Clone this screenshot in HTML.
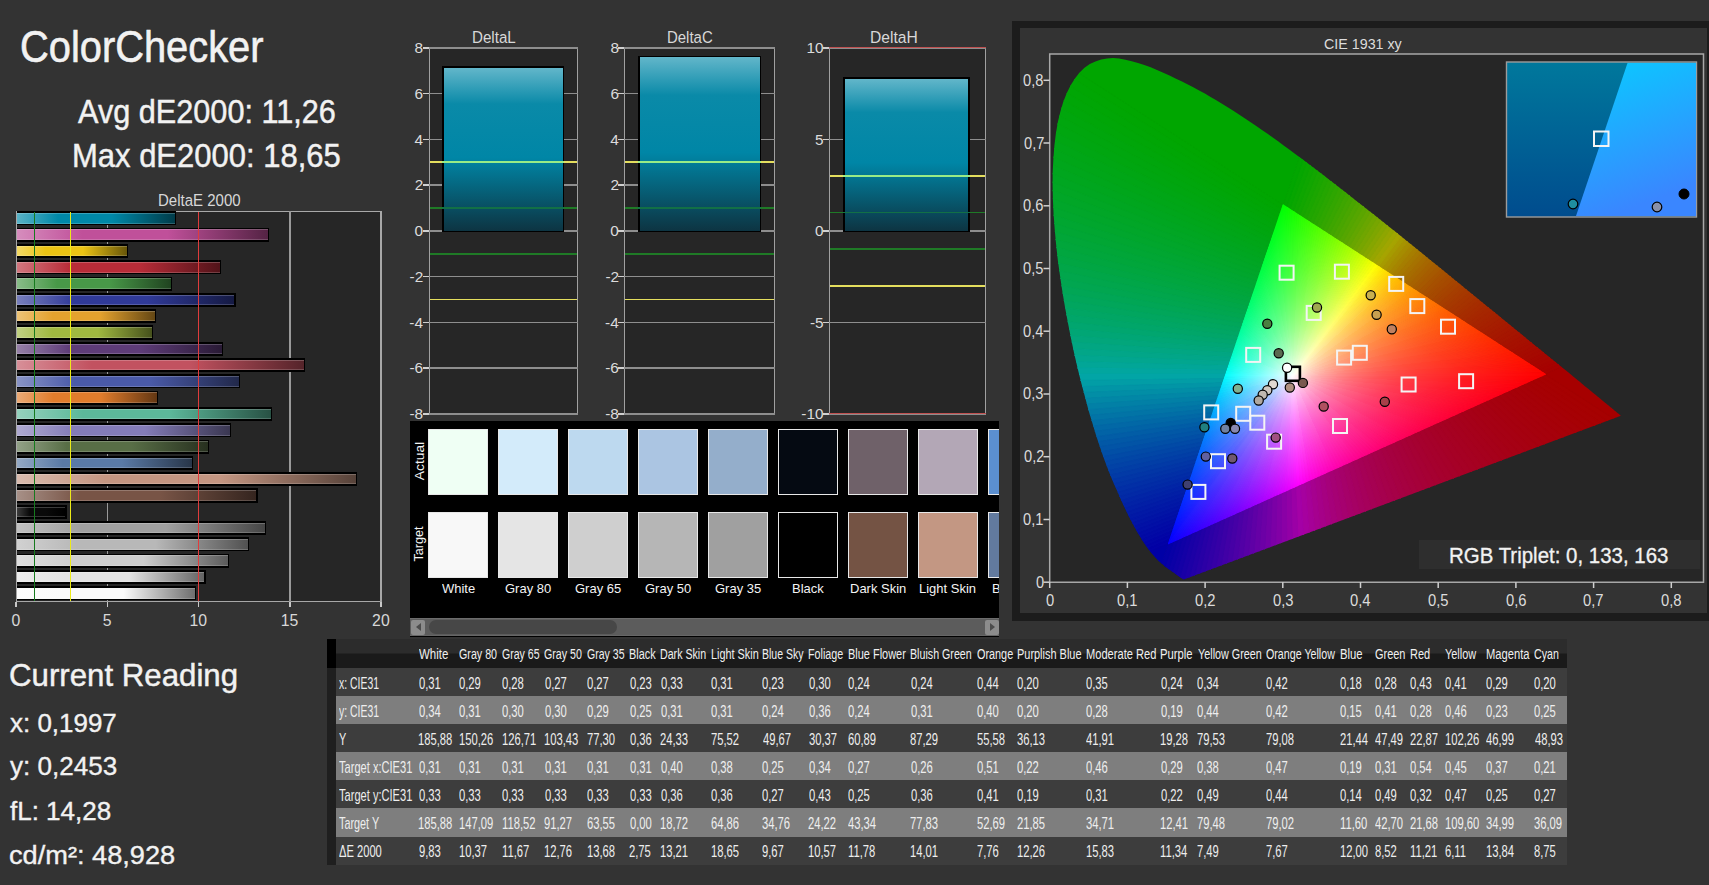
<!DOCTYPE html>
<html><head><meta charset="utf-8"><style>
html,body{margin:0;padding:0;}
body{width:1709px;height:885px;background:#333333;position:relative;overflow:hidden;font-family:"Liberation Sans",sans-serif;}
.t{position:absolute;white-space:pre;transform-origin:0 0;}
</style></head><body>
<div class="t" style="left:19.61px;top:25.00px;font-size:43.77px;line-height:43.77px;color:#f2f2f2;transform:scaleX(0.9101);-webkit-text-stroke:0.60px #f2f2f2;">ColorChecker</div>
<div class="t" style="left:77.80px;top:95.00px;font-size:33.04px;line-height:33.04px;color:#f2f2f2;transform:scaleX(0.9279);-webkit-text-stroke:0.46px #f2f2f2;">Avg dE2000: 11,26</div>
<div class="t" style="left:71.72px;top:140.00px;font-size:32.46px;line-height:32.46px;color:#f2f2f2;transform:scaleX(0.9547);-webkit-text-stroke:0.45px #f2f2f2;">Max dE2000: 18,65</div>
<div class="t" style="left:157.80px;top:193.00px;font-size:16.52px;line-height:16.52px;color:#d8d8d8;transform:scaleX(0.9096);">DeltaE 2000</div>
<div style="position:absolute;left:16.00px;top:210.50px;width:366.30px;height:391.80px;background:#262626;box-sizing:border-box;border:1.5px solid #a8a8a8;border-right-width:2px"></div>
<div style="position:absolute;left:106.75px;top:210.50px;width:1.50px;height:391.80px;background:#9a9a9a"></div>
<div style="position:absolute;left:289.25px;top:210.50px;width:1.50px;height:391.80px;background:#9a9a9a"></div>
<div style="position:absolute;left:17.00px;top:211.30px;width:159.19px;height:14.20px;background:#000"></div>
<div style="position:absolute;left:17.00px;top:213.10px;width:157.89px;height:10.60px;background:linear-gradient(to right,#59b2c6 0%,#0088a8 26%,#0088a8 60%,#003c4a 100%);box-shadow:inset 0 1px rgba(255,255,255,0.22),inset 0 -1px rgba(255,255,255,0.18)"></div>
<div style="position:absolute;left:17.00px;top:227.60px;width:252.08px;height:14.20px;background:#000"></div>
<div style="position:absolute;left:17.00px;top:229.40px;width:250.78px;height:10.60px;background:linear-gradient(to right,#d68dbd 0%,#c0509a 26%,#c0509a 60%,#542344 100%);box-shadow:inset 0 1px rgba(255,255,255,0.22),inset 0 -1px rgba(255,255,255,0.18)"></div>
<div style="position:absolute;left:17.00px;top:243.90px;width:111.01px;height:14.20px;background:#000"></div>
<div style="position:absolute;left:17.00px;top:245.70px;width:109.71px;height:10.60px;background:linear-gradient(to right,#f3d966 0%,#ecc414 26%,#ecc414 60%,#685609 100%);box-shadow:inset 0 1px rgba(255,255,255,0.22),inset 0 -1px rgba(255,255,255,0.18)"></div>
<div style="position:absolute;left:17.00px;top:260.20px;width:204.08px;height:14.20px;background:#000"></div>
<div style="position:absolute;left:17.00px;top:262.00px;width:202.78px;height:10.60px;background:linear-gradient(to right,#d1767e 0%,#b82c38 26%,#b82c38 60%,#511319 100%);box-shadow:inset 0 1px rgba(255,255,255,0.22),inset 0 -1px rgba(255,255,255,0.18)"></div>
<div style="position:absolute;left:17.00px;top:276.50px;width:154.99px;height:14.20px;background:#000"></div>
<div style="position:absolute;left:17.00px;top:278.30px;width:153.69px;height:10.60px;background:linear-gradient(to right,#88bc88 0%,#489848 26%,#489848 60%,#204320 100%);box-shadow:inset 0 1px rgba(255,255,255,0.22),inset 0 -1px rgba(255,255,255,0.18)"></div>
<div style="position:absolute;left:17.00px;top:292.80px;width:218.50px;height:14.20px;background:#000"></div>
<div style="position:absolute;left:17.00px;top:294.60px;width:217.20px;height:10.60px;background:linear-gradient(to right,#787fbc 0%,#303a98 26%,#303a98 60%,#151a43 100%);box-shadow:inset 0 1px rgba(255,255,255,0.22),inset 0 -1px rgba(255,255,255,0.18)"></div>
<div style="position:absolute;left:17.00px;top:309.10px;width:139.48px;height:14.20px;background:#000"></div>
<div style="position:absolute;left:17.00px;top:310.90px;width:138.18px;height:10.60px;background:linear-gradient(to right,#edc377 0%,#e4a22e 26%,#e4a22e 60%,#644714 100%);box-shadow:inset 0 1px rgba(255,255,255,0.22),inset 0 -1px rgba(255,255,255,0.18)"></div>
<div style="position:absolute;left:17.00px;top:325.40px;width:136.19px;height:14.20px;background:#000"></div>
<div style="position:absolute;left:17.00px;top:327.20px;width:134.89px;height:10.60px;background:linear-gradient(to right,#c1d183 0%,#a0b840 26%,#a0b840 60%,#46511c 100%);box-shadow:inset 0 1px rgba(255,255,255,0.22),inset 0 -1px rgba(255,255,255,0.18)"></div>
<div style="position:absolute;left:17.00px;top:341.70px;width:206.45px;height:14.20px;background:#000"></div>
<div style="position:absolute;left:17.00px;top:343.50px;width:205.15px;height:10.60px;background:linear-gradient(to right,#9680a7 0%,#5e3c78 26%,#5e3c78 60%,#291a35 100%);box-shadow:inset 0 1px rgba(255,255,255,0.22),inset 0 -1px rgba(255,255,255,0.18)"></div>
<div style="position:absolute;left:17.00px;top:358.00px;width:288.40px;height:14.20px;background:#000"></div>
<div style="position:absolute;left:17.00px;top:359.80px;width:287.10px;height:10.60px;background:linear-gradient(to right,#d78f98 0%,#c25260 26%,#c25260 60%,#55242a 100%);box-shadow:inset 0 1px rgba(255,255,255,0.22),inset 0 -1px rgba(255,255,255,0.18)"></div>
<div style="position:absolute;left:17.00px;top:374.30px;width:223.25px;height:14.20px;background:#000"></div>
<div style="position:absolute;left:17.00px;top:376.10px;width:221.94px;height:10.60px;background:linear-gradient(to right,#8994c6 0%,#4a5aa8 26%,#4a5aa8 60%,#21284a 100%);box-shadow:inset 0 1px rgba(255,255,255,0.22),inset 0 -1px rgba(255,255,255,0.18)"></div>
<div style="position:absolute;left:17.00px;top:390.60px;width:141.12px;height:14.20px;background:#000"></div>
<div style="position:absolute;left:17.00px;top:392.40px;width:139.82px;height:10.60px;background:linear-gradient(to right,#ebaa76 0%,#e07c2c 26%,#e07c2c 60%,#633713 100%);box-shadow:inset 0 1px rgba(255,255,255,0.22),inset 0 -1px rgba(255,255,255,0.18)"></div>
<div style="position:absolute;left:17.00px;top:406.90px;width:255.18px;height:14.20px;background:#000"></div>
<div style="position:absolute;left:17.00px;top:408.70px;width:253.88px;height:10.60px;background:linear-gradient(to right,#95d1bd 0%,#5cb89a 26%,#5cb89a 60%,#285144 100%);box-shadow:inset 0 1px rgba(255,255,255,0.22),inset 0 -1px rgba(255,255,255,0.18)"></div>
<div style="position:absolute;left:17.00px;top:423.20px;width:214.48px;height:14.20px;background:#000"></div>
<div style="position:absolute;left:17.00px;top:425.00px;width:213.18px;height:10.60px;background:linear-gradient(to right,#afaad1 0%,#847cb8 26%,#847cb8 60%,#3a3751 100%);box-shadow:inset 0 1px rgba(255,255,255,0.22),inset 0 -1px rgba(255,255,255,0.18)"></div>
<div style="position:absolute;left:17.00px;top:439.50px;width:192.40px;height:14.20px;background:#000"></div>
<div style="position:absolute;left:17.00px;top:441.30px;width:191.10px;height:10.60px;background:linear-gradient(to right,#92a187 0%,#586e46 26%,#586e46 60%,#27301f 100%);box-shadow:inset 0 1px rgba(255,255,255,0.22),inset 0 -1px rgba(255,255,255,0.18)"></div>
<div style="position:absolute;left:17.00px;top:455.80px;width:175.98px;height:14.20px;background:#000"></div>
<div style="position:absolute;left:17.00px;top:457.60px;width:174.68px;height:10.60px;background:linear-gradient(to right,#94a9c5 0%,#5a7aa6 26%,#5a7aa6 60%,#283649 100%);box-shadow:inset 0 1px rgba(255,255,255,0.22),inset 0 -1px rgba(255,255,255,0.18)"></div>
<div style="position:absolute;left:17.00px;top:472.10px;width:339.86px;height:14.20px;background:#000"></div>
<div style="position:absolute;left:17.00px;top:473.90px;width:338.56px;height:10.60px;background:linear-gradient(to right,#d9bbae 0%,#c49682 26%,#c49682 60%,#564239 100%);box-shadow:inset 0 1px rgba(255,255,255,0.22),inset 0 -1px rgba(255,255,255,0.18)"></div>
<div style="position:absolute;left:17.00px;top:488.40px;width:240.58px;height:14.20px;background:#000"></div>
<div style="position:absolute;left:17.00px;top:490.20px;width:239.28px;height:10.60px;background:linear-gradient(to right,#a79087 0%,#785446 26%,#785446 60%,#35251f 100%);box-shadow:inset 0 1px rgba(255,255,255,0.22),inset 0 -1px rgba(255,255,255,0.18)"></div>
<div style="position:absolute;left:17.00px;top:504.70px;width:49.69px;height:14.20px;background:#000"></div>
<div style="position:absolute;left:17.00px;top:506.50px;width:48.39px;height:10.60px;background:linear-gradient(to right,#3c3c3c 0%,#0a0a0a 26%,#0a0a0a 60%,#000000 100%);box-shadow:inset 0 1px rgba(255,255,255,0.22),inset 0 -1px rgba(255,255,255,0.18)"></div>
<div style="position:absolute;left:17.00px;top:521.00px;width:249.16px;height:14.20px;background:#000"></div>
<div style="position:absolute;left:17.00px;top:522.80px;width:247.86px;height:10.60px;background:linear-gradient(to right,#c1c1c1 0%,#a0a0a0 26%,#a0a0a0 60%,#464646 100%);box-shadow:inset 0 1px rgba(255,255,255,0.22),inset 0 -1px rgba(255,255,255,0.18)"></div>
<div style="position:absolute;left:17.00px;top:537.30px;width:232.37px;height:14.20px;background:#000"></div>
<div style="position:absolute;left:17.00px;top:539.10px;width:231.07px;height:10.60px;background:linear-gradient(to right,#d1d1d1 0%,#b8b8b8 26%,#b8b8b8 60%,#515151 100%);box-shadow:inset 0 1px rgba(255,255,255,0.22),inset 0 -1px rgba(255,255,255,0.18)"></div>
<div style="position:absolute;left:17.00px;top:553.60px;width:212.48px;height:14.20px;background:#000"></div>
<div style="position:absolute;left:17.00px;top:555.40px;width:211.18px;height:10.60px;background:linear-gradient(to right,#dfdfdf 0%,#cecece 26%,#cecece 60%,#5b5b5b 100%);box-shadow:inset 0 1px rgba(255,255,255,0.22),inset 0 -1px rgba(255,255,255,0.18)"></div>
<div style="position:absolute;left:17.00px;top:569.90px;width:188.75px;height:14.20px;background:#000"></div>
<div style="position:absolute;left:17.00px;top:571.70px;width:187.45px;height:10.60px;background:linear-gradient(to right,#ececec 0%,#e2e2e2 26%,#e2e2e2 60%,#636363 100%);box-shadow:inset 0 1px rgba(255,255,255,0.22),inset 0 -1px rgba(255,255,255,0.18)"></div>
<div style="position:absolute;left:17.00px;top:586.20px;width:178.90px;height:14.20px;background:#000"></div>
<div style="position:absolute;left:17.00px;top:588.00px;width:177.60px;height:10.60px;background:linear-gradient(to right,#fcfcfc 0%,#fafafa 26%,#fafafa 60%,#6e6e6e 100%);box-shadow:inset 0 1px rgba(255,255,255,0.22),inset 0 -1px rgba(255,255,255,0.18)"></div>
<div style="position:absolute;left:33.60px;top:211.50px;width:1.30px;height:389.80px;background:#167a1e"></div>
<div style="position:absolute;left:70.05px;top:211.50px;width:1.40px;height:389.80px;background:#ecea18"></div>
<div style="position:absolute;left:197.70px;top:211.50px;width:1.60px;height:389.80px;background:#e03c3c"></div>
<div style="position:absolute;left:15.25px;top:602.30px;width:1.50px;height:5.00px;background:#c8c8c8"></div>
<div class="t" style="left:11.58px;top:613.00px;font-size:15.80px;line-height:15.80px;color:#d8d8d8;">0</div>
<div style="position:absolute;left:106.50px;top:602.30px;width:1.50px;height:5.00px;background:#c8c8c8"></div>
<div class="t" style="left:102.87px;top:613.00px;font-size:15.80px;line-height:15.80px;color:#d8d8d8;">5</div>
<div style="position:absolute;left:197.75px;top:602.30px;width:1.50px;height:5.00px;background:#c8c8c8"></div>
<div class="t" style="left:189.42px;top:613.00px;font-size:15.80px;line-height:15.80px;color:#d8d8d8;">10</div>
<div style="position:absolute;left:289.00px;top:602.30px;width:1.50px;height:5.00px;background:#c8c8c8"></div>
<div class="t" style="left:280.71px;top:613.00px;font-size:15.80px;line-height:15.80px;color:#d8d8d8;">15</div>
<div style="position:absolute;left:380.25px;top:602.30px;width:1.50px;height:5.00px;background:#c8c8c8"></div>
<div class="t" style="left:372.11px;top:613.00px;font-size:15.80px;line-height:15.80px;color:#d8d8d8;">20</div>
<div class="t" style="left:471.99px;top:30.00px;font-size:16.52px;line-height:16.52px;color:#d8d8d8;transform:scaleX(0.9166);">DeltaL</div>
<div style="position:absolute;left:428.50px;top:47.80px;width:149.80px;height:366.00px;background:#262626;box-sizing:border-box;border:1.5px solid #a0a0a0"></div>
<div style="position:absolute;left:428.50px;top:47.05px;width:149.80px;height:1.50px;background:#8e8e8e"></div>
<div style="position:absolute;left:428.50px;top:92.80px;width:149.80px;height:1.50px;background:#8e8e8e"></div>
<div style="position:absolute;left:428.50px;top:138.55px;width:149.80px;height:1.50px;background:#8e8e8e"></div>
<div style="position:absolute;left:428.50px;top:184.30px;width:149.80px;height:1.50px;background:#8e8e8e"></div>
<div style="position:absolute;left:428.50px;top:230.05px;width:149.80px;height:1.50px;background:#8e8e8e"></div>
<div style="position:absolute;left:428.50px;top:275.80px;width:149.80px;height:1.50px;background:#8e8e8e"></div>
<div style="position:absolute;left:428.50px;top:321.55px;width:149.80px;height:1.50px;background:#8e8e8e"></div>
<div style="position:absolute;left:428.50px;top:367.30px;width:149.80px;height:1.50px;background:#8e8e8e"></div>
<div style="position:absolute;left:428.50px;top:413.05px;width:149.80px;height:1.50px;background:#8e8e8e"></div>
<div style="position:absolute;left:442.20px;top:66.30px;width:122.00px;height:165.30px;background:#000"></div>
<div style="position:absolute;left:443.70px;top:67.50px;width:119.00px;height:163.30px;background:linear-gradient(to bottom,#62b6ca 0%,#0a8aa8 22%,#0086a6 55%,#0d3442 100%)"></div>
<div style="position:absolute;left:429.50px;top:207.03px;width:147.80px;height:1.80px;background:#1f7a26"></div>
<div style="position:absolute;left:442.20px;top:207.03px;width:122.00px;height:1.80px;background:#127046"></div>
<div style="position:absolute;left:429.50px;top:252.78px;width:147.80px;height:1.80px;background:#1f7a26"></div>
<div style="position:absolute;left:429.50px;top:161.28px;width:147.80px;height:1.80px;background:#e4de5e"></div>
<div style="position:absolute;left:442.20px;top:161.28px;width:122.00px;height:1.80px;background:#98ec86"></div>
<div style="position:absolute;left:429.50px;top:298.53px;width:147.80px;height:1.80px;background:#e4de5e"></div>
<div style="position:absolute;left:422.50px;top:47.05px;width:6.00px;height:1.50px;background:#d0d0d0"></div>
<div class="t" style="left:414.59px;top:40.00px;font-size:15.36px;line-height:15.36px;color:#dcdcdc;">8</div>
<div style="position:absolute;left:422.50px;top:92.80px;width:6.00px;height:1.50px;background:#d0d0d0"></div>
<div class="t" style="left:414.59px;top:86.00px;font-size:15.36px;line-height:15.36px;color:#dcdcdc;">6</div>
<div style="position:absolute;left:422.50px;top:138.55px;width:6.00px;height:1.50px;background:#d0d0d0"></div>
<div class="t" style="left:414.43px;top:132.00px;font-size:15.36px;line-height:15.36px;color:#dcdcdc;">4</div>
<div style="position:absolute;left:422.50px;top:184.30px;width:6.00px;height:1.50px;background:#d0d0d0"></div>
<div class="t" style="left:414.74px;top:177.00px;font-size:15.36px;line-height:15.36px;color:#dcdcdc;">2</div>
<div style="position:absolute;left:422.50px;top:230.05px;width:6.00px;height:1.50px;background:#d0d0d0"></div>
<div class="t" style="left:414.51px;top:223.00px;font-size:15.36px;line-height:15.36px;color:#dcdcdc;">0</div>
<div style="position:absolute;left:422.50px;top:275.80px;width:6.00px;height:1.50px;background:#d0d0d0"></div>
<div class="t" style="left:409.60px;top:269.00px;font-size:15.36px;line-height:15.36px;color:#dcdcdc;">-2</div>
<div style="position:absolute;left:422.50px;top:321.55px;width:6.00px;height:1.50px;background:#d0d0d0"></div>
<div class="t" style="left:409.29px;top:315.00px;font-size:15.36px;line-height:15.36px;color:#dcdcdc;">-4</div>
<div style="position:absolute;left:422.50px;top:367.30px;width:6.00px;height:1.50px;background:#d0d0d0"></div>
<div class="t" style="left:409.44px;top:360.00px;font-size:15.36px;line-height:15.36px;color:#dcdcdc;">-6</div>
<div style="position:absolute;left:422.50px;top:413.05px;width:6.00px;height:1.50px;background:#d0d0d0"></div>
<div class="t" style="left:409.44px;top:406.00px;font-size:15.36px;line-height:15.36px;color:#dcdcdc;">-8</div>
<div class="t" style="left:667.10px;top:30.00px;font-size:16.52px;line-height:16.52px;color:#d8d8d8;transform:scaleX(0.9058);">DeltaC</div>
<div style="position:absolute;left:624.30px;top:47.80px;width:150.80px;height:366.00px;background:#262626;box-sizing:border-box;border:1.5px solid #a0a0a0"></div>
<div style="position:absolute;left:624.30px;top:47.05px;width:150.80px;height:1.50px;background:#8e8e8e"></div>
<div style="position:absolute;left:624.30px;top:92.80px;width:150.80px;height:1.50px;background:#8e8e8e"></div>
<div style="position:absolute;left:624.30px;top:138.55px;width:150.80px;height:1.50px;background:#8e8e8e"></div>
<div style="position:absolute;left:624.30px;top:184.30px;width:150.80px;height:1.50px;background:#8e8e8e"></div>
<div style="position:absolute;left:624.30px;top:230.05px;width:150.80px;height:1.50px;background:#8e8e8e"></div>
<div style="position:absolute;left:624.30px;top:275.80px;width:150.80px;height:1.50px;background:#8e8e8e"></div>
<div style="position:absolute;left:624.30px;top:321.55px;width:150.80px;height:1.50px;background:#8e8e8e"></div>
<div style="position:absolute;left:624.30px;top:367.30px;width:150.80px;height:1.50px;background:#8e8e8e"></div>
<div style="position:absolute;left:624.30px;top:413.05px;width:150.80px;height:1.50px;background:#8e8e8e"></div>
<div style="position:absolute;left:638.20px;top:55.60px;width:123.00px;height:176.00px;background:#000"></div>
<div style="position:absolute;left:639.70px;top:56.80px;width:120.00px;height:174.00px;background:linear-gradient(to bottom,#62b6ca 0%,#0a8aa8 22%,#0086a6 55%,#0d3442 100%)"></div>
<div style="position:absolute;left:625.30px;top:207.03px;width:148.80px;height:1.80px;background:#1f7a26"></div>
<div style="position:absolute;left:638.20px;top:207.03px;width:123.00px;height:1.80px;background:#127046"></div>
<div style="position:absolute;left:625.30px;top:252.78px;width:148.80px;height:1.80px;background:#1f7a26"></div>
<div style="position:absolute;left:625.30px;top:161.28px;width:148.80px;height:1.80px;background:#e4de5e"></div>
<div style="position:absolute;left:638.20px;top:161.28px;width:123.00px;height:1.80px;background:#98ec86"></div>
<div style="position:absolute;left:625.30px;top:298.53px;width:148.80px;height:1.80px;background:#e4de5e"></div>
<div style="position:absolute;left:618.30px;top:47.05px;width:6.00px;height:1.50px;background:#d0d0d0"></div>
<div class="t" style="left:610.39px;top:40.00px;font-size:15.36px;line-height:15.36px;color:#dcdcdc;">8</div>
<div style="position:absolute;left:618.30px;top:92.80px;width:6.00px;height:1.50px;background:#d0d0d0"></div>
<div class="t" style="left:610.39px;top:86.00px;font-size:15.36px;line-height:15.36px;color:#dcdcdc;">6</div>
<div style="position:absolute;left:618.30px;top:138.55px;width:6.00px;height:1.50px;background:#d0d0d0"></div>
<div class="t" style="left:610.23px;top:132.00px;font-size:15.36px;line-height:15.36px;color:#dcdcdc;">4</div>
<div style="position:absolute;left:618.30px;top:184.30px;width:6.00px;height:1.50px;background:#d0d0d0"></div>
<div class="t" style="left:610.54px;top:177.00px;font-size:15.36px;line-height:15.36px;color:#dcdcdc;">2</div>
<div style="position:absolute;left:618.30px;top:230.05px;width:6.00px;height:1.50px;background:#d0d0d0"></div>
<div class="t" style="left:610.31px;top:223.00px;font-size:15.36px;line-height:15.36px;color:#dcdcdc;">0</div>
<div style="position:absolute;left:618.30px;top:275.80px;width:6.00px;height:1.50px;background:#d0d0d0"></div>
<div class="t" style="left:605.40px;top:269.00px;font-size:15.36px;line-height:15.36px;color:#dcdcdc;">-2</div>
<div style="position:absolute;left:618.30px;top:321.55px;width:6.00px;height:1.50px;background:#d0d0d0"></div>
<div class="t" style="left:605.09px;top:315.00px;font-size:15.36px;line-height:15.36px;color:#dcdcdc;">-4</div>
<div style="position:absolute;left:618.30px;top:367.30px;width:6.00px;height:1.50px;background:#d0d0d0"></div>
<div class="t" style="left:605.24px;top:360.00px;font-size:15.36px;line-height:15.36px;color:#dcdcdc;">-6</div>
<div style="position:absolute;left:618.30px;top:413.05px;width:6.00px;height:1.50px;background:#d0d0d0"></div>
<div class="t" style="left:605.24px;top:406.00px;font-size:15.36px;line-height:15.36px;color:#dcdcdc;">-8</div>
<div class="t" style="left:869.55px;top:30.00px;font-size:16.52px;line-height:16.52px;color:#d8d8d8;transform:scaleX(0.9450);">DeltaH</div>
<div style="position:absolute;left:829.00px;top:47.80px;width:156.60px;height:366.00px;background:#262626;box-sizing:border-box;border:1.5px solid #a0a0a0"></div>
<div style="position:absolute;left:829.00px;top:47.05px;width:156.60px;height:1.50px;background:#8e8e8e"></div>
<div style="position:absolute;left:829.00px;top:138.55px;width:156.60px;height:1.50px;background:#8e8e8e"></div>
<div style="position:absolute;left:829.00px;top:230.05px;width:156.60px;height:1.50px;background:#8e8e8e"></div>
<div style="position:absolute;left:829.00px;top:321.55px;width:156.60px;height:1.50px;background:#8e8e8e"></div>
<div style="position:absolute;left:829.00px;top:413.05px;width:156.60px;height:1.50px;background:#8e8e8e"></div>
<div style="position:absolute;left:829.00px;top:47.20px;width:156.60px;height:1.20px;background:#c05050"></div>
<div style="position:absolute;left:829.00px;top:413.20px;width:156.60px;height:1.20px;background:#c05050"></div>
<div style="position:absolute;left:843.20px;top:77.40px;width:126.80px;height:154.20px;background:#000"></div>
<div style="position:absolute;left:844.70px;top:78.60px;width:123.80px;height:152.20px;background:linear-gradient(to bottom,#62b6ca 0%,#0a8aa8 22%,#0086a6 55%,#0d3442 100%)"></div>
<div style="position:absolute;left:830.00px;top:211.60px;width:154.60px;height:1.80px;background:#1f7a26"></div>
<div style="position:absolute;left:843.20px;top:211.60px;width:126.80px;height:1.80px;background:#127046"></div>
<div style="position:absolute;left:830.00px;top:248.20px;width:154.60px;height:1.80px;background:#1f7a26"></div>
<div style="position:absolute;left:830.00px;top:175.00px;width:154.60px;height:1.80px;background:#e4de5e"></div>
<div style="position:absolute;left:843.20px;top:175.00px;width:126.80px;height:1.80px;background:#98ec86"></div>
<div style="position:absolute;left:830.00px;top:284.80px;width:154.60px;height:1.80px;background:#e4de5e"></div>
<div style="position:absolute;left:823.00px;top:47.05px;width:6.00px;height:1.50px;background:#d0d0d0"></div>
<div class="t" style="left:806.49px;top:40.00px;font-size:15.36px;line-height:15.36px;color:#dcdcdc;">10</div>
<div style="position:absolute;left:823.00px;top:138.55px;width:6.00px;height:1.50px;background:#d0d0d0"></div>
<div class="t" style="left:815.09px;top:132.00px;font-size:15.36px;line-height:15.36px;color:#dcdcdc;">5</div>
<div style="position:absolute;left:823.00px;top:230.05px;width:6.00px;height:1.50px;background:#d0d0d0"></div>
<div class="t" style="left:815.01px;top:223.00px;font-size:15.36px;line-height:15.36px;color:#dcdcdc;">0</div>
<div style="position:absolute;left:823.00px;top:321.55px;width:6.00px;height:1.50px;background:#d0d0d0"></div>
<div class="t" style="left:809.94px;top:315.00px;font-size:15.36px;line-height:15.36px;color:#dcdcdc;">-5</div>
<div style="position:absolute;left:823.00px;top:413.05px;width:6.00px;height:1.50px;background:#d0d0d0"></div>
<div class="t" style="left:801.34px;top:406.00px;font-size:15.36px;line-height:15.36px;color:#dcdcdc;">-10</div>
<div style="position:absolute;left:410.00px;top:420.50px;width:589.00px;height:216.00px;background:#000"></div>
<div style="position:absolute;left:428.00px;top:429.00px;width:60.00px;height:66.00px;background:#effff4;box-sizing:border-box;border:1.3px solid #e8e8e8;"></div>
<div style="position:absolute;left:428.00px;top:512.00px;width:60.00px;height:66.00px;background:#f8f8f8;box-sizing:border-box;border:1.3px solid #e8e8e8;"></div>
<div style="position:absolute;left:498.00px;top:429.00px;width:60.00px;height:66.00px;background:#d3ebfa;box-sizing:border-box;border:1.3px solid #e8e8e8;"></div>
<div style="position:absolute;left:498.00px;top:512.00px;width:60.00px;height:66.00px;background:#e5e5e5;box-sizing:border-box;border:1.3px solid #e8e8e8;"></div>
<div style="position:absolute;left:568.00px;top:429.00px;width:60.00px;height:66.00px;background:#bdd9ef;box-sizing:border-box;border:1.3px solid #e8e8e8;"></div>
<div style="position:absolute;left:568.00px;top:512.00px;width:60.00px;height:66.00px;background:#cfcfcf;box-sizing:border-box;border:1.3px solid #e8e8e8;"></div>
<div style="position:absolute;left:638.00px;top:429.00px;width:60.00px;height:66.00px;background:#abc5e2;box-sizing:border-box;border:1.3px solid #e8e8e8;"></div>
<div style="position:absolute;left:638.00px;top:512.00px;width:60.00px;height:66.00px;background:#b6b6b6;box-sizing:border-box;border:1.3px solid #e8e8e8;"></div>
<div style="position:absolute;left:708.00px;top:429.00px;width:60.00px;height:66.00px;background:#94aecb;box-sizing:border-box;border:1.3px solid #e8e8e8;"></div>
<div style="position:absolute;left:708.00px;top:512.00px;width:60.00px;height:66.00px;background:#a0a0a0;box-sizing:border-box;border:1.3px solid #e8e8e8;"></div>
<div style="position:absolute;left:778.00px;top:429.00px;width:60.00px;height:66.00px;background:#050a12;box-sizing:border-box;border:1.3px solid #e8e8e8;"></div>
<div style="position:absolute;left:778.00px;top:512.00px;width:60.00px;height:66.00px;background:#000000;box-sizing:border-box;border:1.3px solid #e8e8e8;"></div>
<div style="position:absolute;left:848.00px;top:429.00px;width:60.00px;height:66.00px;background:#6f6169;box-sizing:border-box;border:1.3px solid #e8e8e8;"></div>
<div style="position:absolute;left:848.00px;top:512.00px;width:60.00px;height:66.00px;background:#745344;box-sizing:border-box;border:1.3px solid #e8e8e8;"></div>
<div style="position:absolute;left:918.00px;top:429.00px;width:60.00px;height:66.00px;background:#b3a7b6;box-sizing:border-box;border:1.3px solid #e8e8e8;"></div>
<div style="position:absolute;left:918.00px;top:512.00px;width:60.00px;height:66.00px;background:#c39783;box-sizing:border-box;border:1.3px solid #e8e8e8;"></div>
<div style="position:absolute;left:988.00px;top:429.00px;width:11.00px;height:66.00px;background:#5b8fd0;box-sizing:border-box;border:1.3px solid #e8e8e8;border-right:none;"></div>
<div style="position:absolute;left:988.00px;top:512.00px;width:11.00px;height:66.00px;background:#627a9e;box-sizing:border-box;border:1.3px solid #e8e8e8;border-right:none;"></div>
<div style="position:absolute;left:410px;top:570px;width:589px;height:40px;overflow:hidden">
<div class="t" style="left:31.67px;top:12.29px;font-size:13.6px;line-height:13.6px;color:#f4f4f4;transform:scaleX(0.955)">White</div>
<div class="t" style="left:94.82px;top:12.29px;font-size:13.6px;line-height:13.6px;color:#f4f4f4;transform:scaleX(0.955)">Gray 80</div>
<div class="t" style="left:164.85px;top:12.29px;font-size:13.6px;line-height:13.6px;color:#f4f4f4;transform:scaleX(0.955)">Gray 65</div>
<div class="t" style="left:234.82px;top:12.29px;font-size:13.6px;line-height:13.6px;color:#f4f4f4;transform:scaleX(0.955)">Gray 50</div>
<div class="t" style="left:304.85px;top:12.29px;font-size:13.6px;line-height:13.6px;color:#f4f4f4;transform:scaleX(0.955)">Gray 35</div>
<div class="t" style="left:381.60px;top:12.29px;font-size:13.6px;line-height:13.6px;color:#f4f4f4;transform:scaleX(0.955)">Black</div>
<div class="t" style="left:439.75px;top:12.29px;font-size:13.6px;line-height:13.6px;color:#f4f4f4;transform:scaleX(0.955)">Dark Skin</div>
<div class="t" style="left:509.39px;top:12.29px;font-size:13.6px;line-height:13.6px;color:#f4f4f4;transform:scaleX(0.955)">Light Skin</div>
<div class="t" style="left:581.86px;top:12.29px;font-size:13.6px;line-height:13.6px;color:#f4f4f4;transform:scaleX(0.955)">Blue Sky</div>
</div>
<div class="t" style="left:419.00px;top:461.40px;font-size:13.0px;line-height:13.0px;color:#f4f4f4;transform:translate(-50%,-50%) rotate(-90deg) scaleX(1.059);transform-origin:50% 50%;white-space:nowrap"><span style="display:inline-block">Actual</span></div>
<div class="t" style="left:418.10px;top:544.00px;font-size:13.0px;line-height:13.0px;color:#f4f4f4;transform:translate(-50%,-50%) rotate(-90deg) scaleX(0.973);transform-origin:50% 50%;white-space:nowrap"><span style="display:inline-block">Target</span></div>
<div style="position:absolute;left:410.00px;top:618.00px;width:589.00px;height:18.00px;background:#5c5c5c;box-sizing:border-box;border-top:1px solid #6c6c6c;border-bottom:1px solid #666"></div>
<div style="position:absolute;left:428.70px;top:619.60px;width:188.50px;height:14.60px;background:#474747;border-radius:7px"></div>
<div style="position:absolute;left:410.50px;top:619.50px;width:14.30px;height:15.00px;background:#8c8c8c;border-radius:2px"></div>
<div style="position:absolute;left:415.5px;top:622.5px;width:0;height:0;border-top:4.5px solid transparent;border-bottom:4.5px solid transparent;border-right:5px solid #4c4c4c"></div>
<div style="position:absolute;left:984.50px;top:619.50px;width:14.30px;height:15.00px;background:#8c8c8c;border-radius:2px"></div>
<div style="position:absolute;left:989.5px;top:622.5px;width:0;height:0;border-top:4.5px solid transparent;border-bottom:4.5px solid transparent;border-left:5px solid #4c4c4c"></div>
<div class="t" style="left:8.74px;top:659.00px;font-size:32.17px;line-height:32.17px;color:#f2f2f2;transform:scaleX(0.9707);-webkit-text-stroke:0.45px #f2f2f2;">Current Reading</div>
<div class="t" style="left:10.04px;top:710.00px;font-size:26.38px;line-height:26.38px;color:#f2f2f2;transform:scaleX(0.9836);-webkit-text-stroke:0.37px #f2f2f2;">x: 0,1997</div>
<div class="t" style="left:10.17px;top:754.00px;font-size:25.94px;line-height:25.94px;color:#f2f2f2;transform:scaleX(1.0039);-webkit-text-stroke:0.36px #f2f2f2;">y: 0,2453</div>
<div class="t" style="left:9.91px;top:798.00px;font-size:26.09px;line-height:26.09px;color:#f2f2f2;transform:scaleX(0.9966);-webkit-text-stroke:0.37px #f2f2f2;">fL: 14,28</div>
<div class="t" style="left:9.21px;top:843.00px;font-size:25.51px;line-height:25.51px;color:#f2f2f2;transform:scaleX(1.0660);-webkit-text-stroke:0.36px #f2f2f2;">cd/m²: 48,928</div>
<div style="position:absolute;left:327.00px;top:638.50px;width:1240.00px;height:29.40px;background:linear-gradient(to bottom,#2c2c2c 0%,#2c2c2c 48%,#1a1a1a 52%,#1a1a1a 100%)"></div>
<div style="position:absolute;left:327.00px;top:638.50px;width:9.00px;height:29.40px;background:#000"></div>
<div style="position:absolute;left:327.00px;top:667.90px;width:1240.00px;height:28.30px;background:#3d3d3d"></div>
<div style="position:absolute;left:327.00px;top:667.90px;width:9.00px;height:28.30px;background:#1f1f1f"></div>
<div style="position:absolute;left:327.00px;top:696.00px;width:1240.00px;height:28.30px;background:#7e7e7e"></div>
<div style="position:absolute;left:327.00px;top:696.00px;width:9.00px;height:28.30px;background:#1f1f1f"></div>
<div style="position:absolute;left:327.00px;top:724.10px;width:1240.00px;height:28.30px;background:#3d3d3d"></div>
<div style="position:absolute;left:327.00px;top:724.10px;width:9.00px;height:28.30px;background:#1f1f1f"></div>
<div style="position:absolute;left:327.00px;top:752.20px;width:1240.00px;height:28.30px;background:#7e7e7e"></div>
<div style="position:absolute;left:327.00px;top:752.20px;width:9.00px;height:28.30px;background:#1f1f1f"></div>
<div style="position:absolute;left:327.00px;top:780.30px;width:1240.00px;height:28.30px;background:#3d3d3d"></div>
<div style="position:absolute;left:327.00px;top:780.30px;width:9.00px;height:28.30px;background:#1f1f1f"></div>
<div style="position:absolute;left:327.00px;top:808.40px;width:1240.00px;height:28.30px;background:#7e7e7e"></div>
<div style="position:absolute;left:327.00px;top:808.40px;width:9.00px;height:28.30px;background:#1f1f1f"></div>
<div style="position:absolute;left:327.00px;top:836.50px;width:1240.00px;height:28.30px;background:#3d3d3d"></div>
<div style="position:absolute;left:327.00px;top:836.50px;width:9.00px;height:28.30px;background:#1f1f1f"></div>
<div class="t" style="left:419.24px;top:646.00px;font-size:15.36px;line-height:15.36px;color:#f0f0f0;transform:scaleX(0.7458);">White</div>
<div class="t" style="left:459.17px;top:646.00px;font-size:15.36px;line-height:15.36px;color:#f0f0f0;transform:scaleX(0.6960);">Gray 80</div>
<div class="t" style="left:501.97px;top:646.00px;font-size:15.36px;line-height:15.36px;color:#f0f0f0;transform:scaleX(0.6876);">Gray 65</div>
<div class="t" style="left:544.47px;top:646.00px;font-size:15.36px;line-height:15.36px;color:#f0f0f0;transform:scaleX(0.6941);">Gray 50</div>
<div class="t" style="left:587.17px;top:646.00px;font-size:15.36px;line-height:15.36px;color:#f0f0f0;transform:scaleX(0.6876);">Gray 35</div>
<div class="t" style="left:629.13px;top:646.00px;font-size:15.36px;line-height:15.36px;color:#f0f0f0;transform:scaleX(0.7074);">Black</div>
<div class="t" style="left:660.15px;top:646.00px;font-size:15.36px;line-height:15.36px;color:#f0f0f0;transform:scaleX(0.6929);">Dark Skin</div>
<div class="t" style="left:710.53px;top:646.00px;font-size:15.36px;line-height:15.36px;color:#f0f0f0;transform:scaleX(0.7069);">Light Skin</div>
<div class="t" style="left:762.06px;top:646.00px;font-size:15.36px;line-height:15.36px;color:#f0f0f0;transform:scaleX(0.6855);">Blue Sky</div>
<div class="t" style="left:808.14px;top:646.00px;font-size:15.36px;line-height:15.36px;color:#f0f0f0;transform:scaleX(0.6994);">Foliage</div>
<div class="t" style="left:847.72px;top:646.00px;font-size:15.36px;line-height:15.36px;color:#f0f0f0;transform:scaleX(0.7125);">Blue Flower</div>
<div class="t" style="left:910.15px;top:646.00px;font-size:15.36px;line-height:15.36px;color:#f0f0f0;transform:scaleX(0.6954);">Bluish Green</div>
<div class="t" style="left:976.71px;top:646.00px;font-size:15.36px;line-height:15.36px;color:#f0f0f0;transform:scaleX(0.7061);">Orange</div>
<div class="t" style="left:1017.02px;top:646.00px;font-size:15.36px;line-height:15.36px;color:#f0f0f0;transform:scaleX(0.7125);">Purplish Blue</div>
<div class="t" style="left:1085.61px;top:646.00px;font-size:15.36px;line-height:15.36px;color:#f0f0f0;transform:scaleX(0.7225);">Moderate Red</div>
<div class="t" style="left:1160.30px;top:646.00px;font-size:15.36px;line-height:15.36px;color:#f0f0f0;transform:scaleX(0.7345);">Purple</div>
<div class="t" style="left:1197.53px;top:646.00px;font-size:15.36px;line-height:15.36px;color:#f0f0f0;transform:scaleX(0.7035);">Yellow Green</div>
<div class="t" style="left:1265.92px;top:646.00px;font-size:15.36px;line-height:15.36px;color:#f0f0f0;transform:scaleX(0.6952);">Orange Yellow</div>
<div class="t" style="left:1339.80px;top:646.00px;font-size:15.36px;line-height:15.36px;color:#f0f0f0;transform:scaleX(0.7360);">Blue</div>
<div class="t" style="left:1374.95px;top:646.00px;font-size:15.36px;line-height:15.36px;color:#f0f0f0;transform:scaleX(0.7132);">Green</div>
<div class="t" style="left:1409.82px;top:646.00px;font-size:15.36px;line-height:15.36px;color:#f0f0f0;transform:scaleX(0.7126);">Red</div>
<div class="t" style="left:1445.13px;top:646.00px;font-size:15.36px;line-height:15.36px;color:#f0f0f0;transform:scaleX(0.7107);">Yellow</div>
<div class="t" style="left:1485.71px;top:646.00px;font-size:15.36px;line-height:15.36px;color:#f0f0f0;transform:scaleX(0.7278);">Magenta</div>
<div class="t" style="left:1534.37px;top:646.00px;font-size:15.36px;line-height:15.36px;color:#f0f0f0;transform:scaleX(0.6920);">Cyan</div>
<div class="t" style="left:339.20px;top:675.00px;font-size:17.39px;line-height:17.39px;color:#eeeeee;transform:scaleX(0.6000);">x: CIE31</div>
<div class="t" style="left:418.85px;top:675.00px;font-size:17.39px;line-height:17.39px;color:#eeeeee;transform:scaleX(0.6460);">0,31</div>
<div class="t" style="left:459.25px;top:675.00px;font-size:17.39px;line-height:17.39px;color:#eeeeee;transform:scaleX(0.6460);">0,29</div>
<div class="t" style="left:502.05px;top:675.00px;font-size:17.39px;line-height:17.39px;color:#eeeeee;transform:scaleX(0.6460);">0,28</div>
<div class="t" style="left:544.55px;top:675.00px;font-size:17.39px;line-height:17.39px;color:#eeeeee;transform:scaleX(0.6460);">0,27</div>
<div class="t" style="left:587.25px;top:675.00px;font-size:17.39px;line-height:17.39px;color:#eeeeee;transform:scaleX(0.6460);">0,27</div>
<div class="t" style="left:629.55px;top:675.00px;font-size:17.39px;line-height:17.39px;color:#eeeeee;transform:scaleX(0.6460);">0,23</div>
<div class="t" style="left:660.55px;top:675.00px;font-size:17.39px;line-height:17.39px;color:#eeeeee;transform:scaleX(0.6460);">0,33</div>
<div class="t" style="left:710.95px;top:675.00px;font-size:17.39px;line-height:17.39px;color:#eeeeee;transform:scaleX(0.6460);">0,31</div>
<div class="t" style="left:762.45px;top:675.00px;font-size:17.39px;line-height:17.39px;color:#eeeeee;transform:scaleX(0.6460);">0,23</div>
<div class="t" style="left:808.55px;top:675.00px;font-size:17.39px;line-height:17.39px;color:#eeeeee;transform:scaleX(0.6460);">0,30</div>
<div class="t" style="left:848.15px;top:675.00px;font-size:17.39px;line-height:17.39px;color:#eeeeee;transform:scaleX(0.6460);">0,24</div>
<div class="t" style="left:910.55px;top:675.00px;font-size:17.39px;line-height:17.39px;color:#eeeeee;transform:scaleX(0.6460);">0,24</div>
<div class="t" style="left:976.75px;top:675.00px;font-size:17.39px;line-height:17.39px;color:#eeeeee;transform:scaleX(0.6460);">0,44</div>
<div class="t" style="left:1017.45px;top:675.00px;font-size:17.39px;line-height:17.39px;color:#eeeeee;transform:scaleX(0.6460);">0,20</div>
<div class="t" style="left:1086.05px;top:675.00px;font-size:17.39px;line-height:17.39px;color:#eeeeee;transform:scaleX(0.6460);">0,35</div>
<div class="t" style="left:1160.75px;top:675.00px;font-size:17.39px;line-height:17.39px;color:#eeeeee;transform:scaleX(0.6460);">0,24</div>
<div class="t" style="left:1197.35px;top:675.00px;font-size:17.39px;line-height:17.39px;color:#eeeeee;transform:scaleX(0.6460);">0,34</div>
<div class="t" style="left:1265.95px;top:675.00px;font-size:17.39px;line-height:17.39px;color:#eeeeee;transform:scaleX(0.6460);">0,42</div>
<div class="t" style="left:1340.25px;top:675.00px;font-size:17.39px;line-height:17.39px;color:#eeeeee;transform:scaleX(0.6460);">0,18</div>
<div class="t" style="left:1375.05px;top:675.00px;font-size:17.39px;line-height:17.39px;color:#eeeeee;transform:scaleX(0.6460);">0,28</div>
<div class="t" style="left:1410.25px;top:675.00px;font-size:17.39px;line-height:17.39px;color:#eeeeee;transform:scaleX(0.6460);">0,43</div>
<div class="t" style="left:1444.95px;top:675.00px;font-size:17.39px;line-height:17.39px;color:#eeeeee;transform:scaleX(0.6460);">0,41</div>
<div class="t" style="left:1486.15px;top:675.00px;font-size:17.39px;line-height:17.39px;color:#eeeeee;transform:scaleX(0.6460);">0,29</div>
<div class="t" style="left:1534.45px;top:675.00px;font-size:17.39px;line-height:17.39px;color:#eeeeee;transform:scaleX(0.6460);">0,20</div>
<div class="t" style="left:339.25px;top:703.00px;font-size:17.39px;line-height:17.39px;color:#eeeeee;transform:scaleX(0.6000);">y: CIE31</div>
<div class="t" style="left:418.85px;top:703.00px;font-size:17.39px;line-height:17.39px;color:#eeeeee;transform:scaleX(0.6460);">0,34</div>
<div class="t" style="left:459.25px;top:703.00px;font-size:17.39px;line-height:17.39px;color:#eeeeee;transform:scaleX(0.6460);">0,31</div>
<div class="t" style="left:502.05px;top:703.00px;font-size:17.39px;line-height:17.39px;color:#eeeeee;transform:scaleX(0.6460);">0,30</div>
<div class="t" style="left:544.55px;top:703.00px;font-size:17.39px;line-height:17.39px;color:#eeeeee;transform:scaleX(0.6460);">0,30</div>
<div class="t" style="left:587.25px;top:703.00px;font-size:17.39px;line-height:17.39px;color:#eeeeee;transform:scaleX(0.6460);">0,29</div>
<div class="t" style="left:629.55px;top:703.00px;font-size:17.39px;line-height:17.39px;color:#eeeeee;transform:scaleX(0.6460);">0,25</div>
<div class="t" style="left:660.55px;top:703.00px;font-size:17.39px;line-height:17.39px;color:#eeeeee;transform:scaleX(0.6460);">0,31</div>
<div class="t" style="left:710.95px;top:703.00px;font-size:17.39px;line-height:17.39px;color:#eeeeee;transform:scaleX(0.6460);">0,31</div>
<div class="t" style="left:762.45px;top:703.00px;font-size:17.39px;line-height:17.39px;color:#eeeeee;transform:scaleX(0.6460);">0,24</div>
<div class="t" style="left:808.55px;top:703.00px;font-size:17.39px;line-height:17.39px;color:#eeeeee;transform:scaleX(0.6460);">0,36</div>
<div class="t" style="left:848.15px;top:703.00px;font-size:17.39px;line-height:17.39px;color:#eeeeee;transform:scaleX(0.6460);">0,24</div>
<div class="t" style="left:910.55px;top:703.00px;font-size:17.39px;line-height:17.39px;color:#eeeeee;transform:scaleX(0.6460);">0,31</div>
<div class="t" style="left:976.75px;top:703.00px;font-size:17.39px;line-height:17.39px;color:#eeeeee;transform:scaleX(0.6460);">0,40</div>
<div class="t" style="left:1017.45px;top:703.00px;font-size:17.39px;line-height:17.39px;color:#eeeeee;transform:scaleX(0.6460);">0,20</div>
<div class="t" style="left:1086.05px;top:703.00px;font-size:17.39px;line-height:17.39px;color:#eeeeee;transform:scaleX(0.6460);">0,28</div>
<div class="t" style="left:1160.75px;top:703.00px;font-size:17.39px;line-height:17.39px;color:#eeeeee;transform:scaleX(0.6460);">0,19</div>
<div class="t" style="left:1197.35px;top:703.00px;font-size:17.39px;line-height:17.39px;color:#eeeeee;transform:scaleX(0.6460);">0,44</div>
<div class="t" style="left:1265.95px;top:703.00px;font-size:17.39px;line-height:17.39px;color:#eeeeee;transform:scaleX(0.6460);">0,42</div>
<div class="t" style="left:1340.25px;top:703.00px;font-size:17.39px;line-height:17.39px;color:#eeeeee;transform:scaleX(0.6460);">0,15</div>
<div class="t" style="left:1375.05px;top:703.00px;font-size:17.39px;line-height:17.39px;color:#eeeeee;transform:scaleX(0.6460);">0,41</div>
<div class="t" style="left:1410.25px;top:703.00px;font-size:17.39px;line-height:17.39px;color:#eeeeee;transform:scaleX(0.6460);">0,28</div>
<div class="t" style="left:1444.95px;top:703.00px;font-size:17.39px;line-height:17.39px;color:#eeeeee;transform:scaleX(0.6460);">0,46</div>
<div class="t" style="left:1486.15px;top:703.00px;font-size:17.39px;line-height:17.39px;color:#eeeeee;transform:scaleX(0.6460);">0,23</div>
<div class="t" style="left:1534.45px;top:703.00px;font-size:17.39px;line-height:17.39px;color:#eeeeee;transform:scaleX(0.6460);">0,25</div>
<div class="t" style="left:339.03px;top:731.00px;font-size:17.39px;line-height:17.39px;color:#eeeeee;transform:scaleX(0.6300);">Y</div>
<div class="t" style="left:418.46px;top:731.00px;font-size:17.39px;line-height:17.39px;color:#eeeeee;transform:scaleX(0.6460);">185,88</div>
<div class="t" style="left:458.86px;top:731.00px;font-size:17.39px;line-height:17.39px;color:#eeeeee;transform:scaleX(0.6460);">150,26</div>
<div class="t" style="left:501.66px;top:731.00px;font-size:17.39px;line-height:17.39px;color:#eeeeee;transform:scaleX(0.6460);">126,71</div>
<div class="t" style="left:544.16px;top:731.00px;font-size:17.39px;line-height:17.39px;color:#eeeeee;transform:scaleX(0.6460);">103,43</div>
<div class="t" style="left:587.14px;top:731.00px;font-size:17.39px;line-height:17.39px;color:#eeeeee;transform:scaleX(0.6460);">77,30</div>
<div class="t" style="left:629.55px;top:731.00px;font-size:17.39px;line-height:17.39px;color:#eeeeee;transform:scaleX(0.6460);">0,36</div>
<div class="t" style="left:660.44px;top:731.00px;font-size:17.39px;line-height:17.39px;color:#eeeeee;transform:scaleX(0.6460);">24,33</div>
<div class="t" style="left:710.84px;top:731.00px;font-size:17.39px;line-height:17.39px;color:#eeeeee;transform:scaleX(0.6460);">75,52</div>
<div class="t" style="left:762.68px;top:731.00px;font-size:17.39px;line-height:17.39px;color:#eeeeee;transform:scaleX(0.6460);">49,67</div>
<div class="t" style="left:808.55px;top:731.00px;font-size:17.39px;line-height:17.39px;color:#eeeeee;transform:scaleX(0.6460);">30,37</div>
<div class="t" style="left:848.04px;top:731.00px;font-size:17.39px;line-height:17.39px;color:#eeeeee;transform:scaleX(0.6460);">60,89</div>
<div class="t" style="left:910.49px;top:731.00px;font-size:17.39px;line-height:17.39px;color:#eeeeee;transform:scaleX(0.6460);">87,29</div>
<div class="t" style="left:976.75px;top:731.00px;font-size:17.39px;line-height:17.39px;color:#eeeeee;transform:scaleX(0.6460);">55,58</div>
<div class="t" style="left:1017.45px;top:731.00px;font-size:17.39px;line-height:17.39px;color:#eeeeee;transform:scaleX(0.6460);">36,13</div>
<div class="t" style="left:1086.28px;top:731.00px;font-size:17.39px;line-height:17.39px;color:#eeeeee;transform:scaleX(0.6460);">41,91</div>
<div class="t" style="left:1160.36px;top:731.00px;font-size:17.39px;line-height:17.39px;color:#eeeeee;transform:scaleX(0.6460);">19,28</div>
<div class="t" style="left:1197.24px;top:731.00px;font-size:17.39px;line-height:17.39px;color:#eeeeee;transform:scaleX(0.6460);">79,53</div>
<div class="t" style="left:1265.84px;top:731.00px;font-size:17.39px;line-height:17.39px;color:#eeeeee;transform:scaleX(0.6460);">79,08</div>
<div class="t" style="left:1340.14px;top:731.00px;font-size:17.39px;line-height:17.39px;color:#eeeeee;transform:scaleX(0.6460);">21,44</div>
<div class="t" style="left:1375.28px;top:731.00px;font-size:17.39px;line-height:17.39px;color:#eeeeee;transform:scaleX(0.6460);">47,49</div>
<div class="t" style="left:1410.14px;top:731.00px;font-size:17.39px;line-height:17.39px;color:#eeeeee;transform:scaleX(0.6460);">22,87</div>
<div class="t" style="left:1444.56px;top:731.00px;font-size:17.39px;line-height:17.39px;color:#eeeeee;transform:scaleX(0.6460);">102,26</div>
<div class="t" style="left:1486.38px;top:731.00px;font-size:17.39px;line-height:17.39px;color:#eeeeee;transform:scaleX(0.6460);">46,99</div>
<div class="t" style="left:1534.68px;top:731.00px;font-size:17.39px;line-height:17.39px;color:#eeeeee;transform:scaleX(0.6460);">48,93</div>
<div class="t" style="left:339.08px;top:759.00px;font-size:17.39px;line-height:17.39px;color:#eeeeee;transform:scaleX(0.6380);">Target x:CIE31</div>
<div class="t" style="left:418.85px;top:759.00px;font-size:17.39px;line-height:17.39px;color:#eeeeee;transform:scaleX(0.6460);">0,31</div>
<div class="t" style="left:459.25px;top:759.00px;font-size:17.39px;line-height:17.39px;color:#eeeeee;transform:scaleX(0.6460);">0,31</div>
<div class="t" style="left:502.05px;top:759.00px;font-size:17.39px;line-height:17.39px;color:#eeeeee;transform:scaleX(0.6460);">0,31</div>
<div class="t" style="left:544.55px;top:759.00px;font-size:17.39px;line-height:17.39px;color:#eeeeee;transform:scaleX(0.6460);">0,31</div>
<div class="t" style="left:587.25px;top:759.00px;font-size:17.39px;line-height:17.39px;color:#eeeeee;transform:scaleX(0.6460);">0,31</div>
<div class="t" style="left:629.55px;top:759.00px;font-size:17.39px;line-height:17.39px;color:#eeeeee;transform:scaleX(0.6460);">0,31</div>
<div class="t" style="left:660.55px;top:759.00px;font-size:17.39px;line-height:17.39px;color:#eeeeee;transform:scaleX(0.6460);">0,40</div>
<div class="t" style="left:710.95px;top:759.00px;font-size:17.39px;line-height:17.39px;color:#eeeeee;transform:scaleX(0.6460);">0,38</div>
<div class="t" style="left:762.45px;top:759.00px;font-size:17.39px;line-height:17.39px;color:#eeeeee;transform:scaleX(0.6460);">0,25</div>
<div class="t" style="left:808.55px;top:759.00px;font-size:17.39px;line-height:17.39px;color:#eeeeee;transform:scaleX(0.6460);">0,34</div>
<div class="t" style="left:848.15px;top:759.00px;font-size:17.39px;line-height:17.39px;color:#eeeeee;transform:scaleX(0.6460);">0,27</div>
<div class="t" style="left:910.55px;top:759.00px;font-size:17.39px;line-height:17.39px;color:#eeeeee;transform:scaleX(0.6460);">0,26</div>
<div class="t" style="left:976.75px;top:759.00px;font-size:17.39px;line-height:17.39px;color:#eeeeee;transform:scaleX(0.6460);">0,51</div>
<div class="t" style="left:1017.45px;top:759.00px;font-size:17.39px;line-height:17.39px;color:#eeeeee;transform:scaleX(0.6460);">0,22</div>
<div class="t" style="left:1086.05px;top:759.00px;font-size:17.39px;line-height:17.39px;color:#eeeeee;transform:scaleX(0.6460);">0,46</div>
<div class="t" style="left:1160.75px;top:759.00px;font-size:17.39px;line-height:17.39px;color:#eeeeee;transform:scaleX(0.6460);">0,29</div>
<div class="t" style="left:1197.35px;top:759.00px;font-size:17.39px;line-height:17.39px;color:#eeeeee;transform:scaleX(0.6460);">0,38</div>
<div class="t" style="left:1265.95px;top:759.00px;font-size:17.39px;line-height:17.39px;color:#eeeeee;transform:scaleX(0.6460);">0,47</div>
<div class="t" style="left:1340.25px;top:759.00px;font-size:17.39px;line-height:17.39px;color:#eeeeee;transform:scaleX(0.6460);">0,19</div>
<div class="t" style="left:1375.05px;top:759.00px;font-size:17.39px;line-height:17.39px;color:#eeeeee;transform:scaleX(0.6460);">0,31</div>
<div class="t" style="left:1410.25px;top:759.00px;font-size:17.39px;line-height:17.39px;color:#eeeeee;transform:scaleX(0.6460);">0,54</div>
<div class="t" style="left:1444.95px;top:759.00px;font-size:17.39px;line-height:17.39px;color:#eeeeee;transform:scaleX(0.6460);">0,45</div>
<div class="t" style="left:1486.15px;top:759.00px;font-size:17.39px;line-height:17.39px;color:#eeeeee;transform:scaleX(0.6460);">0,37</div>
<div class="t" style="left:1534.45px;top:759.00px;font-size:17.39px;line-height:17.39px;color:#eeeeee;transform:scaleX(0.6460);">0,21</div>
<div class="t" style="left:339.08px;top:787.00px;font-size:17.39px;line-height:17.39px;color:#eeeeee;transform:scaleX(0.6380);">Target y:CIE31</div>
<div class="t" style="left:418.85px;top:787.00px;font-size:17.39px;line-height:17.39px;color:#eeeeee;transform:scaleX(0.6460);">0,33</div>
<div class="t" style="left:459.25px;top:787.00px;font-size:17.39px;line-height:17.39px;color:#eeeeee;transform:scaleX(0.6460);">0,33</div>
<div class="t" style="left:502.05px;top:787.00px;font-size:17.39px;line-height:17.39px;color:#eeeeee;transform:scaleX(0.6460);">0,33</div>
<div class="t" style="left:544.55px;top:787.00px;font-size:17.39px;line-height:17.39px;color:#eeeeee;transform:scaleX(0.6460);">0,33</div>
<div class="t" style="left:587.25px;top:787.00px;font-size:17.39px;line-height:17.39px;color:#eeeeee;transform:scaleX(0.6460);">0,33</div>
<div class="t" style="left:629.55px;top:787.00px;font-size:17.39px;line-height:17.39px;color:#eeeeee;transform:scaleX(0.6460);">0,33</div>
<div class="t" style="left:660.55px;top:787.00px;font-size:17.39px;line-height:17.39px;color:#eeeeee;transform:scaleX(0.6460);">0,36</div>
<div class="t" style="left:710.95px;top:787.00px;font-size:17.39px;line-height:17.39px;color:#eeeeee;transform:scaleX(0.6460);">0,36</div>
<div class="t" style="left:762.45px;top:787.00px;font-size:17.39px;line-height:17.39px;color:#eeeeee;transform:scaleX(0.6460);">0,27</div>
<div class="t" style="left:808.55px;top:787.00px;font-size:17.39px;line-height:17.39px;color:#eeeeee;transform:scaleX(0.6460);">0,43</div>
<div class="t" style="left:848.15px;top:787.00px;font-size:17.39px;line-height:17.39px;color:#eeeeee;transform:scaleX(0.6460);">0,25</div>
<div class="t" style="left:910.55px;top:787.00px;font-size:17.39px;line-height:17.39px;color:#eeeeee;transform:scaleX(0.6460);">0,36</div>
<div class="t" style="left:976.75px;top:787.00px;font-size:17.39px;line-height:17.39px;color:#eeeeee;transform:scaleX(0.6460);">0,41</div>
<div class="t" style="left:1017.45px;top:787.00px;font-size:17.39px;line-height:17.39px;color:#eeeeee;transform:scaleX(0.6460);">0,19</div>
<div class="t" style="left:1086.05px;top:787.00px;font-size:17.39px;line-height:17.39px;color:#eeeeee;transform:scaleX(0.6460);">0,31</div>
<div class="t" style="left:1160.75px;top:787.00px;font-size:17.39px;line-height:17.39px;color:#eeeeee;transform:scaleX(0.6460);">0,22</div>
<div class="t" style="left:1197.35px;top:787.00px;font-size:17.39px;line-height:17.39px;color:#eeeeee;transform:scaleX(0.6460);">0,49</div>
<div class="t" style="left:1265.95px;top:787.00px;font-size:17.39px;line-height:17.39px;color:#eeeeee;transform:scaleX(0.6460);">0,44</div>
<div class="t" style="left:1340.25px;top:787.00px;font-size:17.39px;line-height:17.39px;color:#eeeeee;transform:scaleX(0.6460);">0,14</div>
<div class="t" style="left:1375.05px;top:787.00px;font-size:17.39px;line-height:17.39px;color:#eeeeee;transform:scaleX(0.6460);">0,49</div>
<div class="t" style="left:1410.25px;top:787.00px;font-size:17.39px;line-height:17.39px;color:#eeeeee;transform:scaleX(0.6460);">0,32</div>
<div class="t" style="left:1444.95px;top:787.00px;font-size:17.39px;line-height:17.39px;color:#eeeeee;transform:scaleX(0.6460);">0,47</div>
<div class="t" style="left:1486.15px;top:787.00px;font-size:17.39px;line-height:17.39px;color:#eeeeee;transform:scaleX(0.6460);">0,25</div>
<div class="t" style="left:1534.45px;top:787.00px;font-size:17.39px;line-height:17.39px;color:#eeeeee;transform:scaleX(0.6460);">0,27</div>
<div class="t" style="left:339.08px;top:815.00px;font-size:17.39px;line-height:17.39px;color:#eeeeee;transform:scaleX(0.6240);">Target Y</div>
<div class="t" style="left:418.46px;top:815.00px;font-size:17.39px;line-height:17.39px;color:#eeeeee;transform:scaleX(0.6460);">185,88</div>
<div class="t" style="left:458.86px;top:815.00px;font-size:17.39px;line-height:17.39px;color:#eeeeee;transform:scaleX(0.6460);">147,09</div>
<div class="t" style="left:501.66px;top:815.00px;font-size:17.39px;line-height:17.39px;color:#eeeeee;transform:scaleX(0.6460);">118,52</div>
<div class="t" style="left:544.49px;top:815.00px;font-size:17.39px;line-height:17.39px;color:#eeeeee;transform:scaleX(0.6460);">91,27</div>
<div class="t" style="left:587.14px;top:815.00px;font-size:17.39px;line-height:17.39px;color:#eeeeee;transform:scaleX(0.6460);">63,55</div>
<div class="t" style="left:629.55px;top:815.00px;font-size:17.39px;line-height:17.39px;color:#eeeeee;transform:scaleX(0.6460);">0,00</div>
<div class="t" style="left:660.16px;top:815.00px;font-size:17.39px;line-height:17.39px;color:#eeeeee;transform:scaleX(0.6460);">18,72</div>
<div class="t" style="left:710.84px;top:815.00px;font-size:17.39px;line-height:17.39px;color:#eeeeee;transform:scaleX(0.6460);">64,86</div>
<div class="t" style="left:762.45px;top:815.00px;font-size:17.39px;line-height:17.39px;color:#eeeeee;transform:scaleX(0.6460);">34,76</div>
<div class="t" style="left:808.44px;top:815.00px;font-size:17.39px;line-height:17.39px;color:#eeeeee;transform:scaleX(0.6460);">24,22</div>
<div class="t" style="left:848.38px;top:815.00px;font-size:17.39px;line-height:17.39px;color:#eeeeee;transform:scaleX(0.6460);">43,34</div>
<div class="t" style="left:910.44px;top:815.00px;font-size:17.39px;line-height:17.39px;color:#eeeeee;transform:scaleX(0.6460);">77,83</div>
<div class="t" style="left:976.75px;top:815.00px;font-size:17.39px;line-height:17.39px;color:#eeeeee;transform:scaleX(0.6460);">52,69</div>
<div class="t" style="left:1017.34px;top:815.00px;font-size:17.39px;line-height:17.39px;color:#eeeeee;transform:scaleX(0.6460);">21,85</div>
<div class="t" style="left:1086.05px;top:815.00px;font-size:17.39px;line-height:17.39px;color:#eeeeee;transform:scaleX(0.6460);">34,71</div>
<div class="t" style="left:1160.36px;top:815.00px;font-size:17.39px;line-height:17.39px;color:#eeeeee;transform:scaleX(0.6460);">12,41</div>
<div class="t" style="left:1197.24px;top:815.00px;font-size:17.39px;line-height:17.39px;color:#eeeeee;transform:scaleX(0.6460);">79,48</div>
<div class="t" style="left:1265.84px;top:815.00px;font-size:17.39px;line-height:17.39px;color:#eeeeee;transform:scaleX(0.6460);">79,02</div>
<div class="t" style="left:1339.86px;top:815.00px;font-size:17.39px;line-height:17.39px;color:#eeeeee;transform:scaleX(0.6460);">11,60</div>
<div class="t" style="left:1375.28px;top:815.00px;font-size:17.39px;line-height:17.39px;color:#eeeeee;transform:scaleX(0.6460);">42,70</div>
<div class="t" style="left:1410.14px;top:815.00px;font-size:17.39px;line-height:17.39px;color:#eeeeee;transform:scaleX(0.6460);">21,68</div>
<div class="t" style="left:1444.56px;top:815.00px;font-size:17.39px;line-height:17.39px;color:#eeeeee;transform:scaleX(0.6460);">109,60</div>
<div class="t" style="left:1486.15px;top:815.00px;font-size:17.39px;line-height:17.39px;color:#eeeeee;transform:scaleX(0.6460);">34,99</div>
<div class="t" style="left:1534.45px;top:815.00px;font-size:17.39px;line-height:17.39px;color:#eeeeee;transform:scaleX(0.6460);">36,09</div>
<div class="t" style="left:338.97px;top:843.00px;font-size:17.39px;line-height:17.39px;color:#eeeeee;transform:scaleX(0.6420);">ΔE 2000</div>
<div class="t" style="left:418.79px;top:843.00px;font-size:17.39px;line-height:17.39px;color:#eeeeee;transform:scaleX(0.6460);">9,83</div>
<div class="t" style="left:458.86px;top:843.00px;font-size:17.39px;line-height:17.39px;color:#eeeeee;transform:scaleX(0.6460);">10,37</div>
<div class="t" style="left:501.66px;top:843.00px;font-size:17.39px;line-height:17.39px;color:#eeeeee;transform:scaleX(0.6460);">11,67</div>
<div class="t" style="left:544.16px;top:843.00px;font-size:17.39px;line-height:17.39px;color:#eeeeee;transform:scaleX(0.6460);">12,76</div>
<div class="t" style="left:586.86px;top:843.00px;font-size:17.39px;line-height:17.39px;color:#eeeeee;transform:scaleX(0.6460);">13,68</div>
<div class="t" style="left:629.44px;top:843.00px;font-size:17.39px;line-height:17.39px;color:#eeeeee;transform:scaleX(0.6460);">2,75</div>
<div class="t" style="left:660.16px;top:843.00px;font-size:17.39px;line-height:17.39px;color:#eeeeee;transform:scaleX(0.6460);">13,21</div>
<div class="t" style="left:710.56px;top:843.00px;font-size:17.39px;line-height:17.39px;color:#eeeeee;transform:scaleX(0.6460);">18,65</div>
<div class="t" style="left:762.39px;top:843.00px;font-size:17.39px;line-height:17.39px;color:#eeeeee;transform:scaleX(0.6460);">9,67</div>
<div class="t" style="left:808.16px;top:843.00px;font-size:17.39px;line-height:17.39px;color:#eeeeee;transform:scaleX(0.6460);">10,57</div>
<div class="t" style="left:847.76px;top:843.00px;font-size:17.39px;line-height:17.39px;color:#eeeeee;transform:scaleX(0.6460);">11,78</div>
<div class="t" style="left:910.16px;top:843.00px;font-size:17.39px;line-height:17.39px;color:#eeeeee;transform:scaleX(0.6460);">14,01</div>
<div class="t" style="left:976.64px;top:843.00px;font-size:17.39px;line-height:17.39px;color:#eeeeee;transform:scaleX(0.6460);">7,76</div>
<div class="t" style="left:1017.06px;top:843.00px;font-size:17.39px;line-height:17.39px;color:#eeeeee;transform:scaleX(0.6460);">12,26</div>
<div class="t" style="left:1085.66px;top:843.00px;font-size:17.39px;line-height:17.39px;color:#eeeeee;transform:scaleX(0.6460);">15,83</div>
<div class="t" style="left:1160.36px;top:843.00px;font-size:17.39px;line-height:17.39px;color:#eeeeee;transform:scaleX(0.6460);">11,34</div>
<div class="t" style="left:1197.24px;top:843.00px;font-size:17.39px;line-height:17.39px;color:#eeeeee;transform:scaleX(0.6460);">7,49</div>
<div class="t" style="left:1265.84px;top:843.00px;font-size:17.39px;line-height:17.39px;color:#eeeeee;transform:scaleX(0.6460);">7,67</div>
<div class="t" style="left:1339.86px;top:843.00px;font-size:17.39px;line-height:17.39px;color:#eeeeee;transform:scaleX(0.6460);">12,00</div>
<div class="t" style="left:1374.99px;top:843.00px;font-size:17.39px;line-height:17.39px;color:#eeeeee;transform:scaleX(0.6460);">8,52</div>
<div class="t" style="left:1409.86px;top:843.00px;font-size:17.39px;line-height:17.39px;color:#eeeeee;transform:scaleX(0.6460);">11,21</div>
<div class="t" style="left:1444.84px;top:843.00px;font-size:17.39px;line-height:17.39px;color:#eeeeee;transform:scaleX(0.6460);">6,11</div>
<div class="t" style="left:1485.76px;top:843.00px;font-size:17.39px;line-height:17.39px;color:#eeeeee;transform:scaleX(0.6460);">13,84</div>
<div class="t" style="left:1534.39px;top:843.00px;font-size:17.39px;line-height:17.39px;color:#eeeeee;transform:scaleX(0.6460);">8,75</div>
<div style="position:absolute;left:1012.00px;top:21.00px;width:697.00px;height:600.00px;background:#1c1c1c"></div>
<div style="position:absolute;left:1020.00px;top:28.30px;width:686.60px;height:584.70px;background:#333333"></div>
<div class="t" style="left:1324.29px;top:36.00px;font-size:15.22px;line-height:15.22px;color:#dcdcdc;transform:scaleX(0.9379);">CIE 1931 xy</div>
<div style="position:absolute;left:1049.70px;top:54.00px;width:653.80px;height:528.20px;background:#262626"></div>
<svg style="position:absolute;left:0;top:0" width="1709" height="885" viewBox="0 0 1709 885"><defs><linearGradient id="w0" gradientUnits="userSpaceOnUse" x1="1292.67" y1="375.79" x2="1367.71" y2="259.59"><stop offset="0" stop-color="#fff" stop-opacity="1.000"/><stop offset="0.03" stop-color="#fff" stop-opacity="0.889"/><stop offset="0.07" stop-color="#fff" stop-opacity="0.769"/><stop offset="0.12" stop-color="#fff" stop-opacity="0.650"/><stop offset="0.18" stop-color="#fff" stop-opacity="0.539"/><stop offset="0.26" stop-color="#fff" stop-opacity="0.427"/><stop offset="0.36" stop-color="#fff" stop-opacity="0.322"/><stop offset="0.5" stop-color="#fff" stop-opacity="0.217"/><stop offset="0.7" stop-color="#fff" stop-opacity="0.112"/><stop offset="1.0" stop-color="#fff" stop-opacity="0.000"/></linearGradient><linearGradient id="w1" gradientUnits="userSpaceOnUse" x1="1292.67" y1="375.79" x2="1367.71" y2="259.59"><stop offset="0" stop-color="#fff" stop-opacity="1.000"/><stop offset="0.03" stop-color="#fff" stop-opacity="0.896"/><stop offset="0.07" stop-color="#fff" stop-opacity="0.781"/><stop offset="0.12" stop-color="#fff" stop-opacity="0.665"/><stop offset="0.18" stop-color="#fff" stop-opacity="0.555"/><stop offset="0.26" stop-color="#fff" stop-opacity="0.443"/><stop offset="0.36" stop-color="#fff" stop-opacity="0.336"/><stop offset="0.5" stop-color="#fff" stop-opacity="0.228"/><stop offset="0.7" stop-color="#fff" stop-opacity="0.118"/><stop offset="1.0" stop-color="#fff" stop-opacity="0.000"/></linearGradient><linearGradient id="w2" gradientUnits="userSpaceOnUse" x1="1292.67" y1="375.79" x2="1367.71" y2="259.59"><stop offset="0" stop-color="#fff" stop-opacity="1.000"/><stop offset="0.03" stop-color="#fff" stop-opacity="0.902"/><stop offset="0.07" stop-color="#fff" stop-opacity="0.792"/><stop offset="0.12" stop-color="#fff" stop-opacity="0.680"/><stop offset="0.18" stop-color="#fff" stop-opacity="0.572"/><stop offset="0.26" stop-color="#fff" stop-opacity="0.460"/><stop offset="0.36" stop-color="#fff" stop-opacity="0.352"/><stop offset="0.5" stop-color="#fff" stop-opacity="0.240"/><stop offset="0.7" stop-color="#fff" stop-opacity="0.125"/><stop offset="1.0" stop-color="#fff" stop-opacity="0.000"/></linearGradient><linearGradient id="w3" gradientUnits="userSpaceOnUse" x1="1292.67" y1="375.79" x2="1367.71" y2="259.59"><stop offset="0" stop-color="#fff" stop-opacity="1.000"/><stop offset="0.03" stop-color="#fff" stop-opacity="0.909"/><stop offset="0.07" stop-color="#fff" stop-opacity="0.805"/><stop offset="0.12" stop-color="#fff" stop-opacity="0.697"/><stop offset="0.18" stop-color="#fff" stop-opacity="0.591"/><stop offset="0.26" stop-color="#fff" stop-opacity="0.478"/><stop offset="0.36" stop-color="#fff" stop-opacity="0.368"/><stop offset="0.5" stop-color="#fff" stop-opacity="0.253"/><stop offset="0.7" stop-color="#fff" stop-opacity="0.133"/><stop offset="1.0" stop-color="#fff" stop-opacity="0.000"/></linearGradient><linearGradient id="w4" gradientUnits="userSpaceOnUse" x1="1292.67" y1="375.79" x2="1367.71" y2="259.59"><stop offset="0" stop-color="#fff" stop-opacity="1.000"/><stop offset="0.03" stop-color="#fff" stop-opacity="0.915"/><stop offset="0.07" stop-color="#fff" stop-opacity="0.817"/><stop offset="0.12" stop-color="#fff" stop-opacity="0.714"/><stop offset="0.18" stop-color="#fff" stop-opacity="0.610"/><stop offset="0.26" stop-color="#fff" stop-opacity="0.498"/><stop offset="0.36" stop-color="#fff" stop-opacity="0.387"/><stop offset="0.5" stop-color="#fff" stop-opacity="0.268"/><stop offset="0.7" stop-color="#fff" stop-opacity="0.143"/><stop offset="1.0" stop-color="#fff" stop-opacity="0.000"/></linearGradient><linearGradient id="w5" gradientUnits="userSpaceOnUse" x1="1292.67" y1="375.79" x2="1367.71" y2="259.59"><stop offset="0" stop-color="#fff" stop-opacity="1.000"/><stop offset="0.03" stop-color="#fff" stop-opacity="0.922"/><stop offset="0.07" stop-color="#fff" stop-opacity="0.830"/><stop offset="0.12" stop-color="#fff" stop-opacity="0.731"/><stop offset="0.18" stop-color="#fff" stop-opacity="0.631"/><stop offset="0.26" stop-color="#fff" stop-opacity="0.520"/><stop offset="0.36" stop-color="#fff" stop-opacity="0.408"/><stop offset="0.5" stop-color="#fff" stop-opacity="0.285"/><stop offset="0.7" stop-color="#fff" stop-opacity="0.153"/><stop offset="1.0" stop-color="#fff" stop-opacity="0.000"/></linearGradient><linearGradient id="w6" gradientUnits="userSpaceOnUse" x1="1292.67" y1="375.79" x2="1367.71" y2="259.59"><stop offset="0" stop-color="#fff" stop-opacity="1.000"/><stop offset="0.03" stop-color="#fff" stop-opacity="0.929"/><stop offset="0.07" stop-color="#fff" stop-opacity="0.844"/><stop offset="0.12" stop-color="#fff" stop-opacity="0.750"/><stop offset="0.18" stop-color="#fff" stop-opacity="0.653"/><stop offset="0.26" stop-color="#fff" stop-opacity="0.544"/><stop offset="0.36" stop-color="#fff" stop-opacity="0.431"/><stop offset="0.5" stop-color="#fff" stop-opacity="0.305"/><stop offset="0.7" stop-color="#fff" stop-opacity="0.166"/><stop offset="1.0" stop-color="#fff" stop-opacity="0.000"/></linearGradient><linearGradient id="w7" gradientUnits="userSpaceOnUse" x1="1292.67" y1="375.79" x2="1367.71" y2="259.59"><stop offset="0" stop-color="#fff" stop-opacity="1.000"/><stop offset="0.03" stop-color="#fff" stop-opacity="0.936"/><stop offset="0.07" stop-color="#fff" stop-opacity="0.858"/><stop offset="0.12" stop-color="#fff" stop-opacity="0.770"/><stop offset="0.18" stop-color="#fff" stop-opacity="0.678"/><stop offset="0.26" stop-color="#fff" stop-opacity="0.571"/><stop offset="0.36" stop-color="#fff" stop-opacity="0.458"/><stop offset="0.5" stop-color="#fff" stop-opacity="0.328"/><stop offset="0.7" stop-color="#fff" stop-opacity="0.180"/><stop offset="1.0" stop-color="#fff" stop-opacity="0.000"/></linearGradient><linearGradient id="w8" gradientUnits="userSpaceOnUse" x1="1292.67" y1="375.79" x2="1367.71" y2="259.59"><stop offset="0" stop-color="#fff" stop-opacity="1.000"/><stop offset="0.03" stop-color="#fff" stop-opacity="0.943"/><stop offset="0.07" stop-color="#fff" stop-opacity="0.872"/><stop offset="0.12" stop-color="#fff" stop-opacity="0.791"/><stop offset="0.18" stop-color="#fff" stop-opacity="0.704"/><stop offset="0.26" stop-color="#fff" stop-opacity="0.600"/><stop offset="0.36" stop-color="#fff" stop-opacity="0.488"/><stop offset="0.5" stop-color="#fff" stop-opacity="0.354"/><stop offset="0.7" stop-color="#fff" stop-opacity="0.198"/><stop offset="1.0" stop-color="#fff" stop-opacity="0.000"/></linearGradient><linearGradient id="w9" gradientUnits="userSpaceOnUse" x1="1292.67" y1="375.79" x2="1367.71" y2="259.59"><stop offset="0" stop-color="#fff" stop-opacity="1.000"/><stop offset="0.03" stop-color="#fff" stop-opacity="0.950"/><stop offset="0.07" stop-color="#fff" stop-opacity="0.887"/><stop offset="0.12" stop-color="#fff" stop-opacity="0.814"/><stop offset="0.18" stop-color="#fff" stop-opacity="0.732"/><stop offset="0.26" stop-color="#fff" stop-opacity="0.633"/><stop offset="0.36" stop-color="#fff" stop-opacity="0.522"/><stop offset="0.5" stop-color="#fff" stop-opacity="0.386"/><stop offset="0.7" stop-color="#fff" stop-opacity="0.220"/><stop offset="1.0" stop-color="#fff" stop-opacity="0.000"/></linearGradient><linearGradient id="w10" gradientUnits="userSpaceOnUse" x1="1292.67" y1="375.79" x2="1367.71" y2="259.59"><stop offset="0" stop-color="#fff" stop-opacity="1.000"/><stop offset="0.03" stop-color="#fff" stop-opacity="0.956"/><stop offset="0.07" stop-color="#fff" stop-opacity="0.899"/><stop offset="0.12" stop-color="#fff" stop-opacity="0.832"/><stop offset="0.18" stop-color="#fff" stop-opacity="0.755"/><stop offset="0.26" stop-color="#fff" stop-opacity="0.661"/><stop offset="0.36" stop-color="#fff" stop-opacity="0.552"/><stop offset="0.5" stop-color="#fff" stop-opacity="0.414"/><stop offset="0.7" stop-color="#fff" stop-opacity="0.241"/><stop offset="1.0" stop-color="#fff" stop-opacity="0.000"/></linearGradient><linearGradient id="w11" gradientUnits="userSpaceOnUse" x1="1292.67" y1="375.79" x2="1367.71" y2="259.59"><stop offset="0" stop-color="#fff" stop-opacity="1.000"/><stop offset="0.03" stop-color="#fff" stop-opacity="0.952"/><stop offset="0.07" stop-color="#fff" stop-opacity="0.891"/><stop offset="0.12" stop-color="#fff" stop-opacity="0.819"/><stop offset="0.18" stop-color="#fff" stop-opacity="0.739"/><stop offset="0.26" stop-color="#fff" stop-opacity="0.641"/><stop offset="0.36" stop-color="#fff" stop-opacity="0.530"/><stop offset="0.5" stop-color="#fff" stop-opacity="0.394"/><stop offset="0.7" stop-color="#fff" stop-opacity="0.226"/><stop offset="1.0" stop-color="#fff" stop-opacity="0.000"/></linearGradient><linearGradient id="w12" gradientUnits="userSpaceOnUse" x1="1292.67" y1="375.79" x2="1367.71" y2="259.59"><stop offset="0" stop-color="#fff" stop-opacity="1.000"/><stop offset="0.03" stop-color="#fff" stop-opacity="0.948"/><stop offset="0.07" stop-color="#fff" stop-opacity="0.882"/><stop offset="0.12" stop-color="#fff" stop-opacity="0.806"/><stop offset="0.18" stop-color="#fff" stop-opacity="0.723"/><stop offset="0.26" stop-color="#fff" stop-opacity="0.622"/><stop offset="0.36" stop-color="#fff" stop-opacity="0.510"/><stop offset="0.5" stop-color="#fff" stop-opacity="0.375"/><stop offset="0.7" stop-color="#fff" stop-opacity="0.213"/><stop offset="1.0" stop-color="#fff" stop-opacity="0.000"/></linearGradient><linearGradient id="w13" gradientUnits="userSpaceOnUse" x1="1292.67" y1="375.79" x2="1367.71" y2="259.59"><stop offset="0" stop-color="#fff" stop-opacity="1.000"/><stop offset="0.03" stop-color="#fff" stop-opacity="0.944"/><stop offset="0.07" stop-color="#fff" stop-opacity="0.874"/><stop offset="0.12" stop-color="#fff" stop-opacity="0.794"/><stop offset="0.18" stop-color="#fff" stop-opacity="0.707"/><stop offset="0.26" stop-color="#fff" stop-opacity="0.604"/><stop offset="0.36" stop-color="#fff" stop-opacity="0.492"/><stop offset="0.5" stop-color="#fff" stop-opacity="0.358"/><stop offset="0.7" stop-color="#fff" stop-opacity="0.201"/><stop offset="1.0" stop-color="#fff" stop-opacity="0.000"/></linearGradient><linearGradient id="w14" gradientUnits="userSpaceOnUse" x1="1292.67" y1="375.79" x2="1367.71" y2="259.59"><stop offset="0" stop-color="#fff" stop-opacity="1.000"/><stop offset="0.03" stop-color="#fff" stop-opacity="0.940"/><stop offset="0.07" stop-color="#fff" stop-opacity="0.866"/><stop offset="0.12" stop-color="#fff" stop-opacity="0.783"/><stop offset="0.18" stop-color="#fff" stop-opacity="0.693"/><stop offset="0.26" stop-color="#fff" stop-opacity="0.588"/><stop offset="0.36" stop-color="#fff" stop-opacity="0.475"/><stop offset="0.5" stop-color="#fff" stop-opacity="0.343"/><stop offset="0.7" stop-color="#fff" stop-opacity="0.190"/><stop offset="1.0" stop-color="#fff" stop-opacity="0.000"/></linearGradient><linearGradient id="w15" gradientUnits="userSpaceOnUse" x1="1292.67" y1="375.79" x2="1367.71" y2="259.59"><stop offset="0" stop-color="#fff" stop-opacity="1.000"/><stop offset="0.03" stop-color="#fff" stop-opacity="0.936"/><stop offset="0.07" stop-color="#fff" stop-opacity="0.859"/><stop offset="0.12" stop-color="#fff" stop-opacity="0.771"/><stop offset="0.18" stop-color="#fff" stop-opacity="0.679"/><stop offset="0.26" stop-color="#fff" stop-opacity="0.572"/><stop offset="0.36" stop-color="#fff" stop-opacity="0.459"/><stop offset="0.5" stop-color="#fff" stop-opacity="0.329"/><stop offset="0.7" stop-color="#fff" stop-opacity="0.181"/><stop offset="1.0" stop-color="#fff" stop-opacity="0.000"/></linearGradient><linearGradient id="w16" gradientUnits="userSpaceOnUse" x1="1292.67" y1="375.79" x2="1232.27" y2="355.33"><stop offset="0" stop-color="#fff" stop-opacity="1.000"/><stop offset="0.03" stop-color="#fff" stop-opacity="0.936"/><stop offset="0.07" stop-color="#fff" stop-opacity="0.859"/><stop offset="0.12" stop-color="#fff" stop-opacity="0.771"/><stop offset="0.18" stop-color="#fff" stop-opacity="0.679"/><stop offset="0.26" stop-color="#fff" stop-opacity="0.572"/><stop offset="0.36" stop-color="#fff" stop-opacity="0.459"/><stop offset="0.5" stop-color="#fff" stop-opacity="0.329"/><stop offset="0.7" stop-color="#fff" stop-opacity="0.181"/><stop offset="1.0" stop-color="#fff" stop-opacity="0.000"/></linearGradient><linearGradient id="w17" gradientUnits="userSpaceOnUse" x1="1292.67" y1="375.79" x2="1232.27" y2="355.33"><stop offset="0" stop-color="#fff" stop-opacity="1.000"/><stop offset="0.03" stop-color="#fff" stop-opacity="0.940"/><stop offset="0.07" stop-color="#fff" stop-opacity="0.866"/><stop offset="0.12" stop-color="#fff" stop-opacity="0.783"/><stop offset="0.18" stop-color="#fff" stop-opacity="0.693"/><stop offset="0.26" stop-color="#fff" stop-opacity="0.588"/><stop offset="0.36" stop-color="#fff" stop-opacity="0.475"/><stop offset="0.5" stop-color="#fff" stop-opacity="0.343"/><stop offset="0.7" stop-color="#fff" stop-opacity="0.191"/><stop offset="1.0" stop-color="#fff" stop-opacity="0.000"/></linearGradient><linearGradient id="w18" gradientUnits="userSpaceOnUse" x1="1292.67" y1="375.79" x2="1232.27" y2="355.33"><stop offset="0" stop-color="#fff" stop-opacity="1.000"/><stop offset="0.03" stop-color="#fff" stop-opacity="0.944"/><stop offset="0.07" stop-color="#fff" stop-opacity="0.874"/><stop offset="0.12" stop-color="#fff" stop-opacity="0.794"/><stop offset="0.18" stop-color="#fff" stop-opacity="0.708"/><stop offset="0.26" stop-color="#fff" stop-opacity="0.604"/><stop offset="0.36" stop-color="#fff" stop-opacity="0.492"/><stop offset="0.5" stop-color="#fff" stop-opacity="0.358"/><stop offset="0.7" stop-color="#fff" stop-opacity="0.201"/><stop offset="1.0" stop-color="#fff" stop-opacity="0.000"/></linearGradient><linearGradient id="w19" gradientUnits="userSpaceOnUse" x1="1292.67" y1="375.79" x2="1232.27" y2="355.33"><stop offset="0" stop-color="#fff" stop-opacity="1.000"/><stop offset="0.03" stop-color="#fff" stop-opacity="0.948"/><stop offset="0.07" stop-color="#fff" stop-opacity="0.883"/><stop offset="0.12" stop-color="#fff" stop-opacity="0.807"/><stop offset="0.18" stop-color="#fff" stop-opacity="0.723"/><stop offset="0.26" stop-color="#fff" stop-opacity="0.622"/><stop offset="0.36" stop-color="#fff" stop-opacity="0.511"/><stop offset="0.5" stop-color="#fff" stop-opacity="0.375"/><stop offset="0.7" stop-color="#fff" stop-opacity="0.213"/><stop offset="1.0" stop-color="#fff" stop-opacity="0.000"/></linearGradient><linearGradient id="w20" gradientUnits="userSpaceOnUse" x1="1292.67" y1="375.79" x2="1232.27" y2="355.33"><stop offset="0" stop-color="#fff" stop-opacity="1.000"/><stop offset="0.03" stop-color="#fff" stop-opacity="0.952"/><stop offset="0.07" stop-color="#fff" stop-opacity="0.891"/><stop offset="0.12" stop-color="#fff" stop-opacity="0.819"/><stop offset="0.18" stop-color="#fff" stop-opacity="0.739"/><stop offset="0.26" stop-color="#fff" stop-opacity="0.641"/><stop offset="0.36" stop-color="#fff" stop-opacity="0.531"/><stop offset="0.5" stop-color="#fff" stop-opacity="0.394"/><stop offset="0.7" stop-color="#fff" stop-opacity="0.226"/><stop offset="1.0" stop-color="#fff" stop-opacity="0.000"/></linearGradient><linearGradient id="w21" gradientUnits="userSpaceOnUse" x1="1292.67" y1="375.79" x2="1232.27" y2="355.33"><stop offset="0" stop-color="#fff" stop-opacity="1.000"/><stop offset="0.03" stop-color="#fff" stop-opacity="0.956"/><stop offset="0.07" stop-color="#fff" stop-opacity="0.899"/><stop offset="0.12" stop-color="#fff" stop-opacity="0.832"/><stop offset="0.18" stop-color="#fff" stop-opacity="0.756"/><stop offset="0.26" stop-color="#fff" stop-opacity="0.661"/><stop offset="0.36" stop-color="#fff" stop-opacity="0.553"/><stop offset="0.5" stop-color="#fff" stop-opacity="0.415"/><stop offset="0.7" stop-color="#fff" stop-opacity="0.241"/><stop offset="1.0" stop-color="#fff" stop-opacity="0.000"/></linearGradient><linearGradient id="w22" gradientUnits="userSpaceOnUse" x1="1292.67" y1="375.79" x2="1232.27" y2="355.33"><stop offset="0" stop-color="#fff" stop-opacity="1.000"/><stop offset="0.03" stop-color="#fff" stop-opacity="0.960"/><stop offset="0.07" stop-color="#fff" stop-opacity="0.908"/><stop offset="0.12" stop-color="#fff" stop-opacity="0.845"/><stop offset="0.18" stop-color="#fff" stop-opacity="0.774"/><stop offset="0.26" stop-color="#fff" stop-opacity="0.683"/><stop offset="0.36" stop-color="#fff" stop-opacity="0.576"/><stop offset="0.5" stop-color="#fff" stop-opacity="0.439"/><stop offset="0.7" stop-color="#fff" stop-opacity="0.259"/><stop offset="1.0" stop-color="#fff" stop-opacity="0.000"/></linearGradient><linearGradient id="w23" gradientUnits="userSpaceOnUse" x1="1292.67" y1="375.79" x2="1232.27" y2="355.33"><stop offset="0" stop-color="#fff" stop-opacity="1.000"/><stop offset="0.03" stop-color="#fff" stop-opacity="0.964"/><stop offset="0.07" stop-color="#fff" stop-opacity="0.917"/><stop offset="0.12" stop-color="#fff" stop-opacity="0.859"/><stop offset="0.18" stop-color="#fff" stop-opacity="0.792"/><stop offset="0.26" stop-color="#fff" stop-opacity="0.706"/><stop offset="0.36" stop-color="#fff" stop-opacity="0.603"/><stop offset="0.5" stop-color="#fff" stop-opacity="0.465"/><stop offset="0.7" stop-color="#fff" stop-opacity="0.280"/><stop offset="1.0" stop-color="#fff" stop-opacity="0.000"/></linearGradient><linearGradient id="w24" gradientUnits="userSpaceOnUse" x1="1292.67" y1="375.79" x2="1232.27" y2="355.33"><stop offset="0" stop-color="#fff" stop-opacity="1.000"/><stop offset="0.03" stop-color="#fff" stop-opacity="0.965"/><stop offset="0.07" stop-color="#fff" stop-opacity="0.918"/><stop offset="0.12" stop-color="#fff" stop-opacity="0.862"/><stop offset="0.18" stop-color="#fff" stop-opacity="0.795"/><stop offset="0.26" stop-color="#fff" stop-opacity="0.710"/><stop offset="0.36" stop-color="#fff" stop-opacity="0.607"/><stop offset="0.5" stop-color="#fff" stop-opacity="0.470"/><stop offset="0.7" stop-color="#fff" stop-opacity="0.283"/><stop offset="1.0" stop-color="#fff" stop-opacity="0.000"/></linearGradient><linearGradient id="w25" gradientUnits="userSpaceOnUse" x1="1292.67" y1="375.79" x2="1232.27" y2="355.33"><stop offset="0" stop-color="#fff" stop-opacity="1.000"/><stop offset="0.03" stop-color="#fff" stop-opacity="0.961"/><stop offset="0.07" stop-color="#fff" stop-opacity="0.910"/><stop offset="0.12" stop-color="#fff" stop-opacity="0.848"/><stop offset="0.18" stop-color="#fff" stop-opacity="0.777"/><stop offset="0.26" stop-color="#fff" stop-opacity="0.687"/><stop offset="0.36" stop-color="#fff" stop-opacity="0.581"/><stop offset="0.5" stop-color="#fff" stop-opacity="0.443"/><stop offset="0.7" stop-color="#fff" stop-opacity="0.262"/><stop offset="1.0" stop-color="#fff" stop-opacity="0.000"/></linearGradient><linearGradient id="w26" gradientUnits="userSpaceOnUse" x1="1292.67" y1="375.79" x2="1232.27" y2="355.33"><stop offset="0" stop-color="#fff" stop-opacity="1.000"/><stop offset="0.03" stop-color="#fff" stop-opacity="0.957"/><stop offset="0.07" stop-color="#fff" stop-opacity="0.901"/><stop offset="0.12" stop-color="#fff" stop-opacity="0.835"/><stop offset="0.18" stop-color="#fff" stop-opacity="0.759"/><stop offset="0.26" stop-color="#fff" stop-opacity="0.665"/><stop offset="0.36" stop-color="#fff" stop-opacity="0.557"/><stop offset="0.5" stop-color="#fff" stop-opacity="0.419"/><stop offset="0.7" stop-color="#fff" stop-opacity="0.245"/><stop offset="1.0" stop-color="#fff" stop-opacity="0.000"/></linearGradient><linearGradient id="w27" gradientUnits="userSpaceOnUse" x1="1292.67" y1="375.79" x2="1232.27" y2="355.33"><stop offset="0" stop-color="#fff" stop-opacity="1.000"/><stop offset="0.03" stop-color="#fff" stop-opacity="0.953"/><stop offset="0.07" stop-color="#fff" stop-opacity="0.893"/><stop offset="0.12" stop-color="#fff" stop-opacity="0.822"/><stop offset="0.18" stop-color="#fff" stop-opacity="0.742"/><stop offset="0.26" stop-color="#fff" stop-opacity="0.645"/><stop offset="0.36" stop-color="#fff" stop-opacity="0.535"/><stop offset="0.5" stop-color="#fff" stop-opacity="0.398"/><stop offset="0.7" stop-color="#fff" stop-opacity="0.229"/><stop offset="1.0" stop-color="#fff" stop-opacity="0.000"/></linearGradient><linearGradient id="w28" gradientUnits="userSpaceOnUse" x1="1292.67" y1="375.79" x2="1232.27" y2="355.33"><stop offset="0" stop-color="#fff" stop-opacity="1.000"/><stop offset="0.03" stop-color="#fff" stop-opacity="0.949"/><stop offset="0.07" stop-color="#fff" stop-opacity="0.884"/><stop offset="0.12" stop-color="#fff" stop-opacity="0.809"/><stop offset="0.18" stop-color="#fff" stop-opacity="0.726"/><stop offset="0.26" stop-color="#fff" stop-opacity="0.626"/><stop offset="0.36" stop-color="#fff" stop-opacity="0.515"/><stop offset="0.5" stop-color="#fff" stop-opacity="0.379"/><stop offset="0.7" stop-color="#fff" stop-opacity="0.216"/><stop offset="1.0" stop-color="#fff" stop-opacity="0.000"/></linearGradient><linearGradient id="w29" gradientUnits="userSpaceOnUse" x1="1292.67" y1="375.79" x2="1232.27" y2="355.33"><stop offset="0" stop-color="#fff" stop-opacity="1.000"/><stop offset="0.03" stop-color="#fff" stop-opacity="0.945"/><stop offset="0.07" stop-color="#fff" stop-opacity="0.876"/><stop offset="0.12" stop-color="#fff" stop-opacity="0.797"/><stop offset="0.18" stop-color="#fff" stop-opacity="0.711"/><stop offset="0.26" stop-color="#fff" stop-opacity="0.609"/><stop offset="0.36" stop-color="#fff" stop-opacity="0.496"/><stop offset="0.5" stop-color="#fff" stop-opacity="0.362"/><stop offset="0.7" stop-color="#fff" stop-opacity="0.204"/><stop offset="1.0" stop-color="#fff" stop-opacity="0.000"/></linearGradient><linearGradient id="w30" gradientUnits="userSpaceOnUse" x1="1292.67" y1="375.79" x2="1232.27" y2="355.33"><stop offset="0" stop-color="#fff" stop-opacity="1.000"/><stop offset="0.03" stop-color="#fff" stop-opacity="0.941"/><stop offset="0.07" stop-color="#fff" stop-opacity="0.868"/><stop offset="0.12" stop-color="#fff" stop-opacity="0.786"/><stop offset="0.18" stop-color="#fff" stop-opacity="0.696"/><stop offset="0.26" stop-color="#fff" stop-opacity="0.592"/><stop offset="0.36" stop-color="#fff" stop-opacity="0.479"/><stop offset="0.5" stop-color="#fff" stop-opacity="0.347"/><stop offset="0.7" stop-color="#fff" stop-opacity="0.193"/><stop offset="1.0" stop-color="#fff" stop-opacity="0.000"/></linearGradient><linearGradient id="w31" gradientUnits="userSpaceOnUse" x1="1292.67" y1="375.79" x2="1232.27" y2="355.33"><stop offset="0" stop-color="#fff" stop-opacity="1.000"/><stop offset="0.03" stop-color="#fff" stop-opacity="0.937"/><stop offset="0.07" stop-color="#fff" stop-opacity="0.861"/><stop offset="0.12" stop-color="#fff" stop-opacity="0.774"/><stop offset="0.18" stop-color="#fff" stop-opacity="0.682"/><stop offset="0.26" stop-color="#fff" stop-opacity="0.576"/><stop offset="0.36" stop-color="#fff" stop-opacity="0.463"/><stop offset="0.5" stop-color="#fff" stop-opacity="0.332"/><stop offset="0.7" stop-color="#fff" stop-opacity="0.184"/><stop offset="1.0" stop-color="#fff" stop-opacity="0.000"/></linearGradient><linearGradient id="w32" gradientUnits="userSpaceOnUse" x1="1292.67" y1="375.79" x2="1334.56" y2="468.94"><stop offset="0" stop-color="#fff" stop-opacity="1.000"/><stop offset="0.03" stop-color="#fff" stop-opacity="0.937"/><stop offset="0.07" stop-color="#fff" stop-opacity="0.861"/><stop offset="0.12" stop-color="#fff" stop-opacity="0.774"/><stop offset="0.18" stop-color="#fff" stop-opacity="0.682"/><stop offset="0.26" stop-color="#fff" stop-opacity="0.576"/><stop offset="0.36" stop-color="#fff" stop-opacity="0.463"/><stop offset="0.5" stop-color="#fff" stop-opacity="0.332"/><stop offset="0.7" stop-color="#fff" stop-opacity="0.184"/><stop offset="1.0" stop-color="#fff" stop-opacity="0.000"/></linearGradient><linearGradient id="w33" gradientUnits="userSpaceOnUse" x1="1292.67" y1="375.79" x2="1334.56" y2="468.94"><stop offset="0" stop-color="#fff" stop-opacity="1.000"/><stop offset="0.03" stop-color="#fff" stop-opacity="0.941"/><stop offset="0.07" stop-color="#fff" stop-opacity="0.868"/><stop offset="0.12" stop-color="#fff" stop-opacity="0.786"/><stop offset="0.18" stop-color="#fff" stop-opacity="0.696"/><stop offset="0.26" stop-color="#fff" stop-opacity="0.592"/><stop offset="0.36" stop-color="#fff" stop-opacity="0.479"/><stop offset="0.5" stop-color="#fff" stop-opacity="0.347"/><stop offset="0.7" stop-color="#fff" stop-opacity="0.193"/><stop offset="1.0" stop-color="#fff" stop-opacity="0.000"/></linearGradient><linearGradient id="w34" gradientUnits="userSpaceOnUse" x1="1292.67" y1="375.79" x2="1334.56" y2="468.94"><stop offset="0" stop-color="#fff" stop-opacity="1.000"/><stop offset="0.03" stop-color="#fff" stop-opacity="0.945"/><stop offset="0.07" stop-color="#fff" stop-opacity="0.876"/><stop offset="0.12" stop-color="#fff" stop-opacity="0.797"/><stop offset="0.18" stop-color="#fff" stop-opacity="0.711"/><stop offset="0.26" stop-color="#fff" stop-opacity="0.608"/><stop offset="0.36" stop-color="#fff" stop-opacity="0.496"/><stop offset="0.5" stop-color="#fff" stop-opacity="0.362"/><stop offset="0.7" stop-color="#fff" stop-opacity="0.204"/><stop offset="1.0" stop-color="#fff" stop-opacity="0.000"/></linearGradient><linearGradient id="w35" gradientUnits="userSpaceOnUse" x1="1292.67" y1="375.79" x2="1334.56" y2="468.94"><stop offset="0" stop-color="#fff" stop-opacity="1.000"/><stop offset="0.03" stop-color="#fff" stop-opacity="0.949"/><stop offset="0.07" stop-color="#fff" stop-opacity="0.884"/><stop offset="0.12" stop-color="#fff" stop-opacity="0.809"/><stop offset="0.18" stop-color="#fff" stop-opacity="0.726"/><stop offset="0.26" stop-color="#fff" stop-opacity="0.626"/><stop offset="0.36" stop-color="#fff" stop-opacity="0.515"/><stop offset="0.5" stop-color="#fff" stop-opacity="0.379"/><stop offset="0.7" stop-color="#fff" stop-opacity="0.215"/><stop offset="1.0" stop-color="#fff" stop-opacity="0.000"/></linearGradient><linearGradient id="w36" gradientUnits="userSpaceOnUse" x1="1292.67" y1="375.79" x2="1334.56" y2="468.94"><stop offset="0" stop-color="#fff" stop-opacity="1.000"/><stop offset="0.03" stop-color="#fff" stop-opacity="0.953"/><stop offset="0.07" stop-color="#fff" stop-opacity="0.892"/><stop offset="0.12" stop-color="#fff" stop-opacity="0.822"/><stop offset="0.18" stop-color="#fff" stop-opacity="0.742"/><stop offset="0.26" stop-color="#fff" stop-opacity="0.645"/><stop offset="0.36" stop-color="#fff" stop-opacity="0.535"/><stop offset="0.5" stop-color="#fff" stop-opacity="0.398"/><stop offset="0.7" stop-color="#fff" stop-opacity="0.229"/><stop offset="1.0" stop-color="#fff" stop-opacity="0.000"/></linearGradient><linearGradient id="w37" gradientUnits="userSpaceOnUse" x1="1292.67" y1="375.79" x2="1334.56" y2="468.94"><stop offset="0" stop-color="#fff" stop-opacity="1.000"/><stop offset="0.03" stop-color="#fff" stop-opacity="0.957"/><stop offset="0.07" stop-color="#fff" stop-opacity="0.901"/><stop offset="0.12" stop-color="#fff" stop-opacity="0.834"/><stop offset="0.18" stop-color="#fff" stop-opacity="0.759"/><stop offset="0.26" stop-color="#fff" stop-opacity="0.665"/><stop offset="0.36" stop-color="#fff" stop-opacity="0.557"/><stop offset="0.5" stop-color="#fff" stop-opacity="0.419"/><stop offset="0.7" stop-color="#fff" stop-opacity="0.244"/><stop offset="1.0" stop-color="#fff" stop-opacity="0.000"/></linearGradient><linearGradient id="w38" gradientUnits="userSpaceOnUse" x1="1292.67" y1="375.79" x2="1334.56" y2="468.94"><stop offset="0" stop-color="#fff" stop-opacity="1.000"/><stop offset="0.03" stop-color="#fff" stop-opacity="0.950"/><stop offset="0.07" stop-color="#fff" stop-opacity="0.886"/><stop offset="0.12" stop-color="#fff" stop-opacity="0.812"/><stop offset="0.18" stop-color="#fff" stop-opacity="0.731"/><stop offset="0.26" stop-color="#fff" stop-opacity="0.631"/><stop offset="0.36" stop-color="#fff" stop-opacity="0.520"/><stop offset="0.5" stop-color="#fff" stop-opacity="0.384"/><stop offset="0.7" stop-color="#fff" stop-opacity="0.219"/><stop offset="1.0" stop-color="#fff" stop-opacity="0.000"/></linearGradient><linearGradient id="w39" gradientUnits="userSpaceOnUse" x1="1292.67" y1="375.79" x2="1334.56" y2="468.94"><stop offset="0" stop-color="#fff" stop-opacity="1.000"/><stop offset="0.03" stop-color="#fff" stop-opacity="0.943"/><stop offset="0.07" stop-color="#fff" stop-opacity="0.872"/><stop offset="0.12" stop-color="#fff" stop-opacity="0.790"/><stop offset="0.18" stop-color="#fff" stop-opacity="0.702"/><stop offset="0.26" stop-color="#fff" stop-opacity="0.599"/><stop offset="0.36" stop-color="#fff" stop-opacity="0.486"/><stop offset="0.5" stop-color="#fff" stop-opacity="0.353"/><stop offset="0.7" stop-color="#fff" stop-opacity="0.197"/><stop offset="1.0" stop-color="#fff" stop-opacity="0.000"/></linearGradient><linearGradient id="w40" gradientUnits="userSpaceOnUse" x1="1292.67" y1="375.79" x2="1334.56" y2="468.94"><stop offset="0" stop-color="#fff" stop-opacity="1.000"/><stop offset="0.03" stop-color="#fff" stop-opacity="0.936"/><stop offset="0.07" stop-color="#fff" stop-opacity="0.857"/><stop offset="0.12" stop-color="#fff" stop-opacity="0.769"/><stop offset="0.18" stop-color="#fff" stop-opacity="0.676"/><stop offset="0.26" stop-color="#fff" stop-opacity="0.569"/><stop offset="0.36" stop-color="#fff" stop-opacity="0.456"/><stop offset="0.5" stop-color="#fff" stop-opacity="0.327"/><stop offset="0.7" stop-color="#fff" stop-opacity="0.180"/><stop offset="1.0" stop-color="#fff" stop-opacity="0.000"/></linearGradient><linearGradient id="w41" gradientUnits="userSpaceOnUse" x1="1292.67" y1="375.79" x2="1334.56" y2="468.94"><stop offset="0" stop-color="#fff" stop-opacity="1.000"/><stop offset="0.03" stop-color="#fff" stop-opacity="0.929"/><stop offset="0.07" stop-color="#fff" stop-opacity="0.843"/><stop offset="0.12" stop-color="#fff" stop-opacity="0.750"/><stop offset="0.18" stop-color="#fff" stop-opacity="0.652"/><stop offset="0.26" stop-color="#fff" stop-opacity="0.543"/><stop offset="0.36" stop-color="#fff" stop-opacity="0.430"/><stop offset="0.5" stop-color="#fff" stop-opacity="0.304"/><stop offset="0.7" stop-color="#fff" stop-opacity="0.165"/><stop offset="1.0" stop-color="#fff" stop-opacity="0.000"/></linearGradient><linearGradient id="w42" gradientUnits="userSpaceOnUse" x1="1292.67" y1="375.79" x2="1334.56" y2="468.94"><stop offset="0" stop-color="#fff" stop-opacity="1.000"/><stop offset="0.03" stop-color="#fff" stop-opacity="0.922"/><stop offset="0.07" stop-color="#fff" stop-opacity="0.830"/><stop offset="0.12" stop-color="#fff" stop-opacity="0.731"/><stop offset="0.18" stop-color="#fff" stop-opacity="0.630"/><stop offset="0.26" stop-color="#fff" stop-opacity="0.519"/><stop offset="0.36" stop-color="#fff" stop-opacity="0.407"/><stop offset="0.5" stop-color="#fff" stop-opacity="0.285"/><stop offset="0.7" stop-color="#fff" stop-opacity="0.153"/><stop offset="1.0" stop-color="#fff" stop-opacity="0.000"/></linearGradient><linearGradient id="w43" gradientUnits="userSpaceOnUse" x1="1292.67" y1="375.79" x2="1334.56" y2="468.94"><stop offset="0" stop-color="#fff" stop-opacity="1.000"/><stop offset="0.03" stop-color="#fff" stop-opacity="0.915"/><stop offset="0.07" stop-color="#fff" stop-opacity="0.817"/><stop offset="0.12" stop-color="#fff" stop-opacity="0.713"/><stop offset="0.18" stop-color="#fff" stop-opacity="0.610"/><stop offset="0.26" stop-color="#fff" stop-opacity="0.497"/><stop offset="0.36" stop-color="#fff" stop-opacity="0.387"/><stop offset="0.5" stop-color="#fff" stop-opacity="0.268"/><stop offset="0.7" stop-color="#fff" stop-opacity="0.142"/><stop offset="1.0" stop-color="#fff" stop-opacity="0.000"/></linearGradient><linearGradient id="w44" gradientUnits="userSpaceOnUse" x1="1292.67" y1="375.79" x2="1334.56" y2="468.94"><stop offset="0" stop-color="#fff" stop-opacity="1.000"/><stop offset="0.03" stop-color="#fff" stop-opacity="0.909"/><stop offset="0.07" stop-color="#fff" stop-opacity="0.804"/><stop offset="0.12" stop-color="#fff" stop-opacity="0.696"/><stop offset="0.18" stop-color="#fff" stop-opacity="0.590"/><stop offset="0.26" stop-color="#fff" stop-opacity="0.478"/><stop offset="0.36" stop-color="#fff" stop-opacity="0.368"/><stop offset="0.5" stop-color="#fff" stop-opacity="0.253"/><stop offset="0.7" stop-color="#fff" stop-opacity="0.133"/><stop offset="1.0" stop-color="#fff" stop-opacity="0.000"/></linearGradient><linearGradient id="w45" gradientUnits="userSpaceOnUse" x1="1292.67" y1="375.79" x2="1334.56" y2="468.94"><stop offset="0" stop-color="#fff" stop-opacity="1.000"/><stop offset="0.03" stop-color="#fff" stop-opacity="0.902"/><stop offset="0.07" stop-color="#fff" stop-opacity="0.792"/><stop offset="0.12" stop-color="#fff" stop-opacity="0.680"/><stop offset="0.18" stop-color="#fff" stop-opacity="0.572"/><stop offset="0.26" stop-color="#fff" stop-opacity="0.459"/><stop offset="0.36" stop-color="#fff" stop-opacity="0.351"/><stop offset="0.5" stop-color="#fff" stop-opacity="0.239"/><stop offset="0.7" stop-color="#fff" stop-opacity="0.125"/><stop offset="1.0" stop-color="#fff" stop-opacity="0.000"/></linearGradient><linearGradient id="w46" gradientUnits="userSpaceOnUse" x1="1292.67" y1="375.79" x2="1334.56" y2="468.94"><stop offset="0" stop-color="#fff" stop-opacity="1.000"/><stop offset="0.03" stop-color="#fff" stop-opacity="0.896"/><stop offset="0.07" stop-color="#fff" stop-opacity="0.781"/><stop offset="0.12" stop-color="#fff" stop-opacity="0.665"/><stop offset="0.18" stop-color="#fff" stop-opacity="0.555"/><stop offset="0.26" stop-color="#fff" stop-opacity="0.442"/><stop offset="0.36" stop-color="#fff" stop-opacity="0.336"/><stop offset="0.5" stop-color="#fff" stop-opacity="0.228"/><stop offset="0.7" stop-color="#fff" stop-opacity="0.118"/><stop offset="1.0" stop-color="#fff" stop-opacity="0.000"/></linearGradient><linearGradient id="w47" gradientUnits="userSpaceOnUse" x1="1292.67" y1="375.79" x2="1334.56" y2="468.94"><stop offset="0" stop-color="#fff" stop-opacity="1.000"/><stop offset="0.03" stop-color="#fff" stop-opacity="0.889"/><stop offset="0.07" stop-color="#fff" stop-opacity="0.769"/><stop offset="0.12" stop-color="#fff" stop-opacity="0.650"/><stop offset="0.18" stop-color="#fff" stop-opacity="0.539"/><stop offset="0.26" stop-color="#fff" stop-opacity="0.427"/><stop offset="0.36" stop-color="#fff" stop-opacity="0.322"/><stop offset="0.5" stop-color="#fff" stop-opacity="0.217"/><stop offset="0.7" stop-color="#fff" stop-opacity="0.112"/><stop offset="1.0" stop-color="#fff" stop-opacity="0.000"/></linearGradient><clipPath id="loc"><polygon points="1185.0,579.1 1184.9,579.1 1184.8,579.1 1184.6,579.1 1184.5,579.2 1184.4,579.2 1184.2,579.2 1184.1,579.2 1184.0,579.2 1183.9,579.2 1183.8,579.2 1183.7,579.2 1183.7,579.2 1183.6,579.2 1183.5,579.2 1183.4,579.2 1183.3,579.2 1183.2,579.1 1183.1,579.1 1183.0,579.1 1182.9,579.0 1182.7,578.9 1182.6,578.9 1182.4,578.8 1182.2,578.7 1182.0,578.6 1181.8,578.4 1181.6,578.3 1181.4,578.2 1181.2,578.0 1180.9,577.9 1180.7,577.7 1180.4,577.5 1180.1,577.3 1179.7,577.0 1179.4,576.8 1179.0,576.5 1178.7,576.3 1178.3,576.0 1177.9,575.7 1177.4,575.4 1177.0,575.0 1176.5,574.7 1176.0,574.3 1175.5,574.0 1174.9,573.5 1174.2,573.1 1173.6,572.6 1172.9,572.2 1172.1,571.6 1171.4,571.1 1170.6,570.5 1169.8,570.0 1168.9,569.3 1168.0,568.7 1167.0,568.0 1166.0,567.2 1165.0,566.4 1163.9,565.5 1162.8,564.6 1161.6,563.6 1160.4,562.5 1159.1,561.4 1157.8,560.2 1156.5,558.8 1155.0,557.2 1153.4,555.3 1151.7,553.4 1150.0,551.2 1148.1,548.7 1146.1,545.9 1144.1,542.9 1141.9,539.7 1139.7,536.1 1137.3,532.2 1134.9,527.7 1132.3,522.9 1129.5,517.7 1126.7,512.0 1123.7,505.8 1120.6,498.9 1117.4,491.6 1113.9,483.7 1110.3,475.2 1106.7,466.1 1103.1,456.3 1099.5,445.7 1095.8,434.5 1092.2,422.6 1088.5,410.2 1085.0,397.1 1081.4,383.4 1077.8,368.9 1074.3,353.9 1071.0,338.6 1068.0,323.3 1065.1,307.7 1062.4,291.8 1060.0,275.8 1057.8,259.9 1056.1,244.4 1054.7,229.2 1053.6,214.2 1052.9,199.4 1052.6,185.1 1052.7,171.4 1053.4,158.2 1054.4,145.4 1055.9,133.2 1057.9,121.8 1060.4,111.4 1063.3,101.8 1066.8,93.0 1070.8,85.1 1075.1,78.2 1079.6,72.4 1084.5,67.7 1089.8,64.1 1095.4,61.4 1101.2,59.6 1107.0,58.4 1113.0,58.0 1119.1,58.5 1125.4,59.7 1131.7,61.3 1138.0,63.0 1144.3,65.0 1150.7,67.3 1157.0,70.0 1163.3,72.8 1169.5,75.6 1175.5,78.4 1181.5,81.3 1187.4,84.2 1193.3,87.3 1199.1,90.4 1204.9,93.6 1210.6,96.9 1216.3,100.3 1222.0,103.7 1227.7,107.2 1233.3,110.8 1239.0,114.4 1244.7,118.2 1250.3,122.0 1255.9,125.8 1261.6,129.7 1267.2,133.6 1272.8,137.6 1278.4,141.6 1284.0,145.7 1289.6,149.8 1295.2,153.9 1300.8,158.1 1306.4,162.3 1312.0,166.6 1317.6,170.8 1323.3,175.1 1328.9,179.5 1334.5,183.8 1340.2,188.2 1345.8,192.5 1351.4,196.9 1357.0,201.4 1362.6,205.8 1368.2,210.2 1373.8,214.6 1379.4,219.0 1385.0,223.5 1390.6,227.9 1396.1,232.3 1401.6,236.7 1407.1,241.2 1412.5,245.6 1418.0,250.0 1423.3,254.3 1428.7,258.7 1434.0,263.0 1439.3,267.3 1444.5,271.6 1449.7,275.8 1454.8,280.0 1459.9,284.1 1464.9,288.2 1469.9,292.3 1474.8,296.3 1479.7,300.3 1484.5,304.2 1489.2,308.0 1493.9,311.8 1498.5,315.5 1502.9,319.2 1507.3,322.8 1511.6,326.3 1515.8,329.8 1519.9,333.1 1523.9,336.3 1527.7,339.4 1531.4,342.5 1535.0,345.4 1538.6,348.3 1542.0,351.1 1545.4,353.9 1548.7,356.6 1551.9,359.2 1554.9,361.6 1557.9,364.0 1560.7,366.3 1563.4,368.5 1566.0,370.6 1568.5,372.6 1570.9,374.6 1573.2,376.5 1575.4,378.3 1577.5,380.0 1579.5,381.6 1581.4,383.2 1583.2,384.7 1584.9,386.2 1586.6,387.5 1588.2,388.8 1589.7,390.1 1591.2,391.3 1592.6,392.4 1593.9,393.4 1595.2,394.5 1596.4,395.5 1597.5,396.4 1598.6,397.3 1599.7,398.2 1600.7,399.1 1601.7,399.9 1602.7,400.7 1603.6,401.5 1604.5,402.2 1605.4,402.9 1606.2,403.6 1606.9,404.2 1607.6,404.7 1608.3,405.3 1609.2,406.0 1610.2,406.9 1611.3,407.8 1612.4,408.7 1613.5,409.6 1614.4,410.4 1615.2,411.0 1615.8,411.5 1616.4,412.0 1616.9,412.4 1617.4,412.9 1618.0,413.3 1618.5,413.8 1619.1,414.2 1619.6,414.6 1619.9,415.0 1620.3,415.2 1620.5,415.4 1620.6,415.6 1620.8,415.7 1620.9,415.8"/></clipPath></defs><g clip-path="url(#loc)"><polygon points="1545.2,374.2 12025.4,7142.6 16612.8,-6401.7" fill="#a60000"/><polygon points="1283.2,205.0 -9197.0,-6563.4 5870.6,-13339.3" fill="#00a600"/><polygon points="1168.5,543.6 -13899.1,7319.5 -3418.9,14087.9" fill="#0000a6"/><polygon points="1283.2,205.0 -8935.0,-6394.2 -8992.3,-6224.9 1281.8,209.2" fill="#00a601" stroke="#00a601" stroke-width="1.1" stroke-linejoin="round"/><polygon points="1281.8,209.2 -8992.3,-6224.9 -9049.7,-6055.6 1280.3,213.5" fill="#00a603" stroke="#00a603" stroke-width="1.1" stroke-linejoin="round"/><polygon points="1280.3,213.5 -9049.7,-6055.6 -9107.0,-5886.3 1278.9,217.7" fill="#00a605" stroke="#00a605" stroke-width="1.1" stroke-linejoin="round"/><polygon points="1278.9,217.7 -9107.0,-5886.3 -9164.4,-5717.0 1277.5,221.9" fill="#00a607" stroke="#00a607" stroke-width="1.1" stroke-linejoin="round"/><polygon points="1277.5,221.9 -9164.4,-5717.0 -9221.7,-5547.7 1276.0,226.2" fill="#00a609" stroke="#00a609" stroke-width="1.1" stroke-linejoin="round"/><polygon points="1276.0,226.2 -9221.7,-5547.7 -9279.0,-5378.4 1274.6,230.4" fill="#00a60c" stroke="#00a60c" stroke-width="1.1" stroke-linejoin="round"/><polygon points="1274.6,230.4 -9279.0,-5378.4 -9336.4,-5209.0 1273.2,234.6" fill="#00a60e" stroke="#00a60e" stroke-width="1.1" stroke-linejoin="round"/><polygon points="1273.2,234.6 -9336.4,-5209.0 -9393.7,-5039.7 1271.7,238.9" fill="#00a610" stroke="#00a610" stroke-width="1.1" stroke-linejoin="round"/><polygon points="1271.7,238.9 -9393.7,-5039.7 -9451.1,-4870.4 1270.3,243.1" fill="#00a613" stroke="#00a613" stroke-width="1.1" stroke-linejoin="round"/><polygon points="1270.3,243.1 -9451.1,-4870.4 -9508.4,-4701.1 1268.9,247.3" fill="#00a616" stroke="#00a616" stroke-width="1.1" stroke-linejoin="round"/><polygon points="1268.9,247.3 -9508.4,-4701.1 -9565.8,-4531.8 1267.4,251.6" fill="#00a618" stroke="#00a618" stroke-width="1.1" stroke-linejoin="round"/><polygon points="1267.4,251.6 -9565.8,-4531.8 -9623.1,-4362.5 1266.0,255.8" fill="#00a61b" stroke="#00a61b" stroke-width="1.1" stroke-linejoin="round"/><polygon points="1266.0,255.8 -9623.1,-4362.5 -9680.4,-4193.2 1264.6,260.0" fill="#00a61e" stroke="#00a61e" stroke-width="1.1" stroke-linejoin="round"/><polygon points="1264.6,260.0 -9680.4,-4193.2 -9737.8,-4023.9 1263.1,264.3" fill="#00a621" stroke="#00a621" stroke-width="1.1" stroke-linejoin="round"/><polygon points="1263.1,264.3 -9737.8,-4023.9 -9795.1,-3854.6 1261.7,268.5" fill="#01a624" stroke="#01a624" stroke-width="1.1" stroke-linejoin="round"/><polygon points="1261.7,268.5 -9795.1,-3854.6 -9852.5,-3685.3 1260.3,272.7" fill="#01a627" stroke="#01a627" stroke-width="1.1" stroke-linejoin="round"/><polygon points="1260.3,272.7 -9852.5,-3685.3 -9909.8,-3516.0 1258.8,277.0" fill="#01a62a" stroke="#01a62a" stroke-width="1.1" stroke-linejoin="round"/><polygon points="1258.8,277.0 -9909.8,-3516.0 -9967.1,-3346.7 1257.4,281.2" fill="#01a62d" stroke="#01a62d" stroke-width="1.1" stroke-linejoin="round"/><polygon points="1257.4,281.2 -9967.1,-3346.7 -10024.5,-3177.4 1256.0,285.4" fill="#01a631" stroke="#01a631" stroke-width="1.1" stroke-linejoin="round"/><polygon points="1256.0,285.4 -10024.5,-3177.4 -10081.8,-3008.1 1254.5,289.7" fill="#01a634" stroke="#01a634" stroke-width="1.1" stroke-linejoin="round"/><polygon points="1254.5,289.7 -10081.8,-3008.1 -10139.2,-2838.8 1253.1,293.9" fill="#01a638" stroke="#01a638" stroke-width="1.1" stroke-linejoin="round"/><polygon points="1253.1,293.9 -10139.2,-2838.8 -10196.5,-2669.5 1251.7,298.1" fill="#01a63b" stroke="#01a63b" stroke-width="1.1" stroke-linejoin="round"/><polygon points="1251.7,298.1 -10196.5,-2669.5 -10253.9,-2500.2 1250.2,302.4" fill="#01a63f" stroke="#01a63f" stroke-width="1.1" stroke-linejoin="round"/><polygon points="1250.2,302.4 -10253.9,-2500.2 -10311.2,-2330.9 1248.8,306.6" fill="#01a643" stroke="#01a643" stroke-width="1.1" stroke-linejoin="round"/><polygon points="1248.8,306.6 -10311.2,-2330.9 -10368.5,-2161.6 1247.3,310.8" fill="#01a648" stroke="#01a648" stroke-width="1.1" stroke-linejoin="round"/><polygon points="1247.3,310.8 -10368.5,-2161.6 -10425.9,-1992.3 1245.9,315.1" fill="#01a64c" stroke="#01a64c" stroke-width="1.1" stroke-linejoin="round"/><polygon points="1245.9,315.1 -10425.9,-1992.3 -10483.2,-1823.0 1244.5,319.3" fill="#01a650" stroke="#01a650" stroke-width="1.1" stroke-linejoin="round"/><polygon points="1244.5,319.3 -10483.2,-1823.0 -10540.6,-1653.7 1243.0,323.5" fill="#01a655" stroke="#01a655" stroke-width="1.1" stroke-linejoin="round"/><polygon points="1243.0,323.5 -10540.6,-1653.7 -10597.9,-1484.4 1241.6,327.8" fill="#01a65a" stroke="#01a65a" stroke-width="1.1" stroke-linejoin="round"/><polygon points="1241.6,327.8 -10597.9,-1484.4 -10655.3,-1315.1 1240.2,332.0" fill="#01a65f" stroke="#01a65f" stroke-width="1.1" stroke-linejoin="round"/><polygon points="1240.2,332.0 -10655.3,-1315.1 -10712.6,-1145.8 1238.7,336.2" fill="#01a664" stroke="#01a664" stroke-width="1.1" stroke-linejoin="round"/><polygon points="1238.7,336.2 -10712.6,-1145.8 -10769.9,-976.4 1237.3,340.5" fill="#01a669" stroke="#01a669" stroke-width="1.1" stroke-linejoin="round"/><polygon points="1237.3,340.5 -10769.9,-976.4 -10827.3,-807.1 1235.9,344.7" fill="#01a66f" stroke="#01a66f" stroke-width="1.1" stroke-linejoin="round"/><polygon points="1235.9,344.7 -10827.3,-807.1 -10884.6,-637.8 1234.4,348.9" fill="#01a675" stroke="#01a675" stroke-width="1.1" stroke-linejoin="round"/><polygon points="1234.4,348.9 -10884.6,-637.8 -10942.0,-468.5 1233.0,353.1" fill="#02a67b" stroke="#02a67b" stroke-width="1.1" stroke-linejoin="round"/><polygon points="1233.0,353.1 -10942.0,-468.5 -10999.3,-299.2 1231.6,357.4" fill="#02a682" stroke="#02a682" stroke-width="1.1" stroke-linejoin="round"/><polygon points="1231.6,357.4 -10999.3,-299.2 -11056.7,-129.9 1230.1,361.6" fill="#02a688" stroke="#02a688" stroke-width="1.1" stroke-linejoin="round"/><polygon points="1230.1,361.6 -11056.7,-129.9 -11114.0,39.4 1228.7,365.8" fill="#02a68f" stroke="#02a68f" stroke-width="1.1" stroke-linejoin="round"/><polygon points="1228.7,365.8 -11114.0,39.4 -11171.3,208.7 1227.3,370.1" fill="#02a697" stroke="#02a697" stroke-width="1.1" stroke-linejoin="round"/><polygon points="1227.3,370.1 -11171.3,208.7 -11228.7,378.0 1225.8,374.3" fill="#02a69f" stroke="#02a69f" stroke-width="1.1" stroke-linejoin="round"/><polygon points="1225.8,374.3 -11228.7,378.0 -11286.0,547.3 1224.4,378.5" fill="#02a5a6" stroke="#02a5a6" stroke-width="1.1" stroke-linejoin="round"/><polygon points="1224.4,378.5 -11286.0,547.3 -11343.4,716.6 1223.0,382.8" fill="#029da6" stroke="#029da6" stroke-width="1.1" stroke-linejoin="round"/><polygon points="1223.0,382.8 -11343.4,716.6 -11400.7,885.9 1221.5,387.0" fill="#0295a6" stroke="#0295a6" stroke-width="1.1" stroke-linejoin="round"/><polygon points="1221.5,387.0 -11400.7,885.9 -11458.1,1055.2 1220.1,391.2" fill="#028ea6" stroke="#028ea6" stroke-width="1.1" stroke-linejoin="round"/><polygon points="1220.1,391.2 -11458.1,1055.2 -11515.4,1224.5 1218.7,395.5" fill="#0287a6" stroke="#0287a6" stroke-width="1.1" stroke-linejoin="round"/><polygon points="1218.7,395.5 -11515.4,1224.5 -11572.7,1393.8 1217.2,399.7" fill="#0280a6" stroke="#0280a6" stroke-width="1.1" stroke-linejoin="round"/><polygon points="1217.2,399.7 -11572.7,1393.8 -11630.1,1563.1 1215.8,403.9" fill="#027aa6" stroke="#027aa6" stroke-width="1.1" stroke-linejoin="round"/><polygon points="1215.8,403.9 -11630.1,1563.1 -11687.4,1732.4 1214.4,408.2" fill="#0274a6" stroke="#0274a6" stroke-width="1.1" stroke-linejoin="round"/><polygon points="1214.4,408.2 -11687.4,1732.4 -11744.8,1901.7 1212.9,412.4" fill="#026ea6" stroke="#026ea6" stroke-width="1.1" stroke-linejoin="round"/><polygon points="1212.9,412.4 -11744.8,1901.7 -11802.1,2071.0 1211.5,416.6" fill="#0268a6" stroke="#0268a6" stroke-width="1.1" stroke-linejoin="round"/><polygon points="1211.5,416.6 -11802.1,2071.0 -11859.5,2240.3 1210.1,420.9" fill="#0263a6" stroke="#0263a6" stroke-width="1.1" stroke-linejoin="round"/><polygon points="1210.1,420.9 -11859.5,2240.3 -11916.8,2409.6 1208.6,425.1" fill="#025da6" stroke="#025da6" stroke-width="1.1" stroke-linejoin="round"/><polygon points="1208.6,425.1 -11916.8,2409.6 -11974.1,2578.9 1207.2,429.3" fill="#0258a6" stroke="#0258a6" stroke-width="1.1" stroke-linejoin="round"/><polygon points="1207.2,429.3 -11974.1,2578.9 -12031.5,2748.2 1205.8,433.6" fill="#0254a6" stroke="#0254a6" stroke-width="1.1" stroke-linejoin="round"/><polygon points="1205.8,433.6 -12031.5,2748.2 -12088.8,2917.5 1204.3,437.8" fill="#024fa6" stroke="#024fa6" stroke-width="1.1" stroke-linejoin="round"/><polygon points="1204.3,437.8 -12088.8,2917.5 -12146.2,3086.8 1202.9,442.0" fill="#024aa6" stroke="#024aa6" stroke-width="1.1" stroke-linejoin="round"/><polygon points="1202.9,442.0 -12146.2,3086.8 -12203.5,3256.1 1201.5,446.3" fill="#0246a6" stroke="#0246a6" stroke-width="1.1" stroke-linejoin="round"/><polygon points="1201.5,446.3 -12203.5,3256.1 -12260.9,3425.5 1200.0,450.5" fill="#0242a6" stroke="#0242a6" stroke-width="1.1" stroke-linejoin="round"/><polygon points="1200.0,450.5 -12260.9,3425.5 -12318.2,3594.8 1198.6,454.7" fill="#023ea6" stroke="#023ea6" stroke-width="1.1" stroke-linejoin="round"/><polygon points="1198.6,454.7 -12318.2,3594.8 -12375.5,3764.1 1197.2,459.0" fill="#023aa6" stroke="#023aa6" stroke-width="1.1" stroke-linejoin="round"/><polygon points="1197.2,459.0 -12375.5,3764.1 -12432.9,3933.4 1195.7,463.2" fill="#0236a6" stroke="#0236a6" stroke-width="1.1" stroke-linejoin="round"/><polygon points="1195.7,463.2 -12432.9,3933.4 -12490.2,4102.7 1194.3,467.4" fill="#0233a6" stroke="#0233a6" stroke-width="1.1" stroke-linejoin="round"/><polygon points="1194.3,467.4 -12490.2,4102.7 -12547.6,4272.0 1192.9,471.7" fill="#022fa6" stroke="#022fa6" stroke-width="1.1" stroke-linejoin="round"/><polygon points="1192.9,471.7 -12547.6,4272.0 -12604.9,4441.3 1191.4,475.9" fill="#022ca6" stroke="#022ca6" stroke-width="1.1" stroke-linejoin="round"/><polygon points="1191.4,475.9 -12604.9,4441.3 -12662.3,4610.6 1190.0,480.1" fill="#0229a6" stroke="#0229a6" stroke-width="1.1" stroke-linejoin="round"/><polygon points="1190.0,480.1 -12662.3,4610.6 -12719.6,4779.9 1188.6,484.4" fill="#0225a6" stroke="#0225a6" stroke-width="1.1" stroke-linejoin="round"/><polygon points="1188.6,484.4 -12719.6,4779.9 -12776.9,4949.2 1187.1,488.6" fill="#0222a6" stroke="#0222a6" stroke-width="1.1" stroke-linejoin="round"/><polygon points="1187.1,488.6 -12776.9,4949.2 -12834.3,5118.5 1185.7,492.8" fill="#021fa6" stroke="#021fa6" stroke-width="1.1" stroke-linejoin="round"/><polygon points="1185.7,492.8 -12834.3,5118.5 -12891.6,5287.8 1184.3,497.1" fill="#021ca6" stroke="#021ca6" stroke-width="1.1" stroke-linejoin="round"/><polygon points="1184.3,497.1 -12891.6,5287.8 -12949.0,5457.1 1182.8,501.3" fill="#0219a6" stroke="#0219a6" stroke-width="1.1" stroke-linejoin="round"/><polygon points="1182.8,501.3 -12949.0,5457.1 -13006.3,5626.4 1181.4,505.5" fill="#0217a6" stroke="#0217a6" stroke-width="1.1" stroke-linejoin="round"/><polygon points="1181.4,505.5 -13006.3,5626.4 -13063.7,5795.7 1180.0,509.8" fill="#0214a6" stroke="#0214a6" stroke-width="1.1" stroke-linejoin="round"/><polygon points="1180.0,509.8 -13063.7,5795.7 -13121.0,5965.0 1178.5,514.0" fill="#0211a6" stroke="#0211a6" stroke-width="1.1" stroke-linejoin="round"/><polygon points="1178.5,514.0 -13121.0,5965.0 -13178.3,6134.3 1177.1,518.2" fill="#020fa6" stroke="#020fa6" stroke-width="1.1" stroke-linejoin="round"/><polygon points="1177.1,518.2 -13178.3,6134.3 -13235.7,6303.6 1175.7,522.5" fill="#020ca6" stroke="#020ca6" stroke-width="1.1" stroke-linejoin="round"/><polygon points="1175.7,522.5 -13235.7,6303.6 -13293.0,6472.9 1174.2,526.7" fill="#020aa6" stroke="#020aa6" stroke-width="1.1" stroke-linejoin="round"/><polygon points="1174.2,526.7 -13293.0,6472.9 -13350.4,6642.2 1172.8,530.9" fill="#0208a6" stroke="#0208a6" stroke-width="1.1" stroke-linejoin="round"/><polygon points="1172.8,530.9 -13350.4,6642.2 -13407.7,6811.5 1171.4,535.1" fill="#0205a6" stroke="#0205a6" stroke-width="1.1" stroke-linejoin="round"/><polygon points="1171.4,535.1 -13407.7,6811.5 -13465.0,6980.8 1169.9,539.4" fill="#0203a6" stroke="#0203a6" stroke-width="1.1" stroke-linejoin="round"/><polygon points="1169.9,539.4 -13465.0,6980.8 -13522.4,7150.1 1168.5,543.6" fill="#0201a6" stroke="#0201a6" stroke-width="1.1" stroke-linejoin="round"/><polygon points="1545.2,374.2 11763.4,6973.4 11575.0,7058.1 1540.5,376.3" fill="#a60101" stroke="#a60101" stroke-width="1.1" stroke-linejoin="round"/><polygon points="1540.5,376.3 11575.0,7058.1 11386.7,7142.8 1535.8,378.5" fill="#a60102" stroke="#a60102" stroke-width="1.1" stroke-linejoin="round"/><polygon points="1535.8,378.5 11386.7,7142.8 11198.3,7227.5 1531.1,380.6" fill="#a60103" stroke="#a60103" stroke-width="1.1" stroke-linejoin="round"/><polygon points="1531.1,380.6 11198.3,7227.5 11010.0,7312.2 1526.4,382.7" fill="#a60104" stroke="#a60104" stroke-width="1.1" stroke-linejoin="round"/><polygon points="1526.4,382.7 11010.0,7312.2 10821.6,7396.9 1521.6,384.8" fill="#a60105" stroke="#a60105" stroke-width="1.1" stroke-linejoin="round"/><polygon points="1521.6,384.8 10821.6,7396.9 10633.3,7481.6 1516.9,386.9" fill="#a60107" stroke="#a60107" stroke-width="1.1" stroke-linejoin="round"/><polygon points="1516.9,386.9 10633.3,7481.6 10445.0,7566.3 1512.2,389.0" fill="#a60108" stroke="#a60108" stroke-width="1.1" stroke-linejoin="round"/><polygon points="1512.2,389.0 10445.0,7566.3 10256.6,7651.0 1507.5,391.2" fill="#a60109" stroke="#a60109" stroke-width="1.1" stroke-linejoin="round"/><polygon points="1507.5,391.2 10256.6,7651.0 10068.3,7735.7 1502.8,393.3" fill="#a6010b" stroke="#a6010b" stroke-width="1.1" stroke-linejoin="round"/><polygon points="1502.8,393.3 10068.3,7735.7 9879.9,7820.4 1498.1,395.4" fill="#a6010c" stroke="#a6010c" stroke-width="1.1" stroke-linejoin="round"/><polygon points="1498.1,395.4 9879.9,7820.4 9691.6,7905.1 1493.4,397.5" fill="#a6010d" stroke="#a6010d" stroke-width="1.1" stroke-linejoin="round"/><polygon points="1493.4,397.5 9691.6,7905.1 9503.2,7989.8 1488.7,399.6" fill="#a6010f" stroke="#a6010f" stroke-width="1.1" stroke-linejoin="round"/><polygon points="1488.7,399.6 9503.2,7989.8 9314.9,8074.5 1484.0,401.7" fill="#a60110" stroke="#a60110" stroke-width="1.1" stroke-linejoin="round"/><polygon points="1484.0,401.7 9314.9,8074.5 9126.5,8159.2 1479.3,403.9" fill="#a60112" stroke="#a60112" stroke-width="1.1" stroke-linejoin="round"/><polygon points="1479.3,403.9 9126.5,8159.2 8938.2,8243.9 1474.6,406.0" fill="#a60114" stroke="#a60114" stroke-width="1.1" stroke-linejoin="round"/><polygon points="1474.6,406.0 8938.2,8243.9 8749.8,8328.6 1469.9,408.1" fill="#a60115" stroke="#a60115" stroke-width="1.1" stroke-linejoin="round"/><polygon points="1469.9,408.1 8749.8,8328.6 8561.5,8413.3 1465.1,410.2" fill="#a60117" stroke="#a60117" stroke-width="1.1" stroke-linejoin="round"/><polygon points="1465.1,410.2 8561.5,8413.3 8373.2,8498.0 1460.4,412.3" fill="#a60119" stroke="#a60119" stroke-width="1.1" stroke-linejoin="round"/><polygon points="1460.4,412.3 8373.2,8498.0 8184.8,8582.7 1455.7,414.4" fill="#a6011b" stroke="#a6011b" stroke-width="1.1" stroke-linejoin="round"/><polygon points="1455.7,414.4 8184.8,8582.7 7996.5,8667.4 1451.0,416.6" fill="#a6011d" stroke="#a6011d" stroke-width="1.1" stroke-linejoin="round"/><polygon points="1451.0,416.6 7996.5,8667.4 7808.1,8752.1 1446.3,418.7" fill="#a6011f" stroke="#a6011f" stroke-width="1.1" stroke-linejoin="round"/><polygon points="1446.3,418.7 7808.1,8752.1 7619.8,8836.8 1441.6,420.8" fill="#a60121" stroke="#a60121" stroke-width="1.1" stroke-linejoin="round"/><polygon points="1441.6,420.8 7619.8,8836.8 7431.4,8921.5 1436.9,422.9" fill="#a60123" stroke="#a60123" stroke-width="1.1" stroke-linejoin="round"/><polygon points="1436.9,422.9 7431.4,8921.5 7243.1,9006.2 1432.2,425.0" fill="#a60125" stroke="#a60125" stroke-width="1.1" stroke-linejoin="round"/><polygon points="1432.2,425.0 7243.1,9006.2 7054.7,9090.9 1427.5,427.2" fill="#a60127" stroke="#a60127" stroke-width="1.1" stroke-linejoin="round"/><polygon points="1427.5,427.2 7054.7,9090.9 6866.4,9175.6 1422.8,429.3" fill="#a6012a" stroke="#a6012a" stroke-width="1.1" stroke-linejoin="round"/><polygon points="1422.8,429.3 6866.4,9175.6 6678.1,9260.3 1418.1,431.4" fill="#a6012c" stroke="#a6012c" stroke-width="1.1" stroke-linejoin="round"/><polygon points="1418.1,431.4 6678.1,9260.3 6489.7,9345.0 1413.4,433.5" fill="#a6012e" stroke="#a6012e" stroke-width="1.1" stroke-linejoin="round"/><polygon points="1413.4,433.5 6489.7,9345.0 6301.4,9429.7 1408.6,435.6" fill="#a60131" stroke="#a60131" stroke-width="1.1" stroke-linejoin="round"/><polygon points="1408.6,435.6 6301.4,9429.7 6113.0,9514.4 1403.9,437.7" fill="#a60134" stroke="#a60134" stroke-width="1.1" stroke-linejoin="round"/><polygon points="1403.9,437.7 6113.0,9514.4 5924.7,9599.1 1399.2,439.9" fill="#a60137" stroke="#a60137" stroke-width="1.1" stroke-linejoin="round"/><polygon points="1399.2,439.9 5924.7,9599.1 5736.3,9683.8 1394.5,442.0" fill="#a6013a" stroke="#a6013a" stroke-width="1.1" stroke-linejoin="round"/><polygon points="1394.5,442.0 5736.3,9683.8 5548.0,9768.5 1389.8,444.1" fill="#a6013d" stroke="#a6013d" stroke-width="1.1" stroke-linejoin="round"/><polygon points="1389.8,444.1 5548.0,9768.5 5359.6,9853.2 1385.1,446.2" fill="#a60140" stroke="#a60140" stroke-width="1.1" stroke-linejoin="round"/><polygon points="1385.1,446.2 5359.6,9853.2 5171.3,9937.9 1380.4,448.3" fill="#a60143" stroke="#a60143" stroke-width="1.1" stroke-linejoin="round"/><polygon points="1380.4,448.3 5171.3,9937.9 4983.0,10022.6 1375.7,450.4" fill="#a60147" stroke="#a60147" stroke-width="1.1" stroke-linejoin="round"/><polygon points="1375.7,450.4 4983.0,10022.6 4794.6,10107.3 1371.0,452.6" fill="#a6014a" stroke="#a6014a" stroke-width="1.1" stroke-linejoin="round"/><polygon points="1371.0,452.6 4794.6,10107.3 4606.3,10192.0 1366.3,454.7" fill="#a6014e" stroke="#a6014e" stroke-width="1.1" stroke-linejoin="round"/><polygon points="1366.3,454.7 4606.3,10192.0 4417.9,10276.7 1361.6,456.8" fill="#a60152" stroke="#a60152" stroke-width="1.1" stroke-linejoin="round"/><polygon points="1361.6,456.8 4417.9,10276.7 4229.6,10361.4 1356.8,458.9" fill="#a60156" stroke="#a60156" stroke-width="1.1" stroke-linejoin="round"/><polygon points="1356.8,458.9 4229.6,10361.4 4041.2,10446.1 1352.1,461.0" fill="#a6015b" stroke="#a6015b" stroke-width="1.1" stroke-linejoin="round"/><polygon points="1352.1,461.0 4041.2,10446.1 3852.9,10530.8 1347.4,463.2" fill="#a6015f" stroke="#a6015f" stroke-width="1.1" stroke-linejoin="round"/><polygon points="1347.4,463.2 3852.9,10530.8 3664.5,10615.5 1342.7,465.3" fill="#a60164" stroke="#a60164" stroke-width="1.1" stroke-linejoin="round"/><polygon points="1342.7,465.3 3664.5,10615.5 3476.2,10700.2 1338.0,467.4" fill="#a60169" stroke="#a60169" stroke-width="1.1" stroke-linejoin="round"/><polygon points="1338.0,467.4 3476.2,10700.2 3287.8,10784.9 1333.3,469.5" fill="#a6016f" stroke="#a6016f" stroke-width="1.1" stroke-linejoin="round"/><polygon points="1333.3,469.5 3287.8,10784.9 3099.5,10869.6 1328.6,471.6" fill="#a60174" stroke="#a60174" stroke-width="1.1" stroke-linejoin="round"/><polygon points="1328.6,471.6 3099.5,10869.6 2911.2,10954.3 1323.9,473.7" fill="#a6017a" stroke="#a6017a" stroke-width="1.1" stroke-linejoin="round"/><polygon points="1323.9,473.7 2911.2,10954.3 2722.8,11039.0 1319.2,475.9" fill="#a60181" stroke="#a60181" stroke-width="1.1" stroke-linejoin="round"/><polygon points="1319.2,475.9 2722.8,11039.0 2534.5,11123.6 1314.5,478.0" fill="#a60188" stroke="#a60188" stroke-width="1.1" stroke-linejoin="round"/><polygon points="1314.5,478.0 2534.5,11123.6 2346.1,11208.3 1309.8,480.1" fill="#a6018f" stroke="#a6018f" stroke-width="1.1" stroke-linejoin="round"/><polygon points="1309.8,480.1 2346.1,11208.3 2157.8,11293.0 1305.1,482.2" fill="#a60197" stroke="#a60197" stroke-width="1.1" stroke-linejoin="round"/><polygon points="1305.1,482.2 2157.8,11293.0 1969.4,11377.7 1300.3,484.3" fill="#a6019f" stroke="#a6019f" stroke-width="1.1" stroke-linejoin="round"/><polygon points="1300.3,484.3 1969.4,11377.7 1781.1,11462.4 1295.6,486.4" fill="#a401a6" stroke="#a401a6" stroke-width="1.1" stroke-linejoin="round"/><polygon points="1295.6,486.4 1781.1,11462.4 1592.7,11547.1 1290.9,488.6" fill="#9b00a6" stroke="#9b00a6" stroke-width="1.1" stroke-linejoin="round"/><polygon points="1290.9,488.6 1592.7,11547.1 1404.4,11631.8 1286.2,490.7" fill="#9200a6" stroke="#9200a6" stroke-width="1.1" stroke-linejoin="round"/><polygon points="1286.2,490.7 1404.4,11631.8 1216.1,11716.5 1281.5,492.8" fill="#8a00a6" stroke="#8a00a6" stroke-width="1.1" stroke-linejoin="round"/><polygon points="1281.5,492.8 1216.1,11716.5 1027.7,11801.2 1276.8,494.9" fill="#8200a6" stroke="#8200a6" stroke-width="1.1" stroke-linejoin="round"/><polygon points="1276.8,494.9 1027.7,11801.2 839.4,11885.9 1272.1,497.0" fill="#7b00a6" stroke="#7b00a6" stroke-width="1.1" stroke-linejoin="round"/><polygon points="1272.1,497.0 839.4,11885.9 651.0,11970.6 1267.4,499.1" fill="#7300a6" stroke="#7300a6" stroke-width="1.1" stroke-linejoin="round"/><polygon points="1267.4,499.1 651.0,11970.6 462.7,12055.3 1262.7,501.3" fill="#6c00a6" stroke="#6c00a6" stroke-width="1.1" stroke-linejoin="round"/><polygon points="1262.7,501.3 462.7,12055.3 274.3,12140.0 1258.0,503.4" fill="#6600a6" stroke="#6600a6" stroke-width="1.1" stroke-linejoin="round"/><polygon points="1258.0,503.4 274.3,12140.0 86.0,12224.7 1253.3,505.5" fill="#5f00a6" stroke="#5f00a6" stroke-width="1.1" stroke-linejoin="round"/><polygon points="1253.3,505.5 86.0,12224.7 -102.4,12309.4 1248.5,507.6" fill="#5800a6" stroke="#5800a6" stroke-width="1.1" stroke-linejoin="round"/><polygon points="1248.5,507.6 -102.4,12309.4 -290.7,12394.1 1243.8,509.7" fill="#5200a6" stroke="#5200a6" stroke-width="1.1" stroke-linejoin="round"/><polygon points="1243.8,509.7 -290.7,12394.1 -479.0,12478.8 1239.1,511.9" fill="#4c00a6" stroke="#4c00a6" stroke-width="1.1" stroke-linejoin="round"/><polygon points="1239.1,511.9 -479.0,12478.8 -667.4,12563.5 1234.4,514.0" fill="#4600a6" stroke="#4600a6" stroke-width="1.1" stroke-linejoin="round"/><polygon points="1234.4,514.0 -667.4,12563.5 -855.7,12648.2 1229.7,516.1" fill="#4100a6" stroke="#4100a6" stroke-width="1.1" stroke-linejoin="round"/><polygon points="1229.7,516.1 -855.7,12648.2 -1044.1,12732.9 1225.0,518.2" fill="#3b00a6" stroke="#3b00a6" stroke-width="1.1" stroke-linejoin="round"/><polygon points="1225.0,518.2 -1044.1,12732.9 -1232.4,12817.6 1220.3,520.3" fill="#3600a6" stroke="#3600a6" stroke-width="1.1" stroke-linejoin="round"/><polygon points="1220.3,520.3 -1232.4,12817.6 -1420.8,12902.3 1215.6,522.4" fill="#3100a6" stroke="#3100a6" stroke-width="1.1" stroke-linejoin="round"/><polygon points="1215.6,522.4 -1420.8,12902.3 -1609.1,12987.0 1210.9,524.6" fill="#2c00a6" stroke="#2c00a6" stroke-width="1.1" stroke-linejoin="round"/><polygon points="1210.9,524.6 -1609.1,12987.0 -1797.5,13071.7 1206.2,526.7" fill="#2700a6" stroke="#2700a6" stroke-width="1.1" stroke-linejoin="round"/><polygon points="1206.2,526.7 -1797.5,13071.7 -1985.8,13156.4 1201.5,528.8" fill="#2200a6" stroke="#2200a6" stroke-width="1.1" stroke-linejoin="round"/><polygon points="1201.5,528.8 -1985.8,13156.4 -2174.2,13241.1 1196.8,530.9" fill="#1d00a6" stroke="#1d00a6" stroke-width="1.1" stroke-linejoin="round"/><polygon points="1196.8,530.9 -2174.2,13241.1 -2362.5,13325.8 1192.0,533.0" fill="#1900a6" stroke="#1900a6" stroke-width="1.1" stroke-linejoin="round"/><polygon points="1192.0,533.0 -2362.5,13325.8 -2550.8,13410.5 1187.3,535.1" fill="#1400a6" stroke="#1400a6" stroke-width="1.1" stroke-linejoin="round"/><polygon points="1187.3,535.1 -2550.8,13410.5 -2739.2,13495.2 1182.6,537.3" fill="#1000a6" stroke="#1000a6" stroke-width="1.1" stroke-linejoin="round"/><polygon points="1182.6,537.3 -2739.2,13495.2 -2927.5,13579.9 1177.9,539.4" fill="#0c00a6" stroke="#0c00a6" stroke-width="1.1" stroke-linejoin="round"/><polygon points="1177.9,539.4 -2927.5,13579.9 -3115.9,13664.6 1173.2,541.5" fill="#0800a6" stroke="#0800a6" stroke-width="1.1" stroke-linejoin="round"/><polygon points="1173.2,541.5 -3115.9,13664.6 -3304.2,13749.3 1168.5,543.6" fill="#0400a6" stroke="#0400a6" stroke-width="1.1" stroke-linejoin="round"/><polygon points="1545.2,374.2 16236.1,-6232.3 16105.1,-6316.9 1541.9,372.1" fill="#a60100" stroke="#a60100" stroke-width="1.1" stroke-linejoin="round"/><polygon points="1541.9,372.1 16105.1,-6316.9 15974.1,-6401.5 1538.6,370.0" fill="#a60200" stroke="#a60200" stroke-width="1.1" stroke-linejoin="round"/><polygon points="1538.6,370.0 15974.1,-6401.5 15843.1,-6486.1 1535.4,367.9" fill="#a60300" stroke="#a60300" stroke-width="1.1" stroke-linejoin="round"/><polygon points="1535.4,367.9 15843.1,-6486.1 15712.1,-6570.7 1532.1,365.8" fill="#a60500" stroke="#a60500" stroke-width="1.1" stroke-linejoin="round"/><polygon points="1532.1,365.8 15712.1,-6570.7 15581.1,-6655.3 1528.8,363.6" fill="#a60600" stroke="#a60600" stroke-width="1.1" stroke-linejoin="round"/><polygon points="1528.8,363.6 15581.1,-6655.3 15450.1,-6739.9 1525.5,361.5" fill="#a60700" stroke="#a60700" stroke-width="1.1" stroke-linejoin="round"/><polygon points="1525.5,361.5 15450.1,-6739.9 15319.1,-6824.5 1522.3,359.4" fill="#a60900" stroke="#a60900" stroke-width="1.1" stroke-linejoin="round"/><polygon points="1522.3,359.4 15319.1,-6824.5 15188.1,-6909.1 1519.0,357.3" fill="#a60a00" stroke="#a60a00" stroke-width="1.1" stroke-linejoin="round"/><polygon points="1519.0,357.3 15188.1,-6909.1 15057.1,-6993.7 1515.7,355.2" fill="#a60b00" stroke="#a60b00" stroke-width="1.1" stroke-linejoin="round"/><polygon points="1515.7,355.2 15057.1,-6993.7 14926.1,-7078.4 1512.4,353.1" fill="#a60d00" stroke="#a60d00" stroke-width="1.1" stroke-linejoin="round"/><polygon points="1512.4,353.1 14926.1,-7078.4 14795.1,-7163.0 1509.2,351.0" fill="#a60e00" stroke="#a60e00" stroke-width="1.1" stroke-linejoin="round"/><polygon points="1509.2,351.0 14795.1,-7163.0 14664.1,-7247.6 1505.9,348.8" fill="#a61000" stroke="#a61000" stroke-width="1.1" stroke-linejoin="round"/><polygon points="1505.9,348.8 14664.1,-7247.6 14533.1,-7332.2 1502.6,346.7" fill="#a61100" stroke="#a61100" stroke-width="1.1" stroke-linejoin="round"/><polygon points="1502.6,346.7 14533.1,-7332.2 14402.1,-7416.8 1499.3,344.6" fill="#a61300" stroke="#a61300" stroke-width="1.1" stroke-linejoin="round"/><polygon points="1499.3,344.6 14402.1,-7416.8 14271.1,-7501.4 1496.1,342.5" fill="#a61500" stroke="#a61500" stroke-width="1.1" stroke-linejoin="round"/><polygon points="1496.1,342.5 14271.1,-7501.4 14140.1,-7586.0 1492.8,340.4" fill="#a61600" stroke="#a61600" stroke-width="1.1" stroke-linejoin="round"/><polygon points="1492.8,340.4 14140.1,-7586.0 14009.0,-7670.6 1489.5,338.3" fill="#a61800" stroke="#a61800" stroke-width="1.1" stroke-linejoin="round"/><polygon points="1489.5,338.3 14009.0,-7670.6 13878.0,-7755.2 1486.2,336.1" fill="#a61a00" stroke="#a61a00" stroke-width="1.1" stroke-linejoin="round"/><polygon points="1486.2,336.1 13878.0,-7755.2 13747.0,-7839.8 1483.0,334.0" fill="#a61c00" stroke="#a61c00" stroke-width="1.1" stroke-linejoin="round"/><polygon points="1483.0,334.0 13747.0,-7839.8 13616.0,-7924.4 1479.7,331.9" fill="#a61e00" stroke="#a61e00" stroke-width="1.1" stroke-linejoin="round"/><polygon points="1479.7,331.9 13616.0,-7924.4 13485.0,-8009.0 1476.4,329.8" fill="#a62000" stroke="#a62000" stroke-width="1.1" stroke-linejoin="round"/><polygon points="1476.4,329.8 13485.0,-8009.0 13354.0,-8093.6 1473.1,327.7" fill="#a62200" stroke="#a62200" stroke-width="1.1" stroke-linejoin="round"/><polygon points="1473.1,327.7 13354.0,-8093.6 13223.0,-8178.2 1469.9,325.6" fill="#a62400" stroke="#a62400" stroke-width="1.1" stroke-linejoin="round"/><polygon points="1469.9,325.6 13223.0,-8178.2 13092.0,-8262.8 1466.6,323.5" fill="#a62600" stroke="#a62600" stroke-width="1.1" stroke-linejoin="round"/><polygon points="1466.6,323.5 13092.0,-8262.8 12961.0,-8347.4 1463.3,321.3" fill="#a62800" stroke="#a62800" stroke-width="1.1" stroke-linejoin="round"/><polygon points="1463.3,321.3 12961.0,-8347.4 12830.0,-8432.0 1460.0,319.2" fill="#a62b00" stroke="#a62b00" stroke-width="1.1" stroke-linejoin="round"/><polygon points="1460.0,319.2 12830.0,-8432.0 12699.0,-8516.6 1456.8,317.1" fill="#a62d00" stroke="#a62d00" stroke-width="1.1" stroke-linejoin="round"/><polygon points="1456.8,317.1 12699.0,-8516.6 12568.0,-8601.2 1453.5,315.0" fill="#a63000" stroke="#a63000" stroke-width="1.1" stroke-linejoin="round"/><polygon points="1453.5,315.0 12568.0,-8601.2 12437.0,-8685.8 1450.2,312.9" fill="#a63300" stroke="#a63300" stroke-width="1.1" stroke-linejoin="round"/><polygon points="1450.2,312.9 12437.0,-8685.8 12306.0,-8770.5 1446.9,310.8" fill="#a63500" stroke="#a63500" stroke-width="1.1" stroke-linejoin="round"/><polygon points="1446.9,310.8 12306.0,-8770.5 12175.0,-8855.1 1443.7,308.6" fill="#a63800" stroke="#a63800" stroke-width="1.1" stroke-linejoin="round"/><polygon points="1443.7,308.6 12175.0,-8855.1 12044.0,-8939.7 1440.4,306.5" fill="#a63b00" stroke="#a63b00" stroke-width="1.1" stroke-linejoin="round"/><polygon points="1440.4,306.5 12044.0,-8939.7 11913.0,-9024.3 1437.1,304.4" fill="#a63e00" stroke="#a63e00" stroke-width="1.1" stroke-linejoin="round"/><polygon points="1437.1,304.4 11913.0,-9024.3 11782.0,-9108.9 1433.8,302.3" fill="#a64200" stroke="#a64200" stroke-width="1.1" stroke-linejoin="round"/><polygon points="1433.8,302.3 11782.0,-9108.9 11651.0,-9193.5 1430.6,300.2" fill="#a64500" stroke="#a64500" stroke-width="1.1" stroke-linejoin="round"/><polygon points="1430.6,300.2 11651.0,-9193.5 11520.0,-9278.1 1427.3,298.1" fill="#a64900" stroke="#a64900" stroke-width="1.1" stroke-linejoin="round"/><polygon points="1427.3,298.1 11520.0,-9278.1 11389.0,-9362.7 1424.0,296.0" fill="#a64c00" stroke="#a64c00" stroke-width="1.1" stroke-linejoin="round"/><polygon points="1424.0,296.0 11389.0,-9362.7 11258.0,-9447.3 1420.7,293.8" fill="#a65000" stroke="#a65000" stroke-width="1.1" stroke-linejoin="round"/><polygon points="1420.7,293.8 11258.0,-9447.3 11127.0,-9531.9 1417.5,291.7" fill="#a65400" stroke="#a65400" stroke-width="1.1" stroke-linejoin="round"/><polygon points="1417.5,291.7 11127.0,-9531.9 10996.0,-9616.5 1414.2,289.6" fill="#a65900" stroke="#a65900" stroke-width="1.1" stroke-linejoin="round"/><polygon points="1414.2,289.6 10996.0,-9616.5 10865.0,-9701.1 1410.9,287.5" fill="#a65d00" stroke="#a65d00" stroke-width="1.1" stroke-linejoin="round"/><polygon points="1410.9,287.5 10865.0,-9701.1 10734.0,-9785.7 1407.6,285.4" fill="#a66200" stroke="#a66200" stroke-width="1.1" stroke-linejoin="round"/><polygon points="1407.6,285.4 10734.0,-9785.7 10603.0,-9870.3 1404.4,283.3" fill="#a66700" stroke="#a66700" stroke-width="1.1" stroke-linejoin="round"/><polygon points="1404.4,283.3 10603.0,-9870.3 10472.0,-9954.9 1401.1,281.2" fill="#a66c00" stroke="#a66c00" stroke-width="1.1" stroke-linejoin="round"/><polygon points="1401.1,281.2 10472.0,-9954.9 10341.0,-10039.5 1397.8,279.0" fill="#a67200" stroke="#a67200" stroke-width="1.1" stroke-linejoin="round"/><polygon points="1397.8,279.0 10341.0,-10039.5 10210.0,-10124.1 1394.5,276.9" fill="#a67800" stroke="#a67800" stroke-width="1.1" stroke-linejoin="round"/><polygon points="1394.5,276.9 10210.0,-10124.1 10079.0,-10208.7 1391.3,274.8" fill="#a67e00" stroke="#a67e00" stroke-width="1.1" stroke-linejoin="round"/><polygon points="1391.3,274.8 10079.0,-10208.7 9948.0,-10293.3 1388.0,272.7" fill="#a68500" stroke="#a68500" stroke-width="1.1" stroke-linejoin="round"/><polygon points="1388.0,272.7 9948.0,-10293.3 9817.0,-10377.9 1384.7,270.6" fill="#a68c00" stroke="#a68c00" stroke-width="1.1" stroke-linejoin="round"/><polygon points="1384.7,270.6 9817.0,-10377.9 9686.0,-10462.5 1381.4,268.5" fill="#a69300" stroke="#a69300" stroke-width="1.1" stroke-linejoin="round"/><polygon points="1381.4,268.5 9686.0,-10462.5 9555.0,-10547.2 1378.2,266.3" fill="#a69b00" stroke="#a69b00" stroke-width="1.1" stroke-linejoin="round"/><polygon points="1378.2,266.3 9555.0,-10547.2 9424.0,-10631.8 1374.9,264.2" fill="#a6a400" stroke="#a6a400" stroke-width="1.1" stroke-linejoin="round"/><polygon points="1374.9,264.2 9424.0,-10631.8 9293.0,-10716.4 1371.6,262.1" fill="#9fa600" stroke="#9fa600" stroke-width="1.1" stroke-linejoin="round"/><polygon points="1371.6,262.1 9293.0,-10716.4 9162.0,-10801.0 1368.3,260.0" fill="#96a600" stroke="#96a600" stroke-width="1.1" stroke-linejoin="round"/><polygon points="1368.3,260.0 9162.0,-10801.0 9031.0,-10885.6 1365.1,257.9" fill="#8ea600" stroke="#8ea600" stroke-width="1.1" stroke-linejoin="round"/><polygon points="1365.1,257.9 9031.0,-10885.6 8900.0,-10970.2 1361.8,255.8" fill="#86a600" stroke="#86a600" stroke-width="1.1" stroke-linejoin="round"/><polygon points="1361.8,255.8 8900.0,-10970.2 8769.0,-11054.8 1358.5,253.7" fill="#7ea600" stroke="#7ea600" stroke-width="1.1" stroke-linejoin="round"/><polygon points="1358.5,253.7 8769.0,-11054.8 8638.0,-11139.4 1355.2,251.5" fill="#77a600" stroke="#77a600" stroke-width="1.1" stroke-linejoin="round"/><polygon points="1355.2,251.5 8638.0,-11139.4 8507.0,-11224.0 1352.0,249.4" fill="#70a600" stroke="#70a600" stroke-width="1.1" stroke-linejoin="round"/><polygon points="1352.0,249.4 8507.0,-11224.0 8376.0,-11308.6 1348.7,247.3" fill="#69a600" stroke="#69a600" stroke-width="1.1" stroke-linejoin="round"/><polygon points="1348.7,247.3 8376.0,-11308.6 8245.0,-11393.2 1345.4,245.2" fill="#62a600" stroke="#62a600" stroke-width="1.1" stroke-linejoin="round"/><polygon points="1345.4,245.2 8245.0,-11393.2 8114.0,-11477.8 1342.1,243.1" fill="#5ba600" stroke="#5ba600" stroke-width="1.1" stroke-linejoin="round"/><polygon points="1342.1,243.1 8114.0,-11477.8 7982.9,-11562.4 1338.9,241.0" fill="#55a600" stroke="#55a600" stroke-width="1.1" stroke-linejoin="round"/><polygon points="1338.9,241.0 7982.9,-11562.4 7851.9,-11647.0 1335.6,238.8" fill="#4fa600" stroke="#4fa600" stroke-width="1.1" stroke-linejoin="round"/><polygon points="1335.6,238.8 7851.9,-11647.0 7720.9,-11731.6 1332.3,236.7" fill="#49a600" stroke="#49a600" stroke-width="1.1" stroke-linejoin="round"/><polygon points="1332.3,236.7 7720.9,-11731.6 7589.9,-11816.2 1329.0,234.6" fill="#43a600" stroke="#43a600" stroke-width="1.1" stroke-linejoin="round"/><polygon points="1329.0,234.6 7589.9,-11816.2 7458.9,-11900.8 1325.8,232.5" fill="#3ea600" stroke="#3ea600" stroke-width="1.1" stroke-linejoin="round"/><polygon points="1325.8,232.5 7458.9,-11900.8 7327.9,-11985.4 1322.5,230.4" fill="#38a600" stroke="#38a600" stroke-width="1.1" stroke-linejoin="round"/><polygon points="1322.5,230.4 7327.9,-11985.4 7196.9,-12070.0 1319.2,228.3" fill="#33a600" stroke="#33a600" stroke-width="1.1" stroke-linejoin="round"/><polygon points="1319.2,228.3 7196.9,-12070.0 7065.9,-12154.6 1315.9,226.2" fill="#2ea600" stroke="#2ea600" stroke-width="1.1" stroke-linejoin="round"/><polygon points="1315.9,226.2 7065.9,-12154.6 6934.9,-12239.3 1312.7,224.0" fill="#29a600" stroke="#29a600" stroke-width="1.1" stroke-linejoin="round"/><polygon points="1312.7,224.0 6934.9,-12239.3 6803.9,-12323.9 1309.4,221.9" fill="#24a600" stroke="#24a600" stroke-width="1.1" stroke-linejoin="round"/><polygon points="1309.4,221.9 6803.9,-12323.9 6672.9,-12408.5 1306.1,219.8" fill="#20a600" stroke="#20a600" stroke-width="1.1" stroke-linejoin="round"/><polygon points="1306.1,219.8 6672.9,-12408.5 6541.9,-12493.1 1302.8,217.7" fill="#1ba600" stroke="#1ba600" stroke-width="1.1" stroke-linejoin="round"/><polygon points="1302.8,217.7 6541.9,-12493.1 6410.9,-12577.7 1299.6,215.6" fill="#17a600" stroke="#17a600" stroke-width="1.1" stroke-linejoin="round"/><polygon points="1299.6,215.6 6410.9,-12577.7 6279.9,-12662.3 1296.3,213.5" fill="#12a600" stroke="#12a600" stroke-width="1.1" stroke-linejoin="round"/><polygon points="1296.3,213.5 6279.9,-12662.3 6148.9,-12746.9 1293.0,211.4" fill="#0ea600" stroke="#0ea600" stroke-width="1.1" stroke-linejoin="round"/><polygon points="1293.0,211.4 6148.9,-12746.9 6017.9,-12831.5 1289.7,209.2" fill="#0aa600" stroke="#0aa600" stroke-width="1.1" stroke-linejoin="round"/><polygon points="1289.7,209.2 6017.9,-12831.5 5886.9,-12916.1 1286.5,207.1" fill="#06a600" stroke="#06a600" stroke-width="1.1" stroke-linejoin="round"/><polygon points="1286.5,207.1 5886.9,-12916.1 5755.9,-13000.7 1283.2,205.0" fill="#02a600" stroke="#02a600" stroke-width="1.1" stroke-linejoin="round"/></g><g><polygon points="1292.67,375.79 1545.19,374.22 1543.01,372.81" fill="#ff0300" stroke="#ff0300" stroke-width="1.1" stroke-linejoin="round"/><polygon points="1292.67,375.79 1543.01,372.81 1540.83,371.40" fill="#ff0400" stroke="#ff0400" stroke-width="1.1" stroke-linejoin="round"/><polygon points="1292.67,375.79 1540.83,371.40 1538.64,369.99" fill="#ff0600" stroke="#ff0600" stroke-width="1.1" stroke-linejoin="round"/><polygon points="1292.67,375.79 1538.64,369.99 1536.46,368.58" fill="#ff0800" stroke="#ff0800" stroke-width="1.1" stroke-linejoin="round"/><polygon points="1292.67,375.79 1536.46,368.58 1534.28,367.17" fill="#ff0900" stroke="#ff0900" stroke-width="1.1" stroke-linejoin="round"/><polygon points="1292.67,375.79 1534.28,367.17 1532.09,365.76" fill="#ff0b00" stroke="#ff0b00" stroke-width="1.1" stroke-linejoin="round"/><polygon points="1292.67,375.79 1532.09,365.76 1529.91,364.35" fill="#ff0d00" stroke="#ff0d00" stroke-width="1.1" stroke-linejoin="round"/><polygon points="1292.67,375.79 1529.91,364.35 1527.73,362.94" fill="#ff0e00" stroke="#ff0e00" stroke-width="1.1" stroke-linejoin="round"/><polygon points="1292.67,375.79 1527.73,362.94 1525.54,361.53" fill="#ff1000" stroke="#ff1000" stroke-width="1.1" stroke-linejoin="round"/><polygon points="1292.67,375.79 1525.54,361.53 1523.36,360.12" fill="#ff1200" stroke="#ff1200" stroke-width="1.1" stroke-linejoin="round"/><polygon points="1292.67,375.79 1523.36,360.12 1521.18,358.71" fill="#ff1300" stroke="#ff1300" stroke-width="1.1" stroke-linejoin="round"/><polygon points="1292.67,375.79 1521.18,358.71 1518.99,357.30" fill="#ff1500" stroke="#ff1500" stroke-width="1.1" stroke-linejoin="round"/><polygon points="1292.67,375.79 1518.99,357.30 1516.81,355.89" fill="#ff1700" stroke="#ff1700" stroke-width="1.1" stroke-linejoin="round"/><polygon points="1292.67,375.79 1516.81,355.89 1514.63,354.48" fill="#ff1800" stroke="#ff1800" stroke-width="1.1" stroke-linejoin="round"/><polygon points="1292.67,375.79 1514.63,354.48 1512.44,353.07" fill="#ff1a00" stroke="#ff1a00" stroke-width="1.1" stroke-linejoin="round"/><polygon points="1292.67,375.79 1512.44,353.07 1510.26,351.66" fill="#ff1c00" stroke="#ff1c00" stroke-width="1.1" stroke-linejoin="round"/><polygon points="1292.67,375.79 1510.26,351.66 1508.08,350.25" fill="#ff1e00" stroke="#ff1e00" stroke-width="1.1" stroke-linejoin="round"/><polygon points="1292.67,375.79 1508.08,350.25 1505.89,348.84" fill="#ff2000" stroke="#ff2000" stroke-width="1.1" stroke-linejoin="round"/><polygon points="1292.67,375.79 1505.89,348.84 1503.71,347.43" fill="#ff2100" stroke="#ff2100" stroke-width="1.1" stroke-linejoin="round"/><polygon points="1292.67,375.79 1503.71,347.43 1501.53,346.02" fill="#ff2300" stroke="#ff2300" stroke-width="1.1" stroke-linejoin="round"/><polygon points="1292.67,375.79 1501.53,346.02 1499.34,344.61" fill="#ff2500" stroke="#ff2500" stroke-width="1.1" stroke-linejoin="round"/><polygon points="1292.67,375.79 1499.34,344.61 1497.16,343.20" fill="#ff2700" stroke="#ff2700" stroke-width="1.1" stroke-linejoin="round"/><polygon points="1292.67,375.79 1497.16,343.20 1494.98,341.79" fill="#ff2900" stroke="#ff2900" stroke-width="1.1" stroke-linejoin="round"/><polygon points="1292.67,375.79 1494.98,341.79 1492.79,340.37" fill="#ff2b00" stroke="#ff2b00" stroke-width="1.1" stroke-linejoin="round"/><polygon points="1292.67,375.79 1492.79,340.37 1490.61,338.96" fill="#ff2d00" stroke="#ff2d00" stroke-width="1.1" stroke-linejoin="round"/><polygon points="1292.67,375.79 1490.61,338.96 1488.43,337.55" fill="#ff2f00" stroke="#ff2f00" stroke-width="1.1" stroke-linejoin="round"/><polygon points="1292.67,375.79 1488.43,337.55 1486.24,336.14" fill="#ff3100" stroke="#ff3100" stroke-width="1.1" stroke-linejoin="round"/><polygon points="1292.67,375.79 1486.24,336.14 1484.06,334.73" fill="#ff3300" stroke="#ff3300" stroke-width="1.1" stroke-linejoin="round"/><polygon points="1292.67,375.79 1484.06,334.73 1481.88,333.32" fill="#ff3500" stroke="#ff3500" stroke-width="1.1" stroke-linejoin="round"/><polygon points="1292.67,375.79 1481.88,333.32 1479.69,331.91" fill="#ff3700" stroke="#ff3700" stroke-width="1.1" stroke-linejoin="round"/><polygon points="1292.67,375.79 1479.69,331.91 1477.51,330.50" fill="#ff3a00" stroke="#ff3a00" stroke-width="1.1" stroke-linejoin="round"/><polygon points="1292.67,375.79 1477.51,330.50 1475.33,329.09" fill="#ff3c00" stroke="#ff3c00" stroke-width="1.1" stroke-linejoin="round"/><polygon points="1292.67,375.79 1475.33,329.09 1473.14,327.68" fill="#ff3e00" stroke="#ff3e00" stroke-width="1.1" stroke-linejoin="round"/><polygon points="1292.67,375.79 1473.14,327.68 1470.96,326.27" fill="#ff4100" stroke="#ff4100" stroke-width="1.1" stroke-linejoin="round"/><polygon points="1292.67,375.79 1470.96,326.27 1468.77,324.86" fill="#ff4300" stroke="#ff4300" stroke-width="1.1" stroke-linejoin="round"/><polygon points="1292.67,375.79 1468.77,324.86 1466.59,323.45" fill="#ff4500" stroke="#ff4500" stroke-width="1.1" stroke-linejoin="round"/><polygon points="1292.67,375.79 1466.59,323.45 1464.41,322.04" fill="#ff4800" stroke="#ff4800" stroke-width="1.1" stroke-linejoin="round"/><polygon points="1292.67,375.79 1464.41,322.04 1462.22,320.63" fill="#ff4a00" stroke="#ff4a00" stroke-width="1.1" stroke-linejoin="round"/><polygon points="1292.67,375.79 1462.22,320.63 1460.04,319.22" fill="#ff4d00" stroke="#ff4d00" stroke-width="1.1" stroke-linejoin="round"/><polygon points="1292.67,375.79 1460.04,319.22 1457.86,317.81" fill="#ff4f00" stroke="#ff4f00" stroke-width="1.1" stroke-linejoin="round"/><polygon points="1292.67,375.79 1457.86,317.81 1455.67,316.40" fill="#ff5200" stroke="#ff5200" stroke-width="1.1" stroke-linejoin="round"/><polygon points="1292.67,375.79 1455.67,316.40 1453.49,314.99" fill="#ff5500" stroke="#ff5500" stroke-width="1.1" stroke-linejoin="round"/><polygon points="1292.67,375.79 1453.49,314.99 1451.31,313.58" fill="#ff5800" stroke="#ff5800" stroke-width="1.1" stroke-linejoin="round"/><polygon points="1292.67,375.79 1451.31,313.58 1449.12,312.17" fill="#ff5a00" stroke="#ff5a00" stroke-width="1.1" stroke-linejoin="round"/><polygon points="1292.67,375.79 1449.12,312.17 1446.94,310.76" fill="#ff5d00" stroke="#ff5d00" stroke-width="1.1" stroke-linejoin="round"/><polygon points="1292.67,375.79 1446.94,310.76 1444.76,309.35" fill="#ff6000" stroke="#ff6000" stroke-width="1.1" stroke-linejoin="round"/><polygon points="1292.67,375.79 1444.76,309.35 1442.57,307.94" fill="#ff6300" stroke="#ff6300" stroke-width="1.1" stroke-linejoin="round"/><polygon points="1292.67,375.79 1442.57,307.94 1440.39,306.53" fill="#ff6700" stroke="#ff6700" stroke-width="1.1" stroke-linejoin="round"/><polygon points="1292.67,375.79 1440.39,306.53 1438.21,305.12" fill="#ff6a00" stroke="#ff6a00" stroke-width="1.1" stroke-linejoin="round"/><polygon points="1292.67,375.79 1438.21,305.12 1436.02,303.71" fill="#ff6d00" stroke="#ff6d00" stroke-width="1.1" stroke-linejoin="round"/><polygon points="1292.67,375.79 1436.02,303.71 1433.84,302.30" fill="#ff7000" stroke="#ff7000" stroke-width="1.1" stroke-linejoin="round"/><polygon points="1292.67,375.79 1433.84,302.30 1431.66,300.89" fill="#ff7400" stroke="#ff7400" stroke-width="1.1" stroke-linejoin="round"/><polygon points="1292.67,375.79 1431.66,300.89 1429.47,299.48" fill="#ff7700" stroke="#ff7700" stroke-width="1.1" stroke-linejoin="round"/><polygon points="1292.67,375.79 1429.47,299.48 1427.29,298.07" fill="#ff7b00" stroke="#ff7b00" stroke-width="1.1" stroke-linejoin="round"/><polygon points="1292.67,375.79 1427.29,298.07 1425.11,296.66" fill="#ff7f00" stroke="#ff7f00" stroke-width="1.1" stroke-linejoin="round"/><polygon points="1292.67,375.79 1425.11,296.66 1422.92,295.25" fill="#ff8300" stroke="#ff8300" stroke-width="1.1" stroke-linejoin="round"/><polygon points="1292.67,375.79 1422.92,295.25 1420.74,293.84" fill="#ff8600" stroke="#ff8600" stroke-width="1.1" stroke-linejoin="round"/><polygon points="1292.67,375.79 1420.74,293.84 1418.56,292.43" fill="#ff8b00" stroke="#ff8b00" stroke-width="1.1" stroke-linejoin="round"/><polygon points="1292.67,375.79 1418.56,292.43 1416.37,291.02" fill="#ff8f00" stroke="#ff8f00" stroke-width="1.1" stroke-linejoin="round"/><polygon points="1292.67,375.79 1416.37,291.02 1414.19,289.61" fill="#ff9300" stroke="#ff9300" stroke-width="1.1" stroke-linejoin="round"/><polygon points="1292.67,375.79 1414.19,289.61 1412.01,288.20" fill="#ff9700" stroke="#ff9700" stroke-width="1.1" stroke-linejoin="round"/><polygon points="1292.67,375.79 1412.01,288.20 1409.82,286.79" fill="#ff9c00" stroke="#ff9c00" stroke-width="1.1" stroke-linejoin="round"/><polygon points="1292.67,375.79 1409.82,286.79 1407.64,285.38" fill="#ffa100" stroke="#ffa100" stroke-width="1.1" stroke-linejoin="round"/><polygon points="1292.67,375.79 1407.64,285.38 1405.46,283.97" fill="#ffa500" stroke="#ffa500" stroke-width="1.1" stroke-linejoin="round"/><polygon points="1292.67,375.79 1405.46,283.97 1403.27,282.56" fill="#ffaa00" stroke="#ffaa00" stroke-width="1.1" stroke-linejoin="round"/><polygon points="1292.67,375.79 1403.27,282.56 1401.09,281.15" fill="#ffb000" stroke="#ffb000" stroke-width="1.1" stroke-linejoin="round"/><polygon points="1292.67,375.79 1401.09,281.15 1398.91,279.74" fill="#ffb500" stroke="#ffb500" stroke-width="1.1" stroke-linejoin="round"/><polygon points="1292.67,375.79 1398.91,279.74 1396.72,278.33" fill="#ffba00" stroke="#ffba00" stroke-width="1.1" stroke-linejoin="round"/><polygon points="1292.67,375.79 1396.72,278.33 1394.54,276.92" fill="#ffc000" stroke="#ffc000" stroke-width="1.1" stroke-linejoin="round"/><polygon points="1292.67,375.79 1394.54,276.92 1392.36,275.51" fill="#ffc600" stroke="#ffc600" stroke-width="1.1" stroke-linejoin="round"/><polygon points="1292.67,375.79 1392.36,275.51 1390.17,274.10" fill="#ffcc00" stroke="#ffcc00" stroke-width="1.1" stroke-linejoin="round"/><polygon points="1292.67,375.79 1390.17,274.10 1387.99,272.69" fill="#ffd300" stroke="#ffd300" stroke-width="1.1" stroke-linejoin="round"/><polygon points="1292.67,375.79 1387.99,272.69 1385.81,271.28" fill="#ffd900" stroke="#ffd900" stroke-width="1.1" stroke-linejoin="round"/><polygon points="1292.67,375.79 1385.81,271.28 1383.62,269.87" fill="#ffe000" stroke="#ffe000" stroke-width="1.1" stroke-linejoin="round"/><polygon points="1292.67,375.79 1383.62,269.87 1381.44,268.46" fill="#ffe700" stroke="#ffe700" stroke-width="1.1" stroke-linejoin="round"/><polygon points="1292.67,375.79 1381.44,268.46 1379.26,267.05" fill="#ffef00" stroke="#ffef00" stroke-width="1.1" stroke-linejoin="round"/><polygon points="1292.67,375.79 1379.26,267.05 1377.07,265.64" fill="#fff600" stroke="#fff600" stroke-width="1.1" stroke-linejoin="round"/><polygon points="1292.67,375.79 1377.07,265.64 1374.89,264.23" fill="#fffe00" stroke="#fffe00" stroke-width="1.1" stroke-linejoin="round"/><polygon points="1292.67,375.79 1374.89,264.23 1372.71,262.82" fill="#f7ff00" stroke="#f7ff00" stroke-width="1.1" stroke-linejoin="round"/><polygon points="1292.67,375.79 1372.71,262.82 1370.52,261.41" fill="#efff00" stroke="#efff00" stroke-width="1.1" stroke-linejoin="round"/><polygon points="1292.67,375.79 1370.52,261.41 1368.34,260.00" fill="#e8ff00" stroke="#e8ff00" stroke-width="1.1" stroke-linejoin="round"/><polygon points="1292.67,375.79 1368.34,260.00 1366.16,258.59" fill="#e0ff00" stroke="#e0ff00" stroke-width="1.1" stroke-linejoin="round"/><polygon points="1292.67,375.79 1366.16,258.59 1363.97,257.18" fill="#d8ff00" stroke="#d8ff00" stroke-width="1.1" stroke-linejoin="round"/><polygon points="1292.67,375.79 1363.97,257.18 1361.79,255.77" fill="#d1ff00" stroke="#d1ff00" stroke-width="1.1" stroke-linejoin="round"/><polygon points="1292.67,375.79 1361.79,255.77 1359.61,254.36" fill="#caff00" stroke="#caff00" stroke-width="1.1" stroke-linejoin="round"/><polygon points="1292.67,375.79 1359.61,254.36 1357.42,252.95" fill="#c3ff00" stroke="#c3ff00" stroke-width="1.1" stroke-linejoin="round"/><polygon points="1292.67,375.79 1357.42,252.95 1355.24,251.54" fill="#bcff00" stroke="#bcff00" stroke-width="1.1" stroke-linejoin="round"/><polygon points="1292.67,375.79 1355.24,251.54 1353.06,250.13" fill="#b5ff00" stroke="#b5ff00" stroke-width="1.1" stroke-linejoin="round"/><polygon points="1292.67,375.79 1353.06,250.13 1350.87,248.72" fill="#aeff00" stroke="#aeff00" stroke-width="1.1" stroke-linejoin="round"/><polygon points="1292.67,375.79 1350.87,248.72 1348.69,247.31" fill="#a7ff00" stroke="#a7ff00" stroke-width="1.1" stroke-linejoin="round"/><polygon points="1292.67,375.79 1348.69,247.31 1346.51,245.90" fill="#a1ff00" stroke="#a1ff00" stroke-width="1.1" stroke-linejoin="round"/><polygon points="1292.67,375.79 1346.51,245.90 1344.32,244.49" fill="#9bff00" stroke="#9bff00" stroke-width="1.1" stroke-linejoin="round"/><polygon points="1292.67,375.79 1344.32,244.49 1342.14,243.08" fill="#94ff00" stroke="#94ff00" stroke-width="1.1" stroke-linejoin="round"/><polygon points="1292.67,375.79 1342.14,243.08 1339.96,241.67" fill="#8eff00" stroke="#8eff00" stroke-width="1.1" stroke-linejoin="round"/><polygon points="1292.67,375.79 1339.96,241.67 1337.77,240.26" fill="#88ff00" stroke="#88ff00" stroke-width="1.1" stroke-linejoin="round"/><polygon points="1292.67,375.79 1337.77,240.26 1335.59,238.85" fill="#82ff00" stroke="#82ff00" stroke-width="1.1" stroke-linejoin="round"/><polygon points="1292.67,375.79 1335.59,238.85 1333.41,237.44" fill="#7cff00" stroke="#7cff00" stroke-width="1.1" stroke-linejoin="round"/><polygon points="1292.67,375.79 1333.41,237.44 1331.22,236.03" fill="#76ff00" stroke="#76ff00" stroke-width="1.1" stroke-linejoin="round"/><polygon points="1292.67,375.79 1331.22,236.03 1329.04,234.62" fill="#71ff00" stroke="#71ff00" stroke-width="1.1" stroke-linejoin="round"/><polygon points="1292.67,375.79 1329.04,234.62 1326.86,233.21" fill="#6bff00" stroke="#6bff00" stroke-width="1.1" stroke-linejoin="round"/><polygon points="1292.67,375.79 1326.86,233.21 1324.67,231.80" fill="#65ff00" stroke="#65ff00" stroke-width="1.1" stroke-linejoin="round"/><polygon points="1292.67,375.79 1324.67,231.80 1322.49,230.39" fill="#60ff00" stroke="#60ff00" stroke-width="1.1" stroke-linejoin="round"/><polygon points="1292.67,375.79 1322.49,230.39 1320.31,228.98" fill="#5bff00" stroke="#5bff00" stroke-width="1.1" stroke-linejoin="round"/><polygon points="1292.67,375.79 1320.31,228.98 1318.12,227.57" fill="#55ff00" stroke="#55ff00" stroke-width="1.1" stroke-linejoin="round"/><polygon points="1292.67,375.79 1318.12,227.57 1315.94,226.16" fill="#50ff00" stroke="#50ff00" stroke-width="1.1" stroke-linejoin="round"/><polygon points="1292.67,375.79 1315.94,226.16 1313.76,224.75" fill="#4bff00" stroke="#4bff00" stroke-width="1.1" stroke-linejoin="round"/><polygon points="1292.67,375.79 1313.76,224.75 1311.57,223.34" fill="#45ff00" stroke="#45ff00" stroke-width="1.1" stroke-linejoin="round"/><polygon points="1292.67,375.79 1311.57,223.34 1309.39,221.93" fill="#40ff00" stroke="#40ff00" stroke-width="1.1" stroke-linejoin="round"/><polygon points="1292.67,375.79 1309.39,221.93 1307.21,220.52" fill="#3bff00" stroke="#3bff00" stroke-width="1.1" stroke-linejoin="round"/><polygon points="1292.67,375.79 1307.21,220.52 1305.02,219.11" fill="#36ff00" stroke="#36ff00" stroke-width="1.1" stroke-linejoin="round"/><polygon points="1292.67,375.79 1305.02,219.11 1302.84,217.70" fill="#31ff00" stroke="#31ff00" stroke-width="1.1" stroke-linejoin="round"/><polygon points="1292.67,375.79 1302.84,217.70 1300.66,216.29" fill="#2cff00" stroke="#2cff00" stroke-width="1.1" stroke-linejoin="round"/><polygon points="1292.67,375.79 1300.66,216.29 1298.47,214.88" fill="#27ff00" stroke="#27ff00" stroke-width="1.1" stroke-linejoin="round"/><polygon points="1292.67,375.79 1298.47,214.88 1296.29,213.47" fill="#22ff00" stroke="#22ff00" stroke-width="1.1" stroke-linejoin="round"/><polygon points="1292.67,375.79 1296.29,213.47 1294.11,212.06" fill="#1dff00" stroke="#1dff00" stroke-width="1.1" stroke-linejoin="round"/><polygon points="1292.67,375.79 1294.11,212.06 1291.92,210.65" fill="#18ff00" stroke="#18ff00" stroke-width="1.1" stroke-linejoin="round"/><polygon points="1292.67,375.79 1291.92,210.65 1289.74,209.24" fill="#13ff00" stroke="#13ff00" stroke-width="1.1" stroke-linejoin="round"/><polygon points="1292.67,375.79 1289.74,209.24 1287.56,207.83" fill="#0eff00" stroke="#0eff00" stroke-width="1.1" stroke-linejoin="round"/><polygon points="1292.67,375.79 1287.56,207.83 1285.37,206.42" fill="#09ff00" stroke="#09ff00" stroke-width="1.1" stroke-linejoin="round"/><polygon points="1292.67,375.79 1285.37,206.42 1283.19,205.01" fill="#04ff00" stroke="#04ff00" stroke-width="1.1" stroke-linejoin="round"/><polygon points="1292.67,375.79 1283.19,205.01 1282.23,207.83" fill="#00ff01" stroke="#00ff01" stroke-width="1.1" stroke-linejoin="round"/><polygon points="1292.67,375.79 1282.23,207.83 1281.28,210.65" fill="#00ff04" stroke="#00ff04" stroke-width="1.1" stroke-linejoin="round"/><polygon points="1292.67,375.79 1281.28,210.65 1280.32,213.47" fill="#01ff07" stroke="#01ff07" stroke-width="1.1" stroke-linejoin="round"/><polygon points="1292.67,375.79 1280.32,213.47 1279.37,216.29" fill="#01ff0a" stroke="#01ff0a" stroke-width="1.1" stroke-linejoin="round"/><polygon points="1292.67,375.79 1279.37,216.29 1278.41,219.12" fill="#01ff0d" stroke="#01ff0d" stroke-width="1.1" stroke-linejoin="round"/><polygon points="1292.67,375.79 1278.41,219.12 1277.45,221.94" fill="#01ff10" stroke="#01ff10" stroke-width="1.1" stroke-linejoin="round"/><polygon points="1292.67,375.79 1277.45,221.94 1276.50,224.76" fill="#01ff13" stroke="#01ff13" stroke-width="1.1" stroke-linejoin="round"/><polygon points="1292.67,375.79 1276.50,224.76 1275.54,227.58" fill="#01ff16" stroke="#01ff16" stroke-width="1.1" stroke-linejoin="round"/><polygon points="1292.67,375.79 1275.54,227.58 1274.59,230.40" fill="#01ff19" stroke="#01ff19" stroke-width="1.1" stroke-linejoin="round"/><polygon points="1292.67,375.79 1274.59,230.40 1273.63,233.22" fill="#01ff1b" stroke="#01ff1b" stroke-width="1.1" stroke-linejoin="round"/><polygon points="1292.67,375.79 1273.63,233.22 1272.68,236.05" fill="#01ff1e" stroke="#01ff1e" stroke-width="1.1" stroke-linejoin="round"/><polygon points="1292.67,375.79 1272.68,236.05 1271.72,238.87" fill="#01ff21" stroke="#01ff21" stroke-width="1.1" stroke-linejoin="round"/><polygon points="1292.67,375.79 1271.72,238.87 1270.76,241.69" fill="#01ff24" stroke="#01ff24" stroke-width="1.1" stroke-linejoin="round"/><polygon points="1292.67,375.79 1270.76,241.69 1269.81,244.51" fill="#01ff27" stroke="#01ff27" stroke-width="1.1" stroke-linejoin="round"/><polygon points="1292.67,375.79 1269.81,244.51 1268.85,247.33" fill="#01ff2a" stroke="#01ff2a" stroke-width="1.1" stroke-linejoin="round"/><polygon points="1292.67,375.79 1268.85,247.33 1267.90,250.15" fill="#01ff2d" stroke="#01ff2d" stroke-width="1.1" stroke-linejoin="round"/><polygon points="1292.67,375.79 1267.90,250.15 1266.94,252.98" fill="#01ff30" stroke="#01ff30" stroke-width="1.1" stroke-linejoin="round"/><polygon points="1292.67,375.79 1266.94,252.98 1265.99,255.80" fill="#01ff33" stroke="#01ff33" stroke-width="1.1" stroke-linejoin="round"/><polygon points="1292.67,375.79 1265.99,255.80 1265.03,258.62" fill="#01ff36" stroke="#01ff36" stroke-width="1.1" stroke-linejoin="round"/><polygon points="1292.67,375.79 1265.03,258.62 1264.07,261.44" fill="#01ff39" stroke="#01ff39" stroke-width="1.1" stroke-linejoin="round"/><polygon points="1292.67,375.79 1264.07,261.44 1263.12,264.26" fill="#01ff3d" stroke="#01ff3d" stroke-width="1.1" stroke-linejoin="round"/><polygon points="1292.67,375.79 1263.12,264.26 1262.16,267.09" fill="#01ff40" stroke="#01ff40" stroke-width="1.1" stroke-linejoin="round"/><polygon points="1292.67,375.79 1262.16,267.09 1261.21,269.91" fill="#02ff43" stroke="#02ff43" stroke-width="1.1" stroke-linejoin="round"/><polygon points="1292.67,375.79 1261.21,269.91 1260.25,272.73" fill="#02ff47" stroke="#02ff47" stroke-width="1.1" stroke-linejoin="round"/><polygon points="1292.67,375.79 1260.25,272.73 1259.30,275.55" fill="#02ff4a" stroke="#02ff4a" stroke-width="1.1" stroke-linejoin="round"/><polygon points="1292.67,375.79 1259.30,275.55 1258.34,278.37" fill="#02ff4d" stroke="#02ff4d" stroke-width="1.1" stroke-linejoin="round"/><polygon points="1292.67,375.79 1258.34,278.37 1257.38,281.19" fill="#02ff51" stroke="#02ff51" stroke-width="1.1" stroke-linejoin="round"/><polygon points="1292.67,375.79 1257.38,281.19 1256.43,284.02" fill="#02ff54" stroke="#02ff54" stroke-width="1.1" stroke-linejoin="round"/><polygon points="1292.67,375.79 1256.43,284.02 1255.47,286.84" fill="#02ff58" stroke="#02ff58" stroke-width="1.1" stroke-linejoin="round"/><polygon points="1292.67,375.79 1255.47,286.84 1254.52,289.66" fill="#02ff5c" stroke="#02ff5c" stroke-width="1.1" stroke-linejoin="round"/><polygon points="1292.67,375.79 1254.52,289.66 1253.56,292.48" fill="#02ff5f" stroke="#02ff5f" stroke-width="1.1" stroke-linejoin="round"/><polygon points="1292.67,375.79 1253.56,292.48 1252.61,295.30" fill="#02ff63" stroke="#02ff63" stroke-width="1.1" stroke-linejoin="round"/><polygon points="1292.67,375.79 1252.61,295.30 1251.65,298.12" fill="#02ff67" stroke="#02ff67" stroke-width="1.1" stroke-linejoin="round"/><polygon points="1292.67,375.79 1251.65,298.12 1250.69,300.95" fill="#02ff6b" stroke="#02ff6b" stroke-width="1.1" stroke-linejoin="round"/><polygon points="1292.67,375.79 1250.69,300.95 1249.74,303.77" fill="#02ff6f" stroke="#02ff6f" stroke-width="1.1" stroke-linejoin="round"/><polygon points="1292.67,375.79 1249.74,303.77 1248.78,306.59" fill="#02ff73" stroke="#02ff73" stroke-width="1.1" stroke-linejoin="round"/><polygon points="1292.67,375.79 1248.78,306.59 1247.83,309.41" fill="#02ff77" stroke="#02ff77" stroke-width="1.1" stroke-linejoin="round"/><polygon points="1292.67,375.79 1247.83,309.41 1246.87,312.23" fill="#03ff7c" stroke="#03ff7c" stroke-width="1.1" stroke-linejoin="round"/><polygon points="1292.67,375.79 1246.87,312.23 1245.92,315.05" fill="#03ff80" stroke="#03ff80" stroke-width="1.1" stroke-linejoin="round"/><polygon points="1292.67,375.79 1245.92,315.05 1244.96,317.88" fill="#03ff84" stroke="#03ff84" stroke-width="1.1" stroke-linejoin="round"/><polygon points="1292.67,375.79 1244.96,317.88 1244.00,320.70" fill="#03ff89" stroke="#03ff89" stroke-width="1.1" stroke-linejoin="round"/><polygon points="1292.67,375.79 1244.00,320.70 1243.05,323.52" fill="#03ff8e" stroke="#03ff8e" stroke-width="1.1" stroke-linejoin="round"/><polygon points="1292.67,375.79 1243.05,323.52 1242.09,326.34" fill="#03ff92" stroke="#03ff92" stroke-width="1.1" stroke-linejoin="round"/><polygon points="1292.67,375.79 1242.09,326.34 1241.14,329.16" fill="#03ff97" stroke="#03ff97" stroke-width="1.1" stroke-linejoin="round"/><polygon points="1292.67,375.79 1241.14,329.16 1240.18,331.99" fill="#03ff9c" stroke="#03ff9c" stroke-width="1.1" stroke-linejoin="round"/><polygon points="1292.67,375.79 1240.18,331.99 1239.23,334.81" fill="#03ffa1" stroke="#03ffa1" stroke-width="1.1" stroke-linejoin="round"/><polygon points="1292.67,375.79 1239.23,334.81 1238.27,337.63" fill="#03ffa6" stroke="#03ffa6" stroke-width="1.1" stroke-linejoin="round"/><polygon points="1292.67,375.79 1238.27,337.63 1237.31,340.45" fill="#03ffac" stroke="#03ffac" stroke-width="1.1" stroke-linejoin="round"/><polygon points="1292.67,375.79 1237.31,340.45 1236.36,343.27" fill="#04ffb1" stroke="#04ffb1" stroke-width="1.1" stroke-linejoin="round"/><polygon points="1292.67,375.79 1236.36,343.27 1235.40,346.09" fill="#04ffb7" stroke="#04ffb7" stroke-width="1.1" stroke-linejoin="round"/><polygon points="1292.67,375.79 1235.40,346.09 1234.45,348.92" fill="#04ffbc" stroke="#04ffbc" stroke-width="1.1" stroke-linejoin="round"/><polygon points="1292.67,375.79 1234.45,348.92 1233.49,351.74" fill="#04ffc2" stroke="#04ffc2" stroke-width="1.1" stroke-linejoin="round"/><polygon points="1292.67,375.79 1233.49,351.74 1232.54,354.56" fill="#04ffc8" stroke="#04ffc8" stroke-width="1.1" stroke-linejoin="round"/><polygon points="1292.67,375.79 1232.54,354.56 1231.58,357.38" fill="#04ffce" stroke="#04ffce" stroke-width="1.1" stroke-linejoin="round"/><polygon points="1292.67,375.79 1231.58,357.38 1230.62,360.20" fill="#04ffd5" stroke="#04ffd5" stroke-width="1.1" stroke-linejoin="round"/><polygon points="1292.67,375.79 1230.62,360.20 1229.67,363.02" fill="#04ffdb" stroke="#04ffdb" stroke-width="1.1" stroke-linejoin="round"/><polygon points="1292.67,375.79 1229.67,363.02 1228.71,365.85" fill="#04ffe2" stroke="#04ffe2" stroke-width="1.1" stroke-linejoin="round"/><polygon points="1292.67,375.79 1228.71,365.85 1227.76,368.67" fill="#04ffe9" stroke="#04ffe9" stroke-width="1.1" stroke-linejoin="round"/><polygon points="1292.67,375.79 1227.76,368.67 1226.80,371.49" fill="#05fff0" stroke="#05fff0" stroke-width="1.1" stroke-linejoin="round"/><polygon points="1292.67,375.79 1226.80,371.49 1225.85,374.31" fill="#05fff7" stroke="#05fff7" stroke-width="1.1" stroke-linejoin="round"/><polygon points="1292.67,375.79 1225.85,374.31 1224.89,377.13" fill="#05fffe" stroke="#05fffe" stroke-width="1.1" stroke-linejoin="round"/><polygon points="1292.67,375.79 1224.89,377.13 1223.93,379.95" fill="#05f8ff" stroke="#05f8ff" stroke-width="1.1" stroke-linejoin="round"/><polygon points="1292.67,375.79 1223.93,379.95 1222.98,382.78" fill="#05f1ff" stroke="#05f1ff" stroke-width="1.1" stroke-linejoin="round"/><polygon points="1292.67,375.79 1222.98,382.78 1222.02,385.60" fill="#05eaff" stroke="#05eaff" stroke-width="1.1" stroke-linejoin="round"/><polygon points="1292.67,375.79 1222.02,385.60 1221.07,388.42" fill="#05e3ff" stroke="#05e3ff" stroke-width="1.1" stroke-linejoin="round"/><polygon points="1292.67,375.79 1221.07,388.42 1220.11,391.24" fill="#05dcff" stroke="#05dcff" stroke-width="1.1" stroke-linejoin="round"/><polygon points="1292.67,375.79 1220.11,391.24 1219.16,394.06" fill="#05d6ff" stroke="#05d6ff" stroke-width="1.1" stroke-linejoin="round"/><polygon points="1292.67,375.79 1219.16,394.06 1218.20,396.88" fill="#05cfff" stroke="#05cfff" stroke-width="1.1" stroke-linejoin="round"/><polygon points="1292.67,375.79 1218.20,396.88 1217.24,399.71" fill="#05c9ff" stroke="#05c9ff" stroke-width="1.1" stroke-linejoin="round"/><polygon points="1292.67,375.79 1217.24,399.71 1216.29,402.53" fill="#05c3ff" stroke="#05c3ff" stroke-width="1.1" stroke-linejoin="round"/><polygon points="1292.67,375.79 1216.29,402.53 1215.33,405.35" fill="#05bdff" stroke="#05bdff" stroke-width="1.1" stroke-linejoin="round"/><polygon points="1292.67,375.79 1215.33,405.35 1214.38,408.17" fill="#05b7ff" stroke="#05b7ff" stroke-width="1.1" stroke-linejoin="round"/><polygon points="1292.67,375.79 1214.38,408.17 1213.42,410.99" fill="#05b2ff" stroke="#05b2ff" stroke-width="1.1" stroke-linejoin="round"/><polygon points="1292.67,375.79 1213.42,410.99 1212.47,413.82" fill="#05acff" stroke="#05acff" stroke-width="1.1" stroke-linejoin="round"/><polygon points="1292.67,375.79 1212.47,413.82 1211.51,416.64" fill="#05a7ff" stroke="#05a7ff" stroke-width="1.1" stroke-linejoin="round"/><polygon points="1292.67,375.79 1211.51,416.64 1210.55,419.46" fill="#05a2ff" stroke="#05a2ff" stroke-width="1.1" stroke-linejoin="round"/><polygon points="1292.67,375.79 1210.55,419.46 1209.60,422.28" fill="#059dff" stroke="#059dff" stroke-width="1.1" stroke-linejoin="round"/><polygon points="1292.67,375.79 1209.60,422.28 1208.64,425.10" fill="#0598ff" stroke="#0598ff" stroke-width="1.1" stroke-linejoin="round"/><polygon points="1292.67,375.79 1208.64,425.10 1207.69,427.92" fill="#0593ff" stroke="#0593ff" stroke-width="1.1" stroke-linejoin="round"/><polygon points="1292.67,375.79 1207.69,427.92 1206.73,430.75" fill="#058eff" stroke="#058eff" stroke-width="1.1" stroke-linejoin="round"/><polygon points="1292.67,375.79 1206.73,430.75 1205.78,433.57" fill="#0589ff" stroke="#0589ff" stroke-width="1.1" stroke-linejoin="round"/><polygon points="1292.67,375.79 1205.78,433.57 1204.82,436.39" fill="#0585ff" stroke="#0585ff" stroke-width="1.1" stroke-linejoin="round"/><polygon points="1292.67,375.79 1204.82,436.39 1203.86,439.21" fill="#0580ff" stroke="#0580ff" stroke-width="1.1" stroke-linejoin="round"/><polygon points="1292.67,375.79 1203.86,439.21 1202.91,442.03" fill="#057cff" stroke="#057cff" stroke-width="1.1" stroke-linejoin="round"/><polygon points="1292.67,375.79 1202.91,442.03 1201.95,444.85" fill="#0577ff" stroke="#0577ff" stroke-width="1.1" stroke-linejoin="round"/><polygon points="1292.67,375.79 1201.95,444.85 1201.00,447.68" fill="#0573ff" stroke="#0573ff" stroke-width="1.1" stroke-linejoin="round"/><polygon points="1292.67,375.79 1201.00,447.68 1200.04,450.50" fill="#056fff" stroke="#056fff" stroke-width="1.1" stroke-linejoin="round"/><polygon points="1292.67,375.79 1200.04,450.50 1199.09,453.32" fill="#056bff" stroke="#056bff" stroke-width="1.1" stroke-linejoin="round"/><polygon points="1292.67,375.79 1199.09,453.32 1198.13,456.14" fill="#0567ff" stroke="#0567ff" stroke-width="1.1" stroke-linejoin="round"/><polygon points="1292.67,375.79 1198.13,456.14 1197.17,458.96" fill="#0563ff" stroke="#0563ff" stroke-width="1.1" stroke-linejoin="round"/><polygon points="1292.67,375.79 1197.17,458.96 1196.22,461.78" fill="#055fff" stroke="#055fff" stroke-width="1.1" stroke-linejoin="round"/><polygon points="1292.67,375.79 1196.22,461.78 1195.26,464.61" fill="#055bff" stroke="#055bff" stroke-width="1.1" stroke-linejoin="round"/><polygon points="1292.67,375.79 1195.26,464.61 1194.31,467.43" fill="#0558ff" stroke="#0558ff" stroke-width="1.1" stroke-linejoin="round"/><polygon points="1292.67,375.79 1194.31,467.43 1193.35,470.25" fill="#0554ff" stroke="#0554ff" stroke-width="1.1" stroke-linejoin="round"/><polygon points="1292.67,375.79 1193.35,470.25 1192.40,473.07" fill="#0550ff" stroke="#0550ff" stroke-width="1.1" stroke-linejoin="round"/><polygon points="1292.67,375.79 1192.40,473.07 1191.44,475.89" fill="#054dff" stroke="#054dff" stroke-width="1.1" stroke-linejoin="round"/><polygon points="1292.67,375.79 1191.44,475.89 1190.48,478.72" fill="#0549ff" stroke="#0549ff" stroke-width="1.1" stroke-linejoin="round"/><polygon points="1292.67,375.79 1190.48,478.72 1189.53,481.54" fill="#0546ff" stroke="#0546ff" stroke-width="1.1" stroke-linejoin="round"/><polygon points="1292.67,375.79 1189.53,481.54 1188.57,484.36" fill="#0543ff" stroke="#0543ff" stroke-width="1.1" stroke-linejoin="round"/><polygon points="1292.67,375.79 1188.57,484.36 1187.62,487.18" fill="#053fff" stroke="#053fff" stroke-width="1.1" stroke-linejoin="round"/><polygon points="1292.67,375.79 1187.62,487.18 1186.66,490.00" fill="#053cff" stroke="#053cff" stroke-width="1.1" stroke-linejoin="round"/><polygon points="1292.67,375.79 1186.66,490.00 1185.71,492.82" fill="#0539ff" stroke="#0539ff" stroke-width="1.1" stroke-linejoin="round"/><polygon points="1292.67,375.79 1185.71,492.82 1184.75,495.65" fill="#0535ff" stroke="#0535ff" stroke-width="1.1" stroke-linejoin="round"/><polygon points="1292.67,375.79 1184.75,495.65 1183.79,498.47" fill="#0532ff" stroke="#0532ff" stroke-width="1.1" stroke-linejoin="round"/><polygon points="1292.67,375.79 1183.79,498.47 1182.84,501.29" fill="#052fff" stroke="#052fff" stroke-width="1.1" stroke-linejoin="round"/><polygon points="1292.67,375.79 1182.84,501.29 1181.88,504.11" fill="#052cff" stroke="#052cff" stroke-width="1.1" stroke-linejoin="round"/><polygon points="1292.67,375.79 1181.88,504.11 1180.93,506.93" fill="#0529ff" stroke="#0529ff" stroke-width="1.1" stroke-linejoin="round"/><polygon points="1292.67,375.79 1180.93,506.93 1179.97,509.75" fill="#0526ff" stroke="#0526ff" stroke-width="1.1" stroke-linejoin="round"/><polygon points="1292.67,375.79 1179.97,509.75 1179.02,512.58" fill="#0523ff" stroke="#0523ff" stroke-width="1.1" stroke-linejoin="round"/><polygon points="1292.67,375.79 1179.02,512.58 1178.06,515.40" fill="#0520ff" stroke="#0520ff" stroke-width="1.1" stroke-linejoin="round"/><polygon points="1292.67,375.79 1178.06,515.40 1177.10,518.22" fill="#051dff" stroke="#051dff" stroke-width="1.1" stroke-linejoin="round"/><polygon points="1292.67,375.79 1177.10,518.22 1176.15,521.04" fill="#051aff" stroke="#051aff" stroke-width="1.1" stroke-linejoin="round"/><polygon points="1292.67,375.79 1176.15,521.04 1175.19,523.86" fill="#0517ff" stroke="#0517ff" stroke-width="1.1" stroke-linejoin="round"/><polygon points="1292.67,375.79 1175.19,523.86 1174.24,526.68" fill="#0514ff" stroke="#0514ff" stroke-width="1.1" stroke-linejoin="round"/><polygon points="1292.67,375.79 1174.24,526.68 1173.28,529.51" fill="#0511ff" stroke="#0511ff" stroke-width="1.1" stroke-linejoin="round"/><polygon points="1292.67,375.79 1173.28,529.51 1172.33,532.33" fill="#050eff" stroke="#050eff" stroke-width="1.1" stroke-linejoin="round"/><polygon points="1292.67,375.79 1172.33,532.33 1171.37,535.15" fill="#050bff" stroke="#050bff" stroke-width="1.1" stroke-linejoin="round"/><polygon points="1292.67,375.79 1171.37,535.15 1170.41,537.97" fill="#0508ff" stroke="#0508ff" stroke-width="1.1" stroke-linejoin="round"/><polygon points="1292.67,375.79 1170.41,537.97 1169.46,540.79" fill="#0505ff" stroke="#0505ff" stroke-width="1.1" stroke-linejoin="round"/><polygon points="1292.67,375.79 1169.46,540.79 1168.50,543.61" fill="#0502ff" stroke="#0502ff" stroke-width="1.1" stroke-linejoin="round"/><polygon points="1292.67,375.79 1168.50,543.61 1171.64,542.20" fill="#0700ff" stroke="#0700ff" stroke-width="1.1" stroke-linejoin="round"/><polygon points="1292.67,375.79 1171.64,542.20 1174.78,540.79" fill="#0d00ff" stroke="#0d00ff" stroke-width="1.1" stroke-linejoin="round"/><polygon points="1292.67,375.79 1174.78,540.79 1177.92,539.38" fill="#1200ff" stroke="#1200ff" stroke-width="1.1" stroke-linejoin="round"/><polygon points="1292.67,375.79 1177.92,539.38 1181.06,537.97" fill="#1700ff" stroke="#1700ff" stroke-width="1.1" stroke-linejoin="round"/><polygon points="1292.67,375.79 1181.06,537.97 1184.20,536.56" fill="#1c00ff" stroke="#1c00ff" stroke-width="1.1" stroke-linejoin="round"/><polygon points="1292.67,375.79 1184.20,536.56 1187.34,535.14" fill="#2100ff" stroke="#2100ff" stroke-width="1.1" stroke-linejoin="round"/><polygon points="1292.67,375.79 1187.34,535.14 1190.48,533.73" fill="#2600ff" stroke="#2600ff" stroke-width="1.1" stroke-linejoin="round"/><polygon points="1292.67,375.79 1190.48,533.73 1193.62,532.32" fill="#2b00ff" stroke="#2b00ff" stroke-width="1.1" stroke-linejoin="round"/><polygon points="1292.67,375.79 1193.62,532.32 1196.76,530.91" fill="#3000ff" stroke="#3000ff" stroke-width="1.1" stroke-linejoin="round"/><polygon points="1292.67,375.79 1196.76,530.91 1199.89,529.50" fill="#3500ff" stroke="#3500ff" stroke-width="1.1" stroke-linejoin="round"/><polygon points="1292.67,375.79 1199.89,529.50 1203.03,528.09" fill="#3a00ff" stroke="#3a00ff" stroke-width="1.1" stroke-linejoin="round"/><polygon points="1292.67,375.79 1203.03,528.09 1206.17,526.68" fill="#3f00ff" stroke="#3f00ff" stroke-width="1.1" stroke-linejoin="round"/><polygon points="1292.67,375.79 1206.17,526.68 1209.31,525.26" fill="#4400ff" stroke="#4400ff" stroke-width="1.1" stroke-linejoin="round"/><polygon points="1292.67,375.79 1209.31,525.26 1212.45,523.85" fill="#4900ff" stroke="#4900ff" stroke-width="1.1" stroke-linejoin="round"/><polygon points="1292.67,375.79 1212.45,523.85 1215.59,522.44" fill="#4f00ff" stroke="#4f00ff" stroke-width="1.1" stroke-linejoin="round"/><polygon points="1292.67,375.79 1215.59,522.44 1218.73,521.03" fill="#5400ff" stroke="#5400ff" stroke-width="1.1" stroke-linejoin="round"/><polygon points="1292.67,375.79 1218.73,521.03 1221.87,519.62" fill="#5900ff" stroke="#5900ff" stroke-width="1.1" stroke-linejoin="round"/><polygon points="1292.67,375.79 1221.87,519.62 1225.01,518.21" fill="#5f00ff" stroke="#5f00ff" stroke-width="1.1" stroke-linejoin="round"/><polygon points="1292.67,375.79 1225.01,518.21 1228.15,516.79" fill="#6401ff" stroke="#6401ff" stroke-width="1.1" stroke-linejoin="round"/><polygon points="1292.67,375.79 1228.15,516.79 1231.28,515.38" fill="#6a01ff" stroke="#6a01ff" stroke-width="1.1" stroke-linejoin="round"/><polygon points="1292.67,375.79 1231.28,515.38 1234.42,513.97" fill="#6f01ff" stroke="#6f01ff" stroke-width="1.1" stroke-linejoin="round"/><polygon points="1292.67,375.79 1234.42,513.97 1237.56,512.56" fill="#7501ff" stroke="#7501ff" stroke-width="1.1" stroke-linejoin="round"/><polygon points="1292.67,375.79 1237.56,512.56 1240.70,511.15" fill="#7b01ff" stroke="#7b01ff" stroke-width="1.1" stroke-linejoin="round"/><polygon points="1292.67,375.79 1240.70,511.15 1243.84,509.74" fill="#8101ff" stroke="#8101ff" stroke-width="1.1" stroke-linejoin="round"/><polygon points="1292.67,375.79 1243.84,509.74 1246.98,508.32" fill="#8701ff" stroke="#8701ff" stroke-width="1.1" stroke-linejoin="round"/><polygon points="1292.67,375.79 1246.98,508.32 1250.12,506.91" fill="#8d01ff" stroke="#8d01ff" stroke-width="1.1" stroke-linejoin="round"/><polygon points="1292.67,375.79 1250.12,506.91 1253.26,505.50" fill="#9301ff" stroke="#9301ff" stroke-width="1.1" stroke-linejoin="round"/><polygon points="1292.67,375.79 1253.26,505.50 1256.40,504.09" fill="#9901ff" stroke="#9901ff" stroke-width="1.1" stroke-linejoin="round"/><polygon points="1292.67,375.79 1256.40,504.09 1259.54,502.68" fill="#a001ff" stroke="#a001ff" stroke-width="1.1" stroke-linejoin="round"/><polygon points="1292.67,375.79 1259.54,502.68 1262.68,501.27" fill="#a601ff" stroke="#a601ff" stroke-width="1.1" stroke-linejoin="round"/><polygon points="1292.67,375.79 1262.68,501.27 1265.81,499.85" fill="#ad01ff" stroke="#ad01ff" stroke-width="1.1" stroke-linejoin="round"/><polygon points="1292.67,375.79 1265.81,499.85 1268.95,498.44" fill="#b401ff" stroke="#b401ff" stroke-width="1.1" stroke-linejoin="round"/><polygon points="1292.67,375.79 1268.95,498.44 1272.09,497.03" fill="#ba01ff" stroke="#ba01ff" stroke-width="1.1" stroke-linejoin="round"/><polygon points="1292.67,375.79 1272.09,497.03 1275.23,495.62" fill="#c101ff" stroke="#c101ff" stroke-width="1.1" stroke-linejoin="round"/><polygon points="1292.67,375.79 1275.23,495.62 1278.37,494.21" fill="#c801ff" stroke="#c801ff" stroke-width="1.1" stroke-linejoin="round"/><polygon points="1292.67,375.79 1278.37,494.21 1281.51,492.80" fill="#d001ff" stroke="#d001ff" stroke-width="1.1" stroke-linejoin="round"/><polygon points="1292.67,375.79 1281.51,492.80 1284.65,491.38" fill="#d701ff" stroke="#d701ff" stroke-width="1.1" stroke-linejoin="round"/><polygon points="1292.67,375.79 1284.65,491.38 1287.79,489.97" fill="#df01ff" stroke="#df01ff" stroke-width="1.1" stroke-linejoin="round"/><polygon points="1292.67,375.79 1287.79,489.97 1290.93,488.56" fill="#e601ff" stroke="#e601ff" stroke-width="1.1" stroke-linejoin="round"/><polygon points="1292.67,375.79 1290.93,488.56 1294.07,487.15" fill="#ee01ff" stroke="#ee01ff" stroke-width="1.1" stroke-linejoin="round"/><polygon points="1292.67,375.79 1294.07,487.15 1297.21,485.74" fill="#f601ff" stroke="#f601ff" stroke-width="1.1" stroke-linejoin="round"/><polygon points="1292.67,375.79 1297.21,485.74 1300.34,484.33" fill="#fe01ff" stroke="#fe01ff" stroke-width="1.1" stroke-linejoin="round"/><polygon points="1292.67,375.79 1300.34,484.33 1303.48,482.91" fill="#ff01f8" stroke="#ff01f8" stroke-width="1.1" stroke-linejoin="round"/><polygon points="1292.67,375.79 1303.48,482.91 1306.62,481.50" fill="#ff01f0" stroke="#ff01f0" stroke-width="1.1" stroke-linejoin="round"/><polygon points="1292.67,375.79 1306.62,481.50 1309.76,480.09" fill="#ff01e8" stroke="#ff01e8" stroke-width="1.1" stroke-linejoin="round"/><polygon points="1292.67,375.79 1309.76,480.09 1312.90,478.68" fill="#ff01e1" stroke="#ff01e1" stroke-width="1.1" stroke-linejoin="round"/><polygon points="1292.67,375.79 1312.90,478.68 1316.04,477.27" fill="#ff02da" stroke="#ff02da" stroke-width="1.1" stroke-linejoin="round"/><polygon points="1292.67,375.79 1316.04,477.27 1319.18,475.86" fill="#ff02d4" stroke="#ff02d4" stroke-width="1.1" stroke-linejoin="round"/><polygon points="1292.67,375.79 1319.18,475.86 1322.32,474.44" fill="#ff02cd" stroke="#ff02cd" stroke-width="1.1" stroke-linejoin="round"/><polygon points="1292.67,375.79 1322.32,474.44 1325.46,473.03" fill="#ff02c7" stroke="#ff02c7" stroke-width="1.1" stroke-linejoin="round"/><polygon points="1292.67,375.79 1325.46,473.03 1328.60,471.62" fill="#ff02c1" stroke="#ff02c1" stroke-width="1.1" stroke-linejoin="round"/><polygon points="1292.67,375.79 1328.60,471.62 1331.74,470.21" fill="#ff02bb" stroke="#ff02bb" stroke-width="1.1" stroke-linejoin="round"/><polygon points="1292.67,375.79 1331.74,470.21 1334.87,468.80" fill="#ff02b6" stroke="#ff02b6" stroke-width="1.1" stroke-linejoin="round"/><polygon points="1292.67,375.79 1334.87,468.80 1338.01,467.39" fill="#ff02b0" stroke="#ff02b0" stroke-width="1.1" stroke-linejoin="round"/><polygon points="1292.67,375.79 1338.01,467.39 1341.15,465.97" fill="#ff02ab" stroke="#ff02ab" stroke-width="1.1" stroke-linejoin="round"/><polygon points="1292.67,375.79 1341.15,465.97 1344.29,464.56" fill="#ff02a6" stroke="#ff02a6" stroke-width="1.1" stroke-linejoin="round"/><polygon points="1292.67,375.79 1344.29,464.56 1347.43,463.15" fill="#ff02a1" stroke="#ff02a1" stroke-width="1.1" stroke-linejoin="round"/><polygon points="1292.67,375.79 1347.43,463.15 1350.57,461.74" fill="#ff029d" stroke="#ff029d" stroke-width="1.1" stroke-linejoin="round"/><polygon points="1292.67,375.79 1350.57,461.74 1353.71,460.33" fill="#ff0298" stroke="#ff0298" stroke-width="1.1" stroke-linejoin="round"/><polygon points="1292.67,375.79 1353.71,460.33 1356.85,458.92" fill="#ff0294" stroke="#ff0294" stroke-width="1.1" stroke-linejoin="round"/><polygon points="1292.67,375.79 1356.85,458.92 1359.99,457.50" fill="#ff028f" stroke="#ff028f" stroke-width="1.1" stroke-linejoin="round"/><polygon points="1292.67,375.79 1359.99,457.50 1363.13,456.09" fill="#ff028b" stroke="#ff028b" stroke-width="1.1" stroke-linejoin="round"/><polygon points="1292.67,375.79 1363.13,456.09 1366.27,454.68" fill="#ff0287" stroke="#ff0287" stroke-width="1.1" stroke-linejoin="round"/><polygon points="1292.67,375.79 1366.27,454.68 1369.40,453.27" fill="#ff0283" stroke="#ff0283" stroke-width="1.1" stroke-linejoin="round"/><polygon points="1292.67,375.79 1369.40,453.27 1372.54,451.86" fill="#ff027f" stroke="#ff027f" stroke-width="1.1" stroke-linejoin="round"/><polygon points="1292.67,375.79 1372.54,451.86 1375.68,450.45" fill="#ff027c" stroke="#ff027c" stroke-width="1.1" stroke-linejoin="round"/><polygon points="1292.67,375.79 1375.68,450.45 1378.82,449.03" fill="#ff0278" stroke="#ff0278" stroke-width="1.1" stroke-linejoin="round"/><polygon points="1292.67,375.79 1378.82,449.03 1381.96,447.62" fill="#ff0274" stroke="#ff0274" stroke-width="1.1" stroke-linejoin="round"/><polygon points="1292.67,375.79 1381.96,447.62 1385.10,446.21" fill="#ff0271" stroke="#ff0271" stroke-width="1.1" stroke-linejoin="round"/><polygon points="1292.67,375.79 1385.10,446.21 1388.24,444.80" fill="#ff026e" stroke="#ff026e" stroke-width="1.1" stroke-linejoin="round"/><polygon points="1292.67,375.79 1388.24,444.80 1391.38,443.39" fill="#ff026a" stroke="#ff026a" stroke-width="1.1" stroke-linejoin="round"/><polygon points="1292.67,375.79 1391.38,443.39 1394.52,441.98" fill="#ff0267" stroke="#ff0267" stroke-width="1.1" stroke-linejoin="round"/><polygon points="1292.67,375.79 1394.52,441.98 1397.66,440.56" fill="#ff0264" stroke="#ff0264" stroke-width="1.1" stroke-linejoin="round"/><polygon points="1292.67,375.79 1397.66,440.56 1400.80,439.15" fill="#ff0261" stroke="#ff0261" stroke-width="1.1" stroke-linejoin="round"/><polygon points="1292.67,375.79 1400.80,439.15 1403.93,437.74" fill="#ff025e" stroke="#ff025e" stroke-width="1.1" stroke-linejoin="round"/><polygon points="1292.67,375.79 1403.93,437.74 1407.07,436.33" fill="#ff025b" stroke="#ff025b" stroke-width="1.1" stroke-linejoin="round"/><polygon points="1292.67,375.79 1407.07,436.33 1410.21,434.92" fill="#ff0258" stroke="#ff0258" stroke-width="1.1" stroke-linejoin="round"/><polygon points="1292.67,375.79 1410.21,434.92 1413.35,433.51" fill="#ff0255" stroke="#ff0255" stroke-width="1.1" stroke-linejoin="round"/><polygon points="1292.67,375.79 1413.35,433.51 1416.49,432.09" fill="#ff0253" stroke="#ff0253" stroke-width="1.1" stroke-linejoin="round"/><polygon points="1292.67,375.79 1416.49,432.09 1419.63,430.68" fill="#ff0250" stroke="#ff0250" stroke-width="1.1" stroke-linejoin="round"/><polygon points="1292.67,375.79 1419.63,430.68 1422.77,429.27" fill="#ff024d" stroke="#ff024d" stroke-width="1.1" stroke-linejoin="round"/><polygon points="1292.67,375.79 1422.77,429.27 1425.91,427.86" fill="#ff024b" stroke="#ff024b" stroke-width="1.1" stroke-linejoin="round"/><polygon points="1292.67,375.79 1425.91,427.86 1429.05,426.45" fill="#ff0248" stroke="#ff0248" stroke-width="1.1" stroke-linejoin="round"/><polygon points="1292.67,375.79 1429.05,426.45 1432.19,425.04" fill="#ff0246" stroke="#ff0246" stroke-width="1.1" stroke-linejoin="round"/><polygon points="1292.67,375.79 1432.19,425.04 1435.33,423.62" fill="#ff0243" stroke="#ff0243" stroke-width="1.1" stroke-linejoin="round"/><polygon points="1292.67,375.79 1435.33,423.62 1438.46,422.21" fill="#ff0241" stroke="#ff0241" stroke-width="1.1" stroke-linejoin="round"/><polygon points="1292.67,375.79 1438.46,422.21 1441.60,420.80" fill="#ff023f" stroke="#ff023f" stroke-width="1.1" stroke-linejoin="round"/><polygon points="1292.67,375.79 1441.60,420.80 1444.74,419.39" fill="#ff023c" stroke="#ff023c" stroke-width="1.1" stroke-linejoin="round"/><polygon points="1292.67,375.79 1444.74,419.39 1447.88,417.98" fill="#ff023a" stroke="#ff023a" stroke-width="1.1" stroke-linejoin="round"/><polygon points="1292.67,375.79 1447.88,417.98 1451.02,416.57" fill="#ff0238" stroke="#ff0238" stroke-width="1.1" stroke-linejoin="round"/><polygon points="1292.67,375.79 1451.02,416.57 1454.16,415.15" fill="#ff0236" stroke="#ff0236" stroke-width="1.1" stroke-linejoin="round"/><polygon points="1292.67,375.79 1454.16,415.15 1457.30,413.74" fill="#ff0234" stroke="#ff0234" stroke-width="1.1" stroke-linejoin="round"/><polygon points="1292.67,375.79 1457.30,413.74 1460.44,412.33" fill="#ff0231" stroke="#ff0231" stroke-width="1.1" stroke-linejoin="round"/><polygon points="1292.67,375.79 1460.44,412.33 1463.58,410.92" fill="#ff022f" stroke="#ff022f" stroke-width="1.1" stroke-linejoin="round"/><polygon points="1292.67,375.79 1463.58,410.92 1466.72,409.51" fill="#ff022d" stroke="#ff022d" stroke-width="1.1" stroke-linejoin="round"/><polygon points="1292.67,375.79 1466.72,409.51 1469.85,408.10" fill="#ff022b" stroke="#ff022b" stroke-width="1.1" stroke-linejoin="round"/><polygon points="1292.67,375.79 1469.85,408.10 1472.99,406.68" fill="#ff0229" stroke="#ff0229" stroke-width="1.1" stroke-linejoin="round"/><polygon points="1292.67,375.79 1472.99,406.68 1476.13,405.27" fill="#ff0227" stroke="#ff0227" stroke-width="1.1" stroke-linejoin="round"/><polygon points="1292.67,375.79 1476.13,405.27 1479.27,403.86" fill="#ff0226" stroke="#ff0226" stroke-width="1.1" stroke-linejoin="round"/><polygon points="1292.67,375.79 1479.27,403.86 1482.41,402.45" fill="#ff0224" stroke="#ff0224" stroke-width="1.1" stroke-linejoin="round"/><polygon points="1292.67,375.79 1482.41,402.45 1485.55,401.04" fill="#ff0222" stroke="#ff0222" stroke-width="1.1" stroke-linejoin="round"/><polygon points="1292.67,375.79 1485.55,401.04 1488.69,399.63" fill="#ff0220" stroke="#ff0220" stroke-width="1.1" stroke-linejoin="round"/><polygon points="1292.67,375.79 1488.69,399.63 1491.83,398.21" fill="#ff021e" stroke="#ff021e" stroke-width="1.1" stroke-linejoin="round"/><polygon points="1292.67,375.79 1491.83,398.21 1494.97,396.80" fill="#ff021c" stroke="#ff021c" stroke-width="1.1" stroke-linejoin="round"/><polygon points="1292.67,375.79 1494.97,396.80 1498.11,395.39" fill="#ff021b" stroke="#ff021b" stroke-width="1.1" stroke-linejoin="round"/><polygon points="1292.67,375.79 1498.11,395.39 1501.25,393.98" fill="#ff0219" stroke="#ff0219" stroke-width="1.1" stroke-linejoin="round"/><polygon points="1292.67,375.79 1501.25,393.98 1504.38,392.57" fill="#ff0217" stroke="#ff0217" stroke-width="1.1" stroke-linejoin="round"/><polygon points="1292.67,375.79 1504.38,392.57 1507.52,391.16" fill="#ff0215" stroke="#ff0215" stroke-width="1.1" stroke-linejoin="round"/><polygon points="1292.67,375.79 1507.52,391.16 1510.66,389.75" fill="#ff0214" stroke="#ff0214" stroke-width="1.1" stroke-linejoin="round"/><polygon points="1292.67,375.79 1510.66,389.75 1513.80,388.33" fill="#ff0212" stroke="#ff0212" stroke-width="1.1" stroke-linejoin="round"/><polygon points="1292.67,375.79 1513.80,388.33 1516.94,386.92" fill="#ff0210" stroke="#ff0210" stroke-width="1.1" stroke-linejoin="round"/><polygon points="1292.67,375.79 1516.94,386.92 1520.08,385.51" fill="#ff020f" stroke="#ff020f" stroke-width="1.1" stroke-linejoin="round"/><polygon points="1292.67,375.79 1520.08,385.51 1523.22,384.10" fill="#ff020d" stroke="#ff020d" stroke-width="1.1" stroke-linejoin="round"/><polygon points="1292.67,375.79 1523.22,384.10 1526.36,382.69" fill="#ff020b" stroke="#ff020b" stroke-width="1.1" stroke-linejoin="round"/><polygon points="1292.67,375.79 1526.36,382.69 1529.50,381.28" fill="#ff020a" stroke="#ff020a" stroke-width="1.1" stroke-linejoin="round"/><polygon points="1292.67,375.79 1529.50,381.28 1532.64,379.86" fill="#ff0208" stroke="#ff0208" stroke-width="1.1" stroke-linejoin="round"/><polygon points="1292.67,375.79 1532.64,379.86 1535.78,378.45" fill="#ff0206" stroke="#ff0206" stroke-width="1.1" stroke-linejoin="round"/><polygon points="1292.67,375.79 1535.78,378.45 1538.91,377.04" fill="#ff0205" stroke="#ff0205" stroke-width="1.1" stroke-linejoin="round"/><polygon points="1292.67,375.79 1538.91,377.04 1542.05,375.63" fill="#ff0203" stroke="#ff0203" stroke-width="1.1" stroke-linejoin="round"/><polygon points="1292.67,375.79 1542.05,375.63 1545.19,374.22" fill="#ff0201" stroke="#ff0201" stroke-width="1.1" stroke-linejoin="round"/><polygon points="1292.67,375.79 1545.19,374.22 1528.82,363.64" fill="url(#w0)" shape-rendering="crispEdges"/><polygon points="1292.67,375.79 1528.82,363.64 1512.44,353.07" fill="url(#w1)" shape-rendering="crispEdges"/><polygon points="1292.67,375.79 1512.44,353.07 1496.07,342.49" fill="url(#w2)" shape-rendering="crispEdges"/><polygon points="1292.67,375.79 1496.07,342.49 1479.69,331.91" fill="url(#w3)" shape-rendering="crispEdges"/><polygon points="1292.67,375.79 1479.69,331.91 1463.32,321.34" fill="url(#w4)" shape-rendering="crispEdges"/><polygon points="1292.67,375.79 1463.32,321.34 1446.94,310.76" fill="url(#w5)" shape-rendering="crispEdges"/><polygon points="1292.67,375.79 1446.94,310.76 1430.57,300.19" fill="url(#w6)" shape-rendering="crispEdges"/><polygon points="1292.67,375.79 1430.57,300.19 1414.19,289.61" fill="url(#w7)" shape-rendering="crispEdges"/><polygon points="1292.67,375.79 1414.19,289.61 1397.82,279.04" fill="url(#w8)" shape-rendering="crispEdges"/><polygon points="1292.67,375.79 1397.82,279.04 1381.44,268.46" fill="url(#w9)" shape-rendering="crispEdges"/><polygon points="1292.67,375.79 1381.44,268.46 1365.06,257.89" fill="url(#w10)" shape-rendering="crispEdges"/><polygon points="1292.67,375.79 1365.06,257.89 1348.69,247.31" fill="url(#w11)" shape-rendering="crispEdges"/><polygon points="1292.67,375.79 1348.69,247.31 1332.31,236.73" fill="url(#w12)" shape-rendering="crispEdges"/><polygon points="1292.67,375.79 1332.31,236.73 1315.94,226.16" fill="url(#w13)" shape-rendering="crispEdges"/><polygon points="1292.67,375.79 1315.94,226.16 1299.56,215.58" fill="url(#w14)" shape-rendering="crispEdges"/><polygon points="1292.67,375.79 1299.56,215.58 1283.19,205.01" fill="url(#w15)" shape-rendering="crispEdges"/><polygon points="1292.67,375.79 1283.19,205.01 1276.02,226.17" fill="url(#w16)" shape-rendering="crispEdges"/><polygon points="1292.67,375.79 1276.02,226.17 1268.85,247.33" fill="url(#w17)" shape-rendering="crispEdges"/><polygon points="1292.67,375.79 1268.85,247.33 1261.69,268.50" fill="url(#w18)" shape-rendering="crispEdges"/><polygon points="1292.67,375.79 1261.69,268.50 1254.52,289.66" fill="url(#w19)" shape-rendering="crispEdges"/><polygon points="1292.67,375.79 1254.52,289.66 1247.35,310.82" fill="url(#w20)" shape-rendering="crispEdges"/><polygon points="1292.67,375.79 1247.35,310.82 1240.18,331.99" fill="url(#w21)" shape-rendering="crispEdges"/><polygon points="1292.67,375.79 1240.18,331.99 1233.01,353.15" fill="url(#w22)" shape-rendering="crispEdges"/><polygon points="1292.67,375.79 1233.01,353.15 1225.85,374.31" fill="url(#w23)" shape-rendering="crispEdges"/><polygon points="1292.67,375.79 1225.85,374.31 1218.68,395.47" fill="url(#w24)" shape-rendering="crispEdges"/><polygon points="1292.67,375.79 1218.68,395.47 1211.51,416.64" fill="url(#w25)" shape-rendering="crispEdges"/><polygon points="1292.67,375.79 1211.51,416.64 1204.34,437.80" fill="url(#w26)" shape-rendering="crispEdges"/><polygon points="1292.67,375.79 1204.34,437.80 1197.17,458.96" fill="url(#w27)" shape-rendering="crispEdges"/><polygon points="1292.67,375.79 1197.17,458.96 1190.01,480.13" fill="url(#w28)" shape-rendering="crispEdges"/><polygon points="1292.67,375.79 1190.01,480.13 1182.84,501.29" fill="url(#w29)" shape-rendering="crispEdges"/><polygon points="1292.67,375.79 1182.84,501.29 1175.67,522.45" fill="url(#w30)" shape-rendering="crispEdges"/><polygon points="1292.67,375.79 1175.67,522.45 1168.50,543.61" fill="url(#w31)" shape-rendering="crispEdges"/><polygon points="1292.67,375.79 1168.50,543.61 1192.05,533.03" fill="url(#w32)" shape-rendering="crispEdges"/><polygon points="1292.67,375.79 1192.05,533.03 1215.59,522.44" fill="url(#w33)" shape-rendering="crispEdges"/><polygon points="1292.67,375.79 1215.59,522.44 1239.13,511.85" fill="url(#w34)" shape-rendering="crispEdges"/><polygon points="1292.67,375.79 1239.13,511.85 1262.68,501.27" fill="url(#w35)" shape-rendering="crispEdges"/><polygon points="1292.67,375.79 1262.68,501.27 1286.22,490.68" fill="url(#w36)" shape-rendering="crispEdges"/><polygon points="1292.67,375.79 1286.22,490.68 1309.76,480.09" fill="url(#w37)" shape-rendering="crispEdges"/><polygon points="1292.67,375.79 1309.76,480.09 1333.31,469.50" fill="url(#w38)" shape-rendering="crispEdges"/><polygon points="1292.67,375.79 1333.31,469.50 1356.85,458.92" fill="url(#w39)" shape-rendering="crispEdges"/><polygon points="1292.67,375.79 1356.85,458.92 1380.39,448.33" fill="url(#w40)" shape-rendering="crispEdges"/><polygon points="1292.67,375.79 1380.39,448.33 1403.93,437.74" fill="url(#w41)" shape-rendering="crispEdges"/><polygon points="1292.67,375.79 1403.93,437.74 1427.48,427.15" fill="url(#w42)" shape-rendering="crispEdges"/><polygon points="1292.67,375.79 1427.48,427.15 1451.02,416.57" fill="url(#w43)" shape-rendering="crispEdges"/><polygon points="1292.67,375.79 1451.02,416.57 1474.56,405.98" fill="url(#w44)" shape-rendering="crispEdges"/><polygon points="1292.67,375.79 1474.56,405.98 1498.11,395.39" fill="url(#w45)" shape-rendering="crispEdges"/><polygon points="1292.67,375.79 1498.11,395.39 1521.65,384.80" fill="url(#w46)" shape-rendering="crispEdges"/><polygon points="1292.67,375.79 1521.65,384.80 1545.19,374.22" fill="url(#w47)" shape-rendering="crispEdges"/></g><path d="M1049.7,54 H1703.5 V582.2 H1049.7 Z" fill="none" stroke="#a8a8a8" stroke-width="1.5"/><rect x="1279.6" y="265.7" width="14" height="14" fill="none" stroke="#f4f4f4" stroke-width="2"/><rect x="1334.9" y="264.7" width="14" height="14" fill="none" stroke="#f4f4f4" stroke-width="2"/><rect x="1389.2" y="276.9" width="14" height="14" fill="none" stroke="#f4f4f4" stroke-width="2"/><rect x="1410.3" y="299.1" width="14" height="14" fill="none" stroke="#f4f4f4" stroke-width="2"/><rect x="1306.7" y="305.9" width="14" height="14" fill="none" stroke="#f4f4f4" stroke-width="2"/><rect x="1441.0" y="319.7" width="14" height="14" fill="none" stroke="#f4f4f4" stroke-width="2"/><rect x="1246.2" y="347.9" width="14" height="14" fill="none" stroke="#f4f4f4" stroke-width="2"/><rect x="1337.1" y="350.6" width="14" height="14" fill="none" stroke="#f4f4f4" stroke-width="2"/><rect x="1352.8" y="345.8" width="14" height="14" fill="none" stroke="#f4f4f4" stroke-width="2"/><rect x="1401.6" y="377.5" width="14" height="14" fill="none" stroke="#f4f4f4" stroke-width="2"/><rect x="1459.1" y="374.2" width="14" height="14" fill="none" stroke="#f4f4f4" stroke-width="2"/><rect x="1204.2" y="405.4" width="14" height="14" fill="none" stroke="#f4f4f4" stroke-width="2"/><rect x="1236.2" y="406.8" width="14" height="14" fill="none" stroke="#f4f4f4" stroke-width="2"/><rect x="1250.3" y="415.7" width="14" height="14" fill="none" stroke="#f4f4f4" stroke-width="2"/><rect x="1333.0" y="419.0" width="14" height="14" fill="none" stroke="#f4f4f4" stroke-width="2"/><rect x="1267.1" y="434.7" width="14" height="14" fill="none" stroke="#f4f4f4" stroke-width="2"/><rect x="1211.0" y="454.2" width="14" height="14" fill="none" stroke="#f4f4f4" stroke-width="2"/><rect x="1191.4" y="484.9" width="14" height="14" fill="none" stroke="#f4f4f4" stroke-width="2"/><rect x="1285.9" y="366.8" width="14" height="14" fill="none" stroke="#000" stroke-width="2.6"/><circle cx="1370.7" cy="295.3" r="4.6" fill="#c8b050" stroke="#000" stroke-width="1.2"/><circle cx="1317" cy="307.5" r="4.6" fill="#a0a850" stroke="#000" stroke-width="1.2"/><circle cx="1376.6" cy="314.8" r="4.6" fill="#c8a050" stroke="#000" stroke-width="1.2"/><circle cx="1391.8" cy="329.2" r="4.6" fill="#c08060" stroke="#000" stroke-width="1.2"/><circle cx="1267.3" cy="323.7" r="4.6" fill="#4a8040" stroke="#000" stroke-width="1.2"/><circle cx="1278.7" cy="353.3" r="4.6" fill="#5a6a50" stroke="#000" stroke-width="1.2"/><circle cx="1287.1" cy="367.7" r="4.6" fill="#ffffff" stroke="#000" stroke-width="1.2"/><circle cx="1302.9" cy="382.9" r="4.6" fill="#7a5a50" stroke="#000" stroke-width="1.2"/><circle cx="1289.8" cy="387.5" r="4.6" fill="#b09080" stroke="#000" stroke-width="1.2"/><circle cx="1273" cy="384.2" r="4.6" fill="#e0d8d0" stroke="#000" stroke-width="1.2"/><circle cx="1267.3" cy="390.2" r="4.6" fill="#d0c8c0" stroke="#000" stroke-width="1.2"/><circle cx="1262.7" cy="394.8" r="4.6" fill="#c0b8b0" stroke="#000" stroke-width="1.2"/><circle cx="1258.7" cy="400.5" r="4.6" fill="#b0a8a0" stroke="#000" stroke-width="1.2"/><circle cx="1237.8" cy="388.8" r="4.6" fill="#80b090" stroke="#000" stroke-width="1.2"/><circle cx="1323.7" cy="406.5" r="4.6" fill="#b05060" stroke="#000" stroke-width="1.2"/><circle cx="1384.8" cy="401.8" r="4.6" fill="#a84048" stroke="#000" stroke-width="1.2"/><circle cx="1230.7" cy="423" r="4.6" fill="#000000" stroke="#000" stroke-width="1.2"/><circle cx="1225.3" cy="428.7" r="4.6" fill="#7080a0" stroke="#000" stroke-width="1.2"/><circle cx="1235" cy="428.7" r="4.6" fill="#8888b0" stroke="#000" stroke-width="1.2"/><circle cx="1204.4" cy="427.3" r="4.6" fill="#208080" stroke="#000" stroke-width="1.2"/><circle cx="1275.7" cy="437.6" r="4.6" fill="#a05080" stroke="#000" stroke-width="1.2"/><circle cx="1205.8" cy="456.6" r="4.6" fill="#6060a0" stroke="#000" stroke-width="1.2"/><circle cx="1232.3" cy="458.5" r="4.6" fill="#705870" stroke="#000" stroke-width="1.2"/><circle cx="1187.6" cy="484.6" r="4.6" fill="#404070" stroke="#000" stroke-width="1.2"/><defs><linearGradient id="insL" x1="0" y1="0" x2="0" y2="1"><stop offset="0" stop-color="#00789c"/><stop offset="1" stop-color="#004c8e"/></linearGradient><linearGradient id="insR" x1="0" y1="0" x2="0.3" y2="1"><stop offset="0" stop-color="#08ccff"/><stop offset="1" stop-color="#3a86ff"/></linearGradient></defs><rect x="1506.5" y="62" width="190" height="155" fill="url(#insL)" stroke="#9c9c9c" stroke-width="1.4"/><polygon points="1627.5,63 1696,63 1696,216 1576,216" fill="url(#insR)"/><rect x="1594" y="131.5" width="14.5" height="14.5" fill="none" stroke="#f4f4f4" stroke-width="2"/><circle cx="1573" cy="204" r="4.8" fill="#1f8fa0" stroke="#000" stroke-width="1.2"/><circle cx="1657" cy="207" r="4.8" fill="#8a90a8" stroke="#000" stroke-width="1.2"/><circle cx="1684" cy="194" r="5" fill="#000" stroke="#000" stroke-width="1"/><line x1="1043.5" y1="582.2" x2="1049.7" y2="582.2" stroke="#d0d0d0" stroke-width="1.5"/><line x1="1049.7" y1="582.2" x2="1049.7" y2="588" stroke="#d0d0d0" stroke-width="1.5"/><line x1="1043.5" y1="519.5" x2="1049.7" y2="519.5" stroke="#d0d0d0" stroke-width="1.5"/><line x1="1127.4" y1="582.2" x2="1127.4" y2="588" stroke="#d0d0d0" stroke-width="1.5"/><line x1="1043.5" y1="456.7" x2="1049.7" y2="456.7" stroke="#d0d0d0" stroke-width="1.5"/><line x1="1205.1" y1="582.2" x2="1205.1" y2="588" stroke="#d0d0d0" stroke-width="1.5"/><line x1="1043.5" y1="394.0" x2="1049.7" y2="394.0" stroke="#d0d0d0" stroke-width="1.5"/><line x1="1282.8" y1="582.2" x2="1282.8" y2="588" stroke="#d0d0d0" stroke-width="1.5"/><line x1="1043.5" y1="331.2" x2="1049.7" y2="331.2" stroke="#d0d0d0" stroke-width="1.5"/><line x1="1360.5" y1="582.2" x2="1360.5" y2="588" stroke="#d0d0d0" stroke-width="1.5"/><line x1="1043.5" y1="268.5" x2="1049.7" y2="268.5" stroke="#d0d0d0" stroke-width="1.5"/><line x1="1438.2" y1="582.2" x2="1438.2" y2="588" stroke="#d0d0d0" stroke-width="1.5"/><line x1="1043.5" y1="205.8" x2="1049.7" y2="205.8" stroke="#d0d0d0" stroke-width="1.5"/><line x1="1515.9" y1="582.2" x2="1515.9" y2="588" stroke="#d0d0d0" stroke-width="1.5"/><line x1="1043.5" y1="143.0" x2="1049.7" y2="143.0" stroke="#d0d0d0" stroke-width="1.5"/><line x1="1593.6" y1="582.2" x2="1593.6" y2="588" stroke="#d0d0d0" stroke-width="1.5"/><line x1="1043.5" y1="80.3" x2="1049.7" y2="80.3" stroke="#d0d0d0" stroke-width="1.5"/><line x1="1671.3" y1="582.2" x2="1671.3" y2="588" stroke="#d0d0d0" stroke-width="1.5"/></svg>
<div style="position:absolute;left:1419.00px;top:540.40px;width:281.00px;height:28.60px;background:#2e2e2e"></div>
<div class="t" style="left:1449.36px;top:545.00px;font-size:21.88px;line-height:21.88px;color:#f2f2f2;transform:scaleX(0.9350);-webkit-text-stroke:0.31px #f2f2f2;">RGB Triplet: 0, 133, 163</div>
<div class="t" style="left:1035.57px;top:575.00px;font-size:15.94px;line-height:15.94px;color:#dcdcdc;transform:scaleX(0.9200);">0</div>
<div class="t" style="left:1045.56px;top:592.00px;font-size:16.09px;line-height:16.09px;color:#dcdcdc;transform:scaleX(0.9200);">0</div>
<div class="t" style="left:1023.47px;top:512.00px;font-size:15.94px;line-height:15.94px;color:#dcdcdc;transform:scaleX(0.9200);">0,1</div>
<div class="t" style="left:1117.15px;top:592.00px;font-size:16.09px;line-height:16.09px;color:#dcdcdc;transform:scaleX(0.9200);">0,1</div>
<div class="t" style="left:1023.55px;top:449.00px;font-size:15.94px;line-height:15.94px;color:#dcdcdc;transform:scaleX(0.9200);">0,2</div>
<div class="t" style="left:1194.89px;top:592.00px;font-size:16.09px;line-height:16.09px;color:#dcdcdc;transform:scaleX(0.9200);">0,2</div>
<div class="t" style="left:1023.40px;top:386.00px;font-size:15.94px;line-height:15.94px;color:#dcdcdc;transform:scaleX(0.9200);">0,3</div>
<div class="t" style="left:1272.51px;top:592.00px;font-size:16.09px;line-height:16.09px;color:#dcdcdc;transform:scaleX(0.9200);">0,3</div>
<div class="t" style="left:1023.25px;top:324.00px;font-size:15.94px;line-height:15.94px;color:#dcdcdc;transform:scaleX(0.9200);">0,4</div>
<div class="t" style="left:1350.14px;top:592.00px;font-size:16.09px;line-height:16.09px;color:#dcdcdc;transform:scaleX(0.9200);">0,4</div>
<div class="t" style="left:1023.40px;top:261.00px;font-size:15.94px;line-height:15.94px;color:#dcdcdc;transform:scaleX(0.9200);">0,5</div>
<div class="t" style="left:1427.91px;top:592.00px;font-size:16.09px;line-height:16.09px;color:#dcdcdc;transform:scaleX(0.9200);">0,5</div>
<div class="t" style="left:1023.40px;top:198.00px;font-size:15.94px;line-height:15.94px;color:#dcdcdc;transform:scaleX(0.9200);">0,6</div>
<div class="t" style="left:1505.61px;top:592.00px;font-size:16.09px;line-height:16.09px;color:#dcdcdc;transform:scaleX(0.9200);">0,6</div>
<div class="t" style="left:1023.55px;top:136.00px;font-size:15.94px;line-height:15.94px;color:#dcdcdc;transform:scaleX(0.9200);">0,7</div>
<div class="t" style="left:1583.39px;top:592.00px;font-size:16.09px;line-height:16.09px;color:#dcdcdc;transform:scaleX(0.9200);">0,7</div>
<div class="t" style="left:1023.40px;top:73.00px;font-size:15.94px;line-height:15.94px;color:#dcdcdc;transform:scaleX(0.9200);">0,8</div>
<div class="t" style="left:1661.01px;top:592.00px;font-size:16.09px;line-height:16.09px;color:#dcdcdc;transform:scaleX(0.9200);">0,8</div>
</body></html>
